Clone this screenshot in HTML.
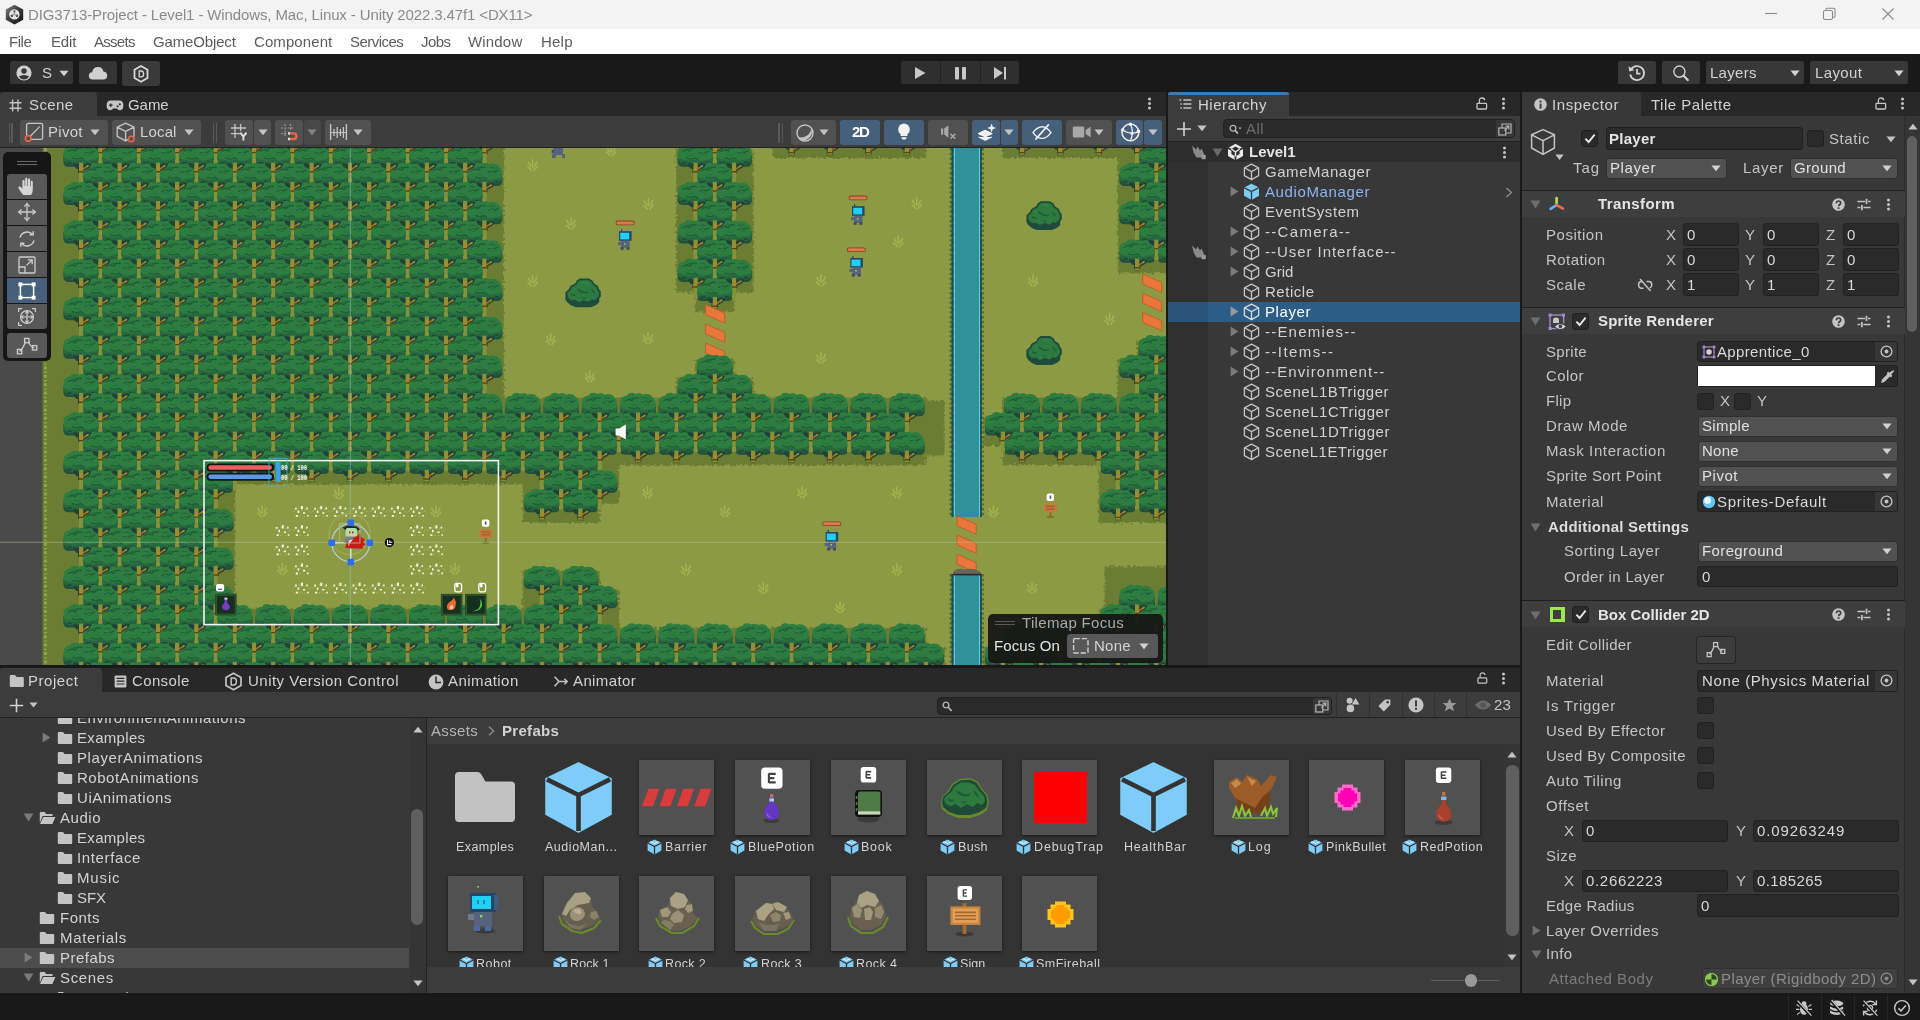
<!DOCTYPE html>
<html><head><meta charset="utf-8"><title>Unity</title><style>
html,body{margin:0;padding:0;background:#191919;}
body{width:1920px;height:1020px;overflow:hidden;position:relative;font-family:"Liberation Sans",sans-serif;}
div,span.t,svg{position:absolute;}
span.t{white-space:nowrap;will-change:transform;}
</style></head><body>
<!-- top -->
<div style="left:0px;top:0px;width:1920px;height:29px;background:#f3f3f3;"></div>
<svg style="left:3.5px;top:4px;" width="21" height="22" viewBox="0 0 21 22"><defs><linearGradient id="ug" x1="0" y1="0" x2="1" y2="1"><stop offset="0" stop-color="#8a8a8a"/><stop offset=".45" stop-color="#3c3c3c"/><stop offset="1" stop-color="#111"/></linearGradient></defs><path d="M10.500 0.800L19.200 5.600V15.800L10.500 20.600L1.800 15.800V5.600Z" fill="url(#ug)"/><circle cx="10.400" cy="10.400" r="5.200" fill="#e4e4e4"/><circle cx="10.400" cy="7.400" r="1.100" fill="#555"/><circle cx="7.900" cy="11.800" r="1.200" fill="#444"/><circle cx="12.900" cy="11.800" r="1.200" fill="#444"/><path d="M10.400 10.400V7.600M10.400 10.400L8 11.800M10.400 10.400L12.800 11.800" stroke="#777" stroke-width=".8"/></svg>
<span class="t" style="left:27.5px;top:4.50px;font-size:15px;line-height:20px;color:#8a8a8a;letter-spacing:-0.121px;">DIG3713-Project - Level1 - Windows, Mac, Linux - Unity 2022.3.47f1 &lt;DX11&gt;</span>
<svg style="left:1760px;top:5px;" width="140" height="20" viewBox="0 0 140 20"><path d="M5 8.5 H17" stroke="#8a8a8a" stroke-width="1.1" fill="none"/><rect x="63.5" y="5.5" width="9" height="9" rx="1.5" stroke="#8a8a8a" stroke-width="1.1" fill="none"/><path d="M66 5.5 V4.5 Q66 3.2 67.3 3.2 H73.5 Q75 3.2 75 4.7 V11 Q75 12.3 73.7 12.3 H72.6" stroke="#8a8a8a" stroke-width="1.1" fill="none"/><path d="M122.5 3.5 L133.5 14.5 M133.5 3.5 L122.5 14.5" stroke="#8a8a8a" stroke-width="1.1" fill="none"/></svg>
<div style="left:0px;top:29px;width:1920px;height:25px;background:#ffffff;"></div>
<span class="t" style="left:9.3px;top:31.50px;font-size:15px;line-height:20px;color:#5c5c5c;letter-spacing:-0.443px;">File</span>
<span class="t" style="left:50.7px;top:31.50px;font-size:15px;line-height:20px;color:#5c5c5c;letter-spacing:-0.137px;">Edit</span>
<span class="t" style="left:94.3px;top:31.50px;font-size:15px;line-height:20px;color:#5c5c5c;letter-spacing:-0.719px;">Assets</span>
<span class="t" style="left:153.3px;top:31.50px;font-size:15px;line-height:20px;color:#5c5c5c;letter-spacing:-0.150px;">GameObject</span>
<span class="t" style="left:254px;top:31.50px;font-size:15px;line-height:20px;color:#5c5c5c;letter-spacing:0.084px;">Component</span>
<span class="t" style="left:350px;top:31.50px;font-size:15px;line-height:20px;color:#5c5c5c;letter-spacing:-0.527px;">Services</span>
<span class="t" style="left:420.7px;top:31.50px;font-size:15px;line-height:20px;color:#5c5c5c;letter-spacing:-0.596px;">Jobs</span>
<span class="t" style="left:468.3px;top:31.50px;font-size:15px;line-height:20px;color:#5c5c5c;letter-spacing:0.175px;">Window</span>
<span class="t" style="left:541px;top:31.50px;font-size:15px;line-height:20px;color:#5c5c5c;letter-spacing:0.213px;">Help</span>
<div style="left:0px;top:54px;width:1920px;height:38px;background:#191919;"></div>
<div style="left:10px;top:61px;width:63px;height:23px;background:#353535;border-radius:2px;"></div>
<div style="left:79px;top:61px;width:38px;height:23px;background:#353535;border-radius:2px;"></div>
<div style="left:122px;top:61px;width:38px;height:25px;background:#3a3a3a;border-radius:3px;"></div>
<svg style="left:16px;top:65px;" width="16" height="16" viewBox="0 0 16 16"><circle cx="8" cy="8" r="7.6" fill="#d0d0d0"/><circle cx="8" cy="6" r="2.7" fill="#353535"/><path d="M2.8 11.6 Q8 8.2 13.2 11.6 Q11 14.6 8 14.6 Q5 14.6 2.8 11.6Z" fill="#353535"/></svg>
<span class="t" style="left:42px;top:63.00px;font-size:15px;line-height:20px;color:#d2d2d2;letter-spacing:0.500px;">S</span>
<svg style="left:59px;top:70px;" width="10" height="7" viewBox="0 0 10 7"><path d="M0.5 0.8 H9.5 L5 6.2Z" fill="#d2d2d2"/></svg>
<svg style="left:88px;top:66px;" width="20" height="14" viewBox="0 0 20 14"><path d="M5 13.5 Q0.8 13.5 0.8 9.8 Q0.8 6.6 4.2 6.2 Q5 1 10 1 Q14.4 1 15.4 5.4 Q19.2 5.8 19.2 9.6 Q19.2 13.5 15.2 13.5Z" fill="#d0d0d0"/></svg>
<svg style="left:133px;top:65px;" width="16" height="18" viewBox="0 0 16 18"><path d="M8 1 L14.5 4.8 V13 L8 16.8 L1.5 13 V4.8Z" fill="none" stroke="#d8d8d8" stroke-width="1.8"/><path d="M6.2 6 H8.2 Q10.6 6 10.6 8.9 Q10.6 11.8 8.2 11.8 H6.2Z" fill="none" stroke="#d8d8d8" stroke-width="1.3"/></svg>
<div style="left:901px;top:61px;width:118px;height:23px;background:#2f2f2f;border-radius:2px;"></div>
<div style="left:940px;top:61px;width:1px;height:23px;background:#222;"></div>
<div style="left:980px;top:61px;width:1px;height:23px;background:#222;"></div>
<svg style="left:901px;top:61px;" width="118" height="23" viewBox="0 0 118 23"><path d="M14 6 L24.5 12 L14 18Z" fill="#c8c8c8"/><rect x="54" y="6" width="4" height="12.5" rx="1" fill="#c8c8c8"/><rect x="61" y="6" width="4" height="12.5" rx="1" fill="#c8c8c8"/><path d="M93 6 L102 12 L93 18Z" fill="#c8c8c8"/><rect x="103" y="6" width="2" height="12.5" fill="#c8c8c8"/></svg>
<div style="left:1618px;top:61px;width:38px;height:23px;background:#383838;border-radius:2px;"></div>
<div style="left:1662px;top:61px;width:38px;height:23px;background:#383838;border-radius:2px;"></div>
<div style="left:1706px;top:61px;width:98px;height:23px;background:#383838;border-radius:2px;"></div>
<div style="left:1810px;top:61px;width:98px;height:23px;background:#383838;border-radius:2px;"></div>
<svg style="left:1628px;top:64px;" width="18" height="18" viewBox="0 0 18 18"><path d="M3.2 5.2 A7 7 0 1 1 2.2 10.5" fill="none" stroke="#d0d0d0" stroke-width="1.8"/><path d="M0.6 2.2 L1.2 7.6 L6.4 6.2Z" fill="#d0d0d0"/><path d="M9 5 V9.6 H12.4" fill="none" stroke="#d0d0d0" stroke-width="1.8"/></svg>
<svg style="left:1672px;top:64px;" width="18" height="18" viewBox="0 0 18 18"><circle cx="7.4" cy="7.6" r="5.6" fill="none" stroke="#d0d0d0" stroke-width="1.4"/><path d="M11.6 11.8 L15.8 16" stroke="#d0d0d0" stroke-width="2.2" stroke-linecap="round"/></svg>
<span class="t" style="left:1710px;top:62.50px;font-size:15px;line-height:20px;color:#d2d2d2;letter-spacing:0.280px;">Layers</span>
<span class="t" style="left:1814.5px;top:62.50px;font-size:15px;line-height:20px;color:#d2d2d2;letter-spacing:0.361px;">Layout</span>
<svg style="left:1790px;top:70px;" width="10" height="7" viewBox="0 0 10 7"><path d="M0.5 0.6 H9.5 L5 6.2Z" fill="#d2d2d2"/></svg>
<svg style="left:1894px;top:70px;" width="10" height="7" viewBox="0 0 10 7"><path d="M0.5 0.6 H9.5 L5 6.2Z" fill="#d2d2d2"/></svg>
<!-- scene -->
<svg style="left:0;top:148px" width="1166" height="517" viewBox="0 0 1166 517"><defs>
<g id="tk"><path d="M-9 17.5H11L5.5 24.4H3.2V28.8H-3.2V24.4H-5Z" fill="#20433a"/><rect x="-2.2" y="17" width="4.4" height="22" fill="#84933a"/><path d="M-2.2 21.2H2.2V23.8L6.4 21L7.6 22.4L2.2 26.4V27.8H-2.2Z" fill="#9a8c31"/><path d="M-2.2 26.8H2.2V28.2H-2.2ZM2.2 25L5.2 22.8L6 24L2.2 26.6Z" fill="#6e3d14"/></g>
<g id="tks"><path d="M-9 17.5H11L5.5 24.4H3.2V28.8H-3.2V24.4H-5Z" fill="#20433a"/><rect x="-2.2" y="17" width="4.4" height="12.6" fill="#84933a"/><path d="M-2.2 21.2H2.2V23.8L6.4 21L7.6 22.4L2.2 26.4V27.8H-2.2Z" fill="#9a8c31"/><path d="M-2.2 26.8H2.2V28.2H-2.2ZM2.2 25L5.2 22.8L6 24L2.2 26.6Z" fill="#6e3d14"/><path d="M-3.4 29.6H3.4V31H-3.4Z" fill="#5a6c2a"/></g>
<g id="tb"><path d="M2.2 20.4L10.5 19L8.4 23.4L2.2 27ZM-2.2 20.4L-8.6 19.2L-6.4 22.6L-2.2 24.6Z" fill="#1f4238"/><path d="M2.2 23.8L6.8 20.4L8 21.8L2.2 26.3Z" fill="#9a8c31"/><path d="M2.2 25.2L5.4 22.8L6 23.8L2.2 26.6Z" fill="#6e3d14"/></g>
<rect id="tu" x="-17.8" y="8" width="35.6" height="14.4" rx="4.5" fill="#21503b"/>
<g id="tr"><g transform="translate(0 -1.7) scale(1.04 1.135)"><path d="M-16.8 9C-16.8 5-14 3-10.5 3.2C-10 .8-5.5-.4-2.5 1.6C0 .6 3 .8 4.5 2.2C8 .8 12.5 1.6 13.5 4C16 5 16.8 7.5 16.8 10.5V13C16.8 16.6 14.6 18.6 11 18.8L4.4 19.8L2.4 17.6H-2.4L-4.4 19.8L-11 18.8C-14.6 18.6-16.8 16.6-16.8 13Z" fill="#2d7c40"/><path d="M-16.8 12.6C-14 16.2-9 14.2-6 16.2C-3 14.6 3 14.6 6 16.2C9 14.2 14 16.2 16.8 12.6V13C16.8 16.6 14.6 18.6 11 18.8L4.4 19.8L2.4 17.6H-2.4L-4.4 19.8L-11 18.8C-14.6 18.6-16.8 16.6-16.8 13Z" fill="#28683f"/><path d="M-13.6 17h4.6v1.4h-4.6zM-7 18h3v1.2H-7zM4 17.8h3.6v1.3H4zM9.6 16.8h4.2v1.4H9.6z" fill="#1f4a3b"/><path d="M-9 6.6c1-2 4-2.600 6-1.400c-2.400-.2-4.400.4-6 1.400zM3 5.400c2.400-1.400 6-1.200 8 .6c-2.600-.6-5.400-.8-8-.6zM-8 11.600c2.600-1 5.600-1 8 .2c-2.600-.4-5.400-.5-8-.2zM5 11c2-.8 4.600-.8 6.600 0c-2.200-.2-4.400-.2-6.600 0z" fill="#1f5a3a" opacity=".7"/><path d="M-13 8.600q2.600-3.600 7.400-1.200q1.200-3.600 6.600-2.400M3.400 9.400q3-2.600 6.600-.6l3.400-1.600M-9 13.400q4 2 8.400.2l3 1.200" fill="none" stroke="#1e5538" stroke-width="1.100" opacity=".85"/><path d="M-14 9.500c1.500-1.400 3.400-1.600 5-.8c-1.800 0-3.400.2-5 .8zM3 8.400c2-1.200 4.600-1.200 6.600 0c-2.400-.2-4.400-.3-6.600 0z" fill="#34904a" opacity=".8"/></g></g>
<g id="tf" stroke="#a9b752" stroke-width="1.5" fill="none" opacity=".9"><path d="M1.600 3.400L4.400 8.400M6 .8V9.400M10.400 3L7.800 8.400M3.200 9.400L5.200 12.600M9 9.400L7 12.600M1 8l1.600 2M11 7.600l-1.400 2.400"/></g>
<filter id="rg" x="-2%" y="-2%" width="104%" height="104%"><feTurbulence type="fractalNoise" baseFrequency=".42" numOctaves="1" seed="7" result="n"/><feDisplacementMap in="SourceGraphic" in2="n" scale="7" xChannelSelector="R" yChannelSelector="G"/></filter>
</defs>
<rect x="0" y="0" width="1166" height="517" fill="#4a4a4a"/>
<rect x="42.8" y="0" width="1123.2" height="517" fill="#8d9a45"/>
<rect x="42.8" y="0" width="41" height="517" fill="#6b7d33"/>
<path d="M45.5 0V517" stroke="#a3b153" stroke-width="2.6" stroke-dasharray="3 2.2 1.4 1.8" opacity=".8"/>
<path d="M82.4 -17.9h36v38.6h-36zM120.8 -17.9h36v38.6h-36zM159.2 -17.9h36v38.6h-36zM197.6 -17.9h36v38.6h-36zM236.0 -17.9h36v38.6h-36zM274.4 -17.9h36v38.6h-36zM312.8 -17.9h36v38.6h-36zM351.2 -17.9h36v38.6h-36zM389.6 -17.9h36v38.6h-36zM428.0 -17.9h36v38.6h-36zM466.4 -17.9h36v38.6h-36zM696.8 -17.9h36v38.6h-36zM773.6 -17.9h36v26.5h-36zM812.0 -17.9h36v26.5h-36zM850.4 -17.9h36v26.5h-36zM888.8 -17.9h36v26.5h-36zM1004.0 -17.9h36v26.5h-36zM1042.4 -17.9h36v26.5h-36zM1080.8 -17.9h36v26.5h-36zM1119.2 -17.9h36v38.6h-36zM63.2 1.3h36v38.6h-36zM101.6 1.3h36v38.6h-36zM140.0 1.3h36v38.6h-36zM178.4 1.3h36v38.6h-36zM216.8 1.3h36v38.6h-36zM255.2 1.3h36v38.6h-36zM293.6 1.3h36v38.6h-36zM332.0 1.3h36v38.6h-36zM370.4 1.3h36v38.6h-36zM408.8 1.3h36v38.6h-36zM447.2 1.3h36v38.6h-36zM677.6 1.3h36v38.6h-36zM716.0 1.3h36v38.6h-36zM1138.4 1.3h36v38.6h-36zM82.4 20.5h36v38.6h-36zM120.8 20.5h36v38.6h-36zM159.2 20.5h36v38.6h-36zM197.6 20.5h36v38.6h-36zM236.0 20.5h36v38.6h-36zM274.4 20.5h36v38.6h-36zM312.8 20.5h36v38.6h-36zM351.2 20.5h36v38.6h-36zM389.6 20.5h36v38.6h-36zM428.0 20.5h36v38.6h-36zM466.4 20.5h36v38.6h-36zM696.8 20.5h36v38.6h-36zM1119.2 20.5h36v38.6h-36zM1157.6 20.5h36v38.6h-36zM63.2 39.7h36v38.6h-36zM101.6 39.7h36v38.6h-36zM140.0 39.7h36v38.6h-36zM178.4 39.7h36v38.6h-36zM216.8 39.7h36v38.6h-36zM255.2 39.7h36v38.6h-36zM293.6 39.7h36v38.6h-36zM332.0 39.7h36v38.6h-36zM370.4 39.7h36v38.6h-36zM408.8 39.7h36v38.6h-36zM447.2 39.7h36v38.6h-36zM677.6 39.7h36v38.6h-36zM716.0 39.7h36v38.6h-36zM1138.4 39.7h36v38.6h-36zM82.4 58.9h36v38.6h-36zM120.8 58.9h36v38.6h-36zM159.2 58.9h36v38.6h-36zM197.6 58.9h36v38.6h-36zM236.0 58.9h36v38.6h-36zM274.4 58.9h36v38.6h-36zM312.8 58.9h36v38.6h-36zM351.2 58.9h36v38.6h-36zM389.6 58.9h36v38.6h-36zM428.0 58.9h36v38.6h-36zM466.4 58.9h36v38.6h-36zM696.8 58.9h36v38.6h-36zM1119.2 58.9h36v38.6h-36zM1157.6 58.9h36v38.6h-36zM63.2 78.1h36v38.6h-36zM101.6 78.1h36v38.6h-36zM140.0 78.1h36v38.6h-36zM178.4 78.1h36v38.6h-36zM216.8 78.1h36v38.6h-36zM255.2 78.1h36v38.6h-36zM293.6 78.1h36v38.6h-36zM332.0 78.1h36v38.6h-36zM370.4 78.1h36v38.6h-36zM408.8 78.1h36v38.6h-36zM447.2 78.1h36v38.6h-36zM677.6 78.1h36v38.6h-36zM716.0 78.1h36v38.6h-36zM1138.4 78.1h36v26.5h-36zM82.4 97.3h36v38.6h-36zM120.8 97.3h36v38.6h-36zM159.2 97.3h36v38.6h-36zM197.6 97.3h36v38.6h-36zM236.0 97.3h36v38.6h-36zM274.4 97.3h36v38.6h-36zM312.8 97.3h36v38.6h-36zM351.2 97.3h36v38.6h-36zM389.6 97.3h36v38.6h-36zM428.0 97.3h36v38.6h-36zM466.4 97.3h36v38.6h-36zM696.8 97.3h36v38.6h-36zM1119.2 97.3h36v26.5h-36zM1157.6 97.3h36v26.5h-36zM63.2 116.5h36v38.6h-36zM101.6 116.5h36v38.6h-36zM140.0 116.5h36v38.6h-36zM178.4 116.5h36v38.6h-36zM216.8 116.5h36v38.6h-36zM255.2 116.5h36v38.6h-36zM293.6 116.5h36v38.6h-36zM332.0 116.5h36v38.6h-36zM370.4 116.5h36v38.6h-36zM408.8 116.5h36v38.6h-36zM447.2 116.5h36v38.6h-36zM677.6 116.5h36v26.5h-36zM716.0 116.5h36v26.5h-36zM82.4 135.7h36v38.6h-36zM120.8 135.7h36v38.6h-36zM159.2 135.7h36v38.6h-36zM197.6 135.7h36v38.6h-36zM236.0 135.7h36v38.6h-36zM274.4 135.7h36v38.6h-36zM312.8 135.7h36v38.6h-36zM351.2 135.7h36v38.6h-36zM389.6 135.7h36v38.6h-36zM428.0 135.7h36v38.6h-36zM466.4 135.7h36v38.6h-36zM696.8 135.7h36v26.5h-36zM63.2 154.9h36v38.6h-36zM101.6 154.9h36v38.6h-36zM140.0 154.9h36v38.6h-36zM178.4 154.9h36v38.6h-36zM216.8 154.9h36v38.6h-36zM255.2 154.9h36v38.6h-36zM293.6 154.9h36v38.6h-36zM332.0 154.9h36v38.6h-36zM370.4 154.9h36v38.6h-36zM408.8 154.9h36v38.6h-36zM447.2 154.9h36v38.6h-36zM82.4 174.1h36v38.6h-36zM120.8 174.1h36v38.6h-36zM159.2 174.1h36v38.6h-36zM197.6 174.1h36v38.6h-36zM236.0 174.1h36v38.6h-36zM274.4 174.1h36v38.6h-36zM312.8 174.1h36v38.6h-36zM351.2 174.1h36v38.6h-36zM389.6 174.1h36v38.6h-36zM428.0 174.1h36v38.6h-36zM466.4 174.1h36v38.6h-36zM63.2 193.3h36v38.6h-36zM101.6 193.3h36v38.6h-36zM140.0 193.3h36v38.6h-36zM178.4 193.3h36v38.6h-36zM216.8 193.3h36v38.6h-36zM255.2 193.3h36v38.6h-36zM293.6 193.3h36v38.6h-36zM332.0 193.3h36v38.6h-36zM370.4 193.3h36v38.6h-36zM408.8 193.3h36v38.6h-36zM447.2 193.3h36v38.6h-36zM1138.4 193.3h36v38.6h-36zM82.4 212.5h36v38.6h-36zM120.8 212.5h36v38.6h-36zM159.2 212.5h36v38.6h-36zM197.6 212.5h36v38.6h-36zM236.0 212.5h36v38.6h-36zM274.4 212.5h36v38.6h-36zM312.8 212.5h36v38.6h-36zM351.2 212.5h36v38.6h-36zM389.6 212.5h36v38.6h-36zM428.0 212.5h36v38.6h-36zM466.4 212.5h36v38.6h-36zM696.8 212.5h36v38.6h-36zM1119.2 212.5h36v38.6h-36zM1157.6 212.5h36v38.6h-36zM63.2 231.7h36v38.6h-36zM101.6 231.7h36v38.6h-36zM140.0 231.7h36v38.6h-36zM178.4 231.7h36v38.6h-36zM216.8 231.7h36v38.6h-36zM255.2 231.7h36v38.6h-36zM293.6 231.7h36v38.6h-36zM332.0 231.7h36v38.6h-36zM370.4 231.7h36v38.6h-36zM408.8 231.7h36v38.6h-36zM447.2 231.7h36v38.6h-36zM677.6 231.7h36v38.6h-36zM716.0 231.7h36v38.6h-36zM1138.4 231.7h36v38.6h-36zM82.4 250.9h36v38.6h-36zM120.8 250.9h36v38.6h-36zM159.2 250.9h36v38.6h-36zM197.6 250.9h36v38.6h-36zM236.0 250.9h36v38.6h-36zM274.4 250.9h36v38.6h-36zM312.8 250.9h36v38.6h-36zM351.2 250.9h36v38.6h-36zM389.6 250.9h36v38.6h-36zM428.0 250.9h36v38.6h-36zM466.4 250.9h36v38.6h-36zM504.8 250.9h36v38.6h-36zM543.2 250.9h36v38.6h-36zM581.6 250.9h36v38.6h-36zM620.0 250.9h36v38.6h-36zM658.4 250.9h36v38.6h-36zM696.8 250.9h36v38.6h-36zM735.2 250.9h36v38.6h-36zM773.6 250.9h36v38.6h-36zM812.0 250.9h36v38.6h-36zM850.4 250.9h36v38.6h-36zM888.8 250.9h36v38.6h-36zM1004.0 250.9h36v38.6h-36zM1042.4 250.9h36v38.6h-36zM1080.8 250.9h36v38.6h-36zM1119.2 250.9h36v38.6h-36zM1157.6 250.9h36v38.6h-36zM63.2 270.1h36v38.6h-36zM101.6 270.1h36v38.6h-36zM140.0 270.1h36v38.6h-36zM178.4 270.1h36v38.6h-36zM216.8 270.1h36v38.6h-36zM255.2 270.1h36v38.6h-36zM293.6 270.1h36v38.6h-36zM332.0 270.1h36v38.6h-36zM370.4 270.1h36v38.6h-36zM408.8 270.1h36v38.6h-36zM447.2 270.1h36v38.6h-36zM485.6 270.1h36v38.6h-36zM524.0 270.1h36v38.6h-36zM562.4 270.1h36v38.6h-36zM600.8 270.1h36v26.5h-36zM639.2 270.1h36v26.5h-36zM677.6 270.1h36v26.5h-36zM716.0 270.1h36v26.5h-36zM754.4 270.1h36v26.5h-36zM792.8 270.1h36v26.5h-36zM831.2 270.1h36v26.5h-36zM869.6 270.1h36v26.5h-36zM984.8 270.1h36v26.5h-36zM1023.2 270.1h36v26.5h-36zM1061.6 270.1h36v26.5h-36zM1100.0 270.1h36v38.6h-36zM1138.4 270.1h36v38.6h-36zM82.4 289.3h36v38.6h-36zM120.8 289.3h36v38.6h-36zM159.2 289.3h36v38.6h-36zM197.6 289.3h36v38.6h-36zM236.0 289.3h36v26.5h-36zM274.4 289.3h36v26.5h-36zM312.8 289.3h36v26.5h-36zM351.2 289.3h36v26.5h-36zM389.6 289.3h36v26.5h-36zM428.0 289.3h36v26.5h-36zM466.4 289.3h36v26.5h-36zM504.8 289.3h36v26.5h-36zM543.2 289.3h36v38.6h-36zM581.6 289.3h36v38.6h-36zM620.0 289.3h36v26.5h-36zM658.4 289.3h36v26.5h-36zM696.8 289.3h36v26.5h-36zM735.2 289.3h36v26.5h-36zM773.6 289.3h36v26.5h-36zM812.0 289.3h36v26.5h-36zM850.4 289.3h36v26.5h-36zM888.8 289.3h36v26.5h-36zM1004.0 289.3h36v26.5h-36zM1042.4 289.3h36v26.5h-36zM1080.8 289.3h36v26.5h-36zM1119.2 289.3h36v38.6h-36zM1157.6 289.3h36v38.6h-36zM63.2 308.5h36v38.6h-36zM101.6 308.5h36v38.6h-36zM140.0 308.5h36v38.6h-36zM178.4 308.5h36v38.6h-36zM216.8 308.5h36v26.5h-36zM255.2 308.5h36v26.5h-36zM293.6 308.5h36v26.5h-36zM332.0 308.5h36v26.5h-36zM370.4 308.5h36v26.5h-36zM408.8 308.5h36v26.5h-36zM447.2 308.5h36v26.5h-36zM485.6 308.5h36v26.5h-36zM524.0 308.5h36v38.6h-36zM562.4 308.5h36v38.6h-36zM1100.0 308.5h36v38.6h-36zM1138.4 308.5h36v38.6h-36zM82.4 327.7h36v38.6h-36zM120.8 327.7h36v38.6h-36zM159.2 327.7h36v38.6h-36zM197.6 327.7h36v38.6h-36zM543.2 327.7h36v26.5h-36zM581.6 327.7h36v26.5h-36zM1119.2 327.7h36v26.5h-36zM1157.6 327.7h36v26.5h-36zM63.2 346.9h36v38.6h-36zM101.6 346.9h36v38.6h-36zM140.0 346.9h36v38.6h-36zM178.4 346.9h36v38.6h-36zM524.0 346.9h36v26.5h-36zM562.4 346.9h36v26.5h-36zM1100.0 346.9h36v26.5h-36zM1138.4 346.9h36v26.5h-36zM82.4 366.1h36v38.6h-36zM120.8 366.1h36v38.6h-36zM159.2 366.1h36v38.6h-36zM197.6 366.1h36v38.6h-36zM63.2 385.3h36v38.6h-36zM101.6 385.3h36v38.6h-36zM140.0 385.3h36v38.6h-36zM178.4 385.3h36v38.6h-36zM82.4 404.5h36v38.6h-36zM120.8 404.5h36v38.6h-36zM159.2 404.5h36v38.6h-36zM197.6 404.5h36v38.6h-36zM63.2 423.7h36v38.6h-36zM101.6 423.7h36v38.6h-36zM140.0 423.7h36v38.6h-36zM178.4 423.7h36v38.6h-36zM524.0 423.7h36v38.6h-36zM562.4 423.7h36v38.6h-36zM82.4 442.9h36v38.6h-36zM120.8 442.9h36v38.6h-36zM159.2 442.9h36v38.6h-36zM197.6 442.9h36v38.6h-36zM543.2 442.9h36v38.6h-36zM581.6 442.9h36v38.6h-36zM1119.2 442.9h36v38.6h-36zM1157.6 442.9h36v38.6h-36zM63.2 462.1h36v38.6h-36zM101.6 462.1h36v38.6h-36zM140.0 462.1h36v38.6h-36zM178.4 462.1h36v38.6h-36zM216.8 462.1h36v38.6h-36zM255.2 462.1h36v38.6h-36zM293.6 462.1h36v38.6h-36zM332.0 462.1h36v38.6h-36zM370.4 462.1h36v38.6h-36zM408.8 462.1h36v38.6h-36zM447.2 462.1h36v38.6h-36zM485.6 462.1h36v38.6h-36zM524.0 462.1h36v38.6h-36zM562.4 462.1h36v38.6h-36zM1100.0 462.1h36v38.6h-36zM1138.4 462.1h36v38.6h-36zM82.4 481.3h36v38.6h-36zM120.8 481.3h36v38.6h-36zM159.2 481.3h36v38.6h-36zM197.6 481.3h36v38.6h-36zM236.0 481.3h36v38.6h-36zM274.4 481.3h36v38.6h-36zM312.8 481.3h36v38.6h-36zM351.2 481.3h36v38.6h-36zM389.6 481.3h36v38.6h-36zM428.0 481.3h36v38.6h-36zM466.4 481.3h36v38.6h-36zM504.8 481.3h36v38.6h-36zM543.2 481.3h36v38.6h-36zM581.6 481.3h36v38.6h-36zM620.0 481.3h36v38.6h-36zM658.4 481.3h36v38.6h-36zM696.8 481.3h36v38.6h-36zM735.2 481.3h36v38.6h-36zM773.6 481.3h36v38.6h-36zM812.0 481.3h36v38.6h-36zM850.4 481.3h36v38.6h-36zM888.8 481.3h36v38.6h-36zM1004.0 481.3h36v38.6h-36zM1042.4 481.3h36v38.6h-36zM1080.8 481.3h36v38.6h-36zM1119.2 481.3h36v38.6h-36zM1157.6 481.3h36v38.6h-36zM63.2 500.5h36v26.5h-36zM101.6 500.5h36v26.5h-36zM140.0 500.5h36v26.5h-36zM178.4 500.5h36v26.5h-36zM216.8 500.5h36v26.5h-36zM255.2 500.5h36v26.5h-36zM293.6 500.5h36v26.5h-36zM332.0 500.5h36v26.5h-36zM370.4 500.5h36v26.5h-36zM408.8 500.5h36v26.5h-36zM447.2 500.5h36v26.5h-36zM485.6 500.5h36v26.5h-36zM524.0 500.5h36v26.5h-36zM562.4 500.5h36v26.5h-36zM600.8 500.5h36v26.5h-36zM639.2 500.5h36v26.5h-36zM677.6 500.5h36v26.5h-36zM716.0 500.5h36v26.5h-36zM754.4 500.5h36v26.5h-36zM792.8 500.5h36v26.5h-36zM831.2 500.5h36v26.5h-36zM869.6 500.5h36v26.5h-36zM908.0 500.5h36v26.5h-36zM984.8 500.5h36v26.5h-36zM1023.2 500.5h36v26.5h-36zM1061.6 500.5h36v26.5h-36zM1100.0 500.5h36v26.5h-36zM1138.4 500.5h36v26.5h-36zM82.4 519.7h36v26.5h-36zM120.8 519.7h36v26.5h-36zM159.2 519.7h36v26.5h-36zM197.6 519.7h36v26.5h-36zM236.0 519.7h36v26.5h-36zM274.4 519.7h36v26.5h-36zM312.8 519.7h36v26.5h-36zM351.2 519.7h36v26.5h-36zM389.6 519.7h36v26.5h-36zM428.0 519.7h36v26.5h-36zM466.4 519.7h36v26.5h-36zM504.8 519.7h36v26.5h-36zM543.2 519.7h36v26.5h-36zM581.6 519.7h36v26.5h-36zM620.0 519.7h36v26.5h-36zM658.4 519.7h36v26.5h-36zM696.8 519.7h36v26.5h-36zM735.2 519.7h36v26.5h-36zM773.6 519.7h36v26.5h-36zM812.0 519.7h36v26.5h-36zM850.4 519.7h36v26.5h-36zM888.8 519.7h36v26.5h-36zM1004.0 519.7h36v26.5h-36zM1042.4 519.7h36v26.5h-36zM1080.8 519.7h36v26.5h-36zM1119.2 519.7h36v26.5h-36zM1157.6 519.7h36v26.5h-36zM906 254h37v52h-37zM1106 420h60v56h-60z" fill="#6b7d33" stroke="#6b7d33" stroke-width="3" stroke-linejoin="round" filter="url(#rg)"/>
<path d="M951 0V369M982.4 0V369" stroke="#5d6b2c" stroke-width="3" stroke-dasharray="2.4 2.4"/><rect x="951.6" y="0" width="30" height="369" fill="#1f4f52"/><rect x="953.6" y="0" width="26.4" height="369" fill="#58d4e0"/><path d="M952.6 0V369M981 0V369" stroke="#1f4f52" stroke-width="2" stroke-dasharray="5 2.6"/><rect x="955" y="0" width="24" height="369" fill="#31909a"/>
<path d="M951 426V517M982.4 426V517" stroke="#5d6b2c" stroke-width="3" stroke-dasharray="2.4 2.4"/><rect x="951.6" y="426" width="30" height="91" fill="#1f4f52"/><rect x="953.6" y="426" width="26.4" height="91" fill="#58d4e0"/><path d="M952.6 426V517M981 426V517" stroke="#1f4f52" stroke-width="2" stroke-dasharray="5 2.6"/><rect x="955" y="426" width="24" height="91" fill="#31909a"/>
<use href="#tu" x="100.4" y="-22.9"/><use href="#tu" x="138.8" y="-22.9"/><use href="#tu" x="177.2" y="-22.9"/><use href="#tu" x="215.6" y="-22.9"/><use href="#tu" x="254.0" y="-22.9"/><use href="#tu" x="292.4" y="-22.9"/><use href="#tu" x="330.8" y="-22.9"/><use href="#tu" x="369.2" y="-22.9"/><use href="#tu" x="407.6" y="-22.9"/><use href="#tu" x="446.0" y="-22.9"/><use href="#tu" x="484.4" y="-22.9"/><use href="#tu" x="714.8" y="-22.9"/><use href="#tu" x="791.6" y="-22.9"/><use href="#tu" x="830.0" y="-22.9"/><use href="#tu" x="868.4" y="-22.9"/><use href="#tu" x="906.8" y="-22.9"/><use href="#tu" x="1022.0" y="-22.9"/><use href="#tu" x="1060.4" y="-22.9"/><use href="#tu" x="1098.8" y="-22.9"/><use href="#tu" x="1137.2" y="-22.9"/><use href="#tu" x="81.2" y="-3.7"/><use href="#tu" x="119.6" y="-3.7"/><use href="#tu" x="158.0" y="-3.7"/><use href="#tu" x="196.4" y="-3.7"/><use href="#tu" x="234.8" y="-3.7"/><use href="#tu" x="273.2" y="-3.7"/><use href="#tu" x="311.6" y="-3.7"/><use href="#tu" x="350.0" y="-3.7"/><use href="#tu" x="388.4" y="-3.7"/><use href="#tu" x="426.8" y="-3.7"/><use href="#tu" x="465.2" y="-3.7"/><use href="#tu" x="695.6" y="-3.7"/><use href="#tu" x="734.0" y="-3.7"/><use href="#tu" x="1156.4" y="-3.7"/><use href="#tu" x="100.4" y="15.5"/><use href="#tu" x="138.8" y="15.5"/><use href="#tu" x="177.2" y="15.5"/><use href="#tu" x="215.6" y="15.5"/><use href="#tu" x="254.0" y="15.5"/><use href="#tu" x="292.4" y="15.5"/><use href="#tu" x="330.8" y="15.5"/><use href="#tu" x="369.2" y="15.5"/><use href="#tu" x="407.6" y="15.5"/><use href="#tu" x="446.0" y="15.5"/><use href="#tu" x="484.4" y="15.5"/><use href="#tu" x="714.8" y="15.5"/><use href="#tu" x="1137.2" y="15.5"/><use href="#tu" x="1175.6" y="15.5"/><use href="#tu" x="81.2" y="34.7"/><use href="#tu" x="119.6" y="34.7"/><use href="#tu" x="158.0" y="34.7"/><use href="#tu" x="196.4" y="34.7"/><use href="#tu" x="234.8" y="34.7"/><use href="#tu" x="273.2" y="34.7"/><use href="#tu" x="311.6" y="34.7"/><use href="#tu" x="350.0" y="34.7"/><use href="#tu" x="388.4" y="34.7"/><use href="#tu" x="426.8" y="34.7"/><use href="#tu" x="465.2" y="34.7"/><use href="#tu" x="695.6" y="34.7"/><use href="#tu" x="734.0" y="34.7"/><use href="#tu" x="1156.4" y="34.7"/><use href="#tu" x="100.4" y="53.9"/><use href="#tu" x="138.8" y="53.9"/><use href="#tu" x="177.2" y="53.9"/><use href="#tu" x="215.6" y="53.9"/><use href="#tu" x="254.0" y="53.9"/><use href="#tu" x="292.4" y="53.9"/><use href="#tu" x="330.8" y="53.9"/><use href="#tu" x="369.2" y="53.9"/><use href="#tu" x="407.6" y="53.9"/><use href="#tu" x="446.0" y="53.9"/><use href="#tu" x="484.4" y="53.9"/><use href="#tu" x="714.8" y="53.9"/><use href="#tu" x="1137.2" y="53.9"/><use href="#tu" x="1175.6" y="53.9"/><use href="#tu" x="81.2" y="73.1"/><use href="#tu" x="119.6" y="73.1"/><use href="#tu" x="158.0" y="73.1"/><use href="#tu" x="196.4" y="73.1"/><use href="#tu" x="234.8" y="73.1"/><use href="#tu" x="273.2" y="73.1"/><use href="#tu" x="311.6" y="73.1"/><use href="#tu" x="350.0" y="73.1"/><use href="#tu" x="388.4" y="73.1"/><use href="#tu" x="426.8" y="73.1"/><use href="#tu" x="465.2" y="73.1"/><use href="#tu" x="695.6" y="73.1"/><use href="#tu" x="734.0" y="73.1"/><use href="#tu" x="1156.4" y="73.1"/><use href="#tu" x="100.4" y="92.3"/><use href="#tu" x="138.8" y="92.3"/><use href="#tu" x="177.2" y="92.3"/><use href="#tu" x="215.6" y="92.3"/><use href="#tu" x="254.0" y="92.3"/><use href="#tu" x="292.4" y="92.3"/><use href="#tu" x="330.8" y="92.3"/><use href="#tu" x="369.2" y="92.3"/><use href="#tu" x="407.6" y="92.3"/><use href="#tu" x="446.0" y="92.3"/><use href="#tu" x="484.4" y="92.3"/><use href="#tu" x="714.8" y="92.3"/><use href="#tu" x="1137.2" y="92.3"/><use href="#tu" x="1175.6" y="92.3"/><use href="#tu" x="81.2" y="111.5"/><use href="#tu" x="119.6" y="111.5"/><use href="#tu" x="158.0" y="111.5"/><use href="#tu" x="196.4" y="111.5"/><use href="#tu" x="234.8" y="111.5"/><use href="#tu" x="273.2" y="111.5"/><use href="#tu" x="311.6" y="111.5"/><use href="#tu" x="350.0" y="111.5"/><use href="#tu" x="388.4" y="111.5"/><use href="#tu" x="426.8" y="111.5"/><use href="#tu" x="465.2" y="111.5"/><use href="#tu" x="695.6" y="111.5"/><use href="#tu" x="734.0" y="111.5"/><use href="#tu" x="100.4" y="130.7"/><use href="#tu" x="138.8" y="130.7"/><use href="#tu" x="177.2" y="130.7"/><use href="#tu" x="215.6" y="130.7"/><use href="#tu" x="254.0" y="130.7"/><use href="#tu" x="292.4" y="130.7"/><use href="#tu" x="330.8" y="130.7"/><use href="#tu" x="369.2" y="130.7"/><use href="#tu" x="407.6" y="130.7"/><use href="#tu" x="446.0" y="130.7"/><use href="#tu" x="484.4" y="130.7"/><use href="#tu" x="714.8" y="130.7"/><use href="#tu" x="81.2" y="149.9"/><use href="#tu" x="119.6" y="149.9"/><use href="#tu" x="158.0" y="149.9"/><use href="#tu" x="196.4" y="149.9"/><use href="#tu" x="234.8" y="149.9"/><use href="#tu" x="273.2" y="149.9"/><use href="#tu" x="311.6" y="149.9"/><use href="#tu" x="350.0" y="149.9"/><use href="#tu" x="388.4" y="149.9"/><use href="#tu" x="426.8" y="149.9"/><use href="#tu" x="465.2" y="149.9"/><use href="#tu" x="100.4" y="169.1"/><use href="#tu" x="138.8" y="169.1"/><use href="#tu" x="177.2" y="169.1"/><use href="#tu" x="215.6" y="169.1"/><use href="#tu" x="254.0" y="169.1"/><use href="#tu" x="292.4" y="169.1"/><use href="#tu" x="330.8" y="169.1"/><use href="#tu" x="369.2" y="169.1"/><use href="#tu" x="407.6" y="169.1"/><use href="#tu" x="446.0" y="169.1"/><use href="#tu" x="484.4" y="169.1"/><use href="#tu" x="81.2" y="188.3"/><use href="#tu" x="119.6" y="188.3"/><use href="#tu" x="158.0" y="188.3"/><use href="#tu" x="196.4" y="188.3"/><use href="#tu" x="234.8" y="188.3"/><use href="#tu" x="273.2" y="188.3"/><use href="#tu" x="311.6" y="188.3"/><use href="#tu" x="350.0" y="188.3"/><use href="#tu" x="388.4" y="188.3"/><use href="#tu" x="426.8" y="188.3"/><use href="#tu" x="465.2" y="188.3"/><use href="#tu" x="1156.4" y="188.3"/><use href="#tu" x="100.4" y="207.5"/><use href="#tu" x="138.8" y="207.5"/><use href="#tu" x="177.2" y="207.5"/><use href="#tu" x="215.6" y="207.5"/><use href="#tu" x="254.0" y="207.5"/><use href="#tu" x="292.4" y="207.5"/><use href="#tu" x="330.8" y="207.5"/><use href="#tu" x="369.2" y="207.5"/><use href="#tu" x="407.6" y="207.5"/><use href="#tu" x="446.0" y="207.5"/><use href="#tu" x="484.4" y="207.5"/><use href="#tu" x="714.8" y="207.5"/><use href="#tu" x="1137.2" y="207.5"/><use href="#tu" x="1175.6" y="207.5"/><use href="#tu" x="81.2" y="226.7"/><use href="#tu" x="119.6" y="226.7"/><use href="#tu" x="158.0" y="226.7"/><use href="#tu" x="196.4" y="226.7"/><use href="#tu" x="234.8" y="226.7"/><use href="#tu" x="273.2" y="226.7"/><use href="#tu" x="311.6" y="226.7"/><use href="#tu" x="350.0" y="226.7"/><use href="#tu" x="388.4" y="226.7"/><use href="#tu" x="426.8" y="226.7"/><use href="#tu" x="465.2" y="226.7"/><use href="#tu" x="695.6" y="226.7"/><use href="#tu" x="734.0" y="226.7"/><use href="#tu" x="1156.4" y="226.7"/><use href="#tu" x="100.4" y="245.9"/><use href="#tu" x="138.8" y="245.9"/><use href="#tu" x="177.2" y="245.9"/><use href="#tu" x="215.6" y="245.9"/><use href="#tu" x="254.0" y="245.9"/><use href="#tu" x="292.4" y="245.9"/><use href="#tu" x="330.8" y="245.9"/><use href="#tu" x="369.2" y="245.9"/><use href="#tu" x="407.6" y="245.9"/><use href="#tu" x="446.0" y="245.9"/><use href="#tu" x="484.4" y="245.9"/><use href="#tu" x="522.8" y="245.9"/><use href="#tu" x="561.2" y="245.9"/><use href="#tu" x="599.6" y="245.9"/><use href="#tu" x="638.0" y="245.9"/><use href="#tu" x="676.4" y="245.9"/><use href="#tu" x="714.8" y="245.9"/><use href="#tu" x="753.2" y="245.9"/><use href="#tu" x="791.6" y="245.9"/><use href="#tu" x="830.0" y="245.9"/><use href="#tu" x="868.4" y="245.9"/><use href="#tu" x="906.8" y="245.9"/><use href="#tu" x="1022.0" y="245.9"/><use href="#tu" x="1060.4" y="245.9"/><use href="#tu" x="1098.8" y="245.9"/><use href="#tu" x="1137.2" y="245.9"/><use href="#tu" x="1175.6" y="245.9"/><use href="#tu" x="81.2" y="265.1"/><use href="#tu" x="119.6" y="265.1"/><use href="#tu" x="158.0" y="265.1"/><use href="#tu" x="196.4" y="265.1"/><use href="#tu" x="234.8" y="265.1"/><use href="#tu" x="273.2" y="265.1"/><use href="#tu" x="311.6" y="265.1"/><use href="#tu" x="350.0" y="265.1"/><use href="#tu" x="388.4" y="265.1"/><use href="#tu" x="426.8" y="265.1"/><use href="#tu" x="465.2" y="265.1"/><use href="#tu" x="503.6" y="265.1"/><use href="#tu" x="542.0" y="265.1"/><use href="#tu" x="580.4" y="265.1"/><use href="#tu" x="618.8" y="265.1"/><use href="#tu" x="657.2" y="265.1"/><use href="#tu" x="695.6" y="265.1"/><use href="#tu" x="734.0" y="265.1"/><use href="#tu" x="772.4" y="265.1"/><use href="#tu" x="810.8" y="265.1"/><use href="#tu" x="849.2" y="265.1"/><use href="#tu" x="887.6" y="265.1"/><use href="#tu" x="1002.8" y="265.1"/><use href="#tu" x="1041.2" y="265.1"/><use href="#tu" x="1079.6" y="265.1"/><use href="#tu" x="1118.0" y="265.1"/><use href="#tu" x="1156.4" y="265.1"/><use href="#tu" x="100.4" y="284.3"/><use href="#tu" x="138.8" y="284.3"/><use href="#tu" x="177.2" y="284.3"/><use href="#tu" x="215.6" y="284.3"/><use href="#tu" x="254.0" y="284.3"/><use href="#tu" x="292.4" y="284.3"/><use href="#tu" x="330.8" y="284.3"/><use href="#tu" x="369.2" y="284.3"/><use href="#tu" x="407.6" y="284.3"/><use href="#tu" x="446.0" y="284.3"/><use href="#tu" x="484.4" y="284.3"/><use href="#tu" x="522.8" y="284.3"/><use href="#tu" x="561.2" y="284.3"/><use href="#tu" x="599.6" y="284.3"/><use href="#tu" x="638.0" y="284.3"/><use href="#tu" x="676.4" y="284.3"/><use href="#tu" x="714.8" y="284.3"/><use href="#tu" x="753.2" y="284.3"/><use href="#tu" x="791.6" y="284.3"/><use href="#tu" x="830.0" y="284.3"/><use href="#tu" x="868.4" y="284.3"/><use href="#tu" x="906.8" y="284.3"/><use href="#tu" x="1022.0" y="284.3"/><use href="#tu" x="1060.4" y="284.3"/><use href="#tu" x="1098.8" y="284.3"/><use href="#tu" x="1137.2" y="284.3"/><use href="#tu" x="1175.6" y="284.3"/><use href="#tu" x="81.2" y="303.5"/><use href="#tu" x="119.6" y="303.5"/><use href="#tu" x="158.0" y="303.5"/><use href="#tu" x="196.4" y="303.5"/><use href="#tu" x="234.8" y="303.5"/><use href="#tu" x="273.2" y="303.5"/><use href="#tu" x="311.6" y="303.5"/><use href="#tu" x="350.0" y="303.5"/><use href="#tu" x="388.4" y="303.5"/><use href="#tu" x="426.8" y="303.5"/><use href="#tu" x="465.2" y="303.5"/><use href="#tu" x="503.6" y="303.5"/><use href="#tu" x="542.0" y="303.5"/><use href="#tu" x="580.4" y="303.5"/><use href="#tu" x="1118.0" y="303.5"/><use href="#tu" x="1156.4" y="303.5"/><use href="#tu" x="100.4" y="322.7"/><use href="#tu" x="138.8" y="322.7"/><use href="#tu" x="177.2" y="322.7"/><use href="#tu" x="215.6" y="322.7"/><use href="#tu" x="561.2" y="322.7"/><use href="#tu" x="599.6" y="322.7"/><use href="#tu" x="1137.2" y="322.7"/><use href="#tu" x="1175.6" y="322.7"/><use href="#tu" x="81.2" y="341.9"/><use href="#tu" x="119.6" y="341.9"/><use href="#tu" x="158.0" y="341.9"/><use href="#tu" x="196.4" y="341.9"/><use href="#tu" x="542.0" y="341.9"/><use href="#tu" x="580.4" y="341.9"/><use href="#tu" x="1118.0" y="341.9"/><use href="#tu" x="1156.4" y="341.9"/><use href="#tu" x="100.4" y="361.1"/><use href="#tu" x="138.8" y="361.1"/><use href="#tu" x="177.2" y="361.1"/><use href="#tu" x="215.6" y="361.1"/><use href="#tu" x="81.2" y="380.3"/><use href="#tu" x="119.6" y="380.3"/><use href="#tu" x="158.0" y="380.3"/><use href="#tu" x="196.4" y="380.3"/><use href="#tu" x="100.4" y="399.5"/><use href="#tu" x="138.8" y="399.5"/><use href="#tu" x="177.2" y="399.5"/><use href="#tu" x="215.6" y="399.5"/><use href="#tu" x="81.2" y="418.7"/><use href="#tu" x="119.6" y="418.7"/><use href="#tu" x="158.0" y="418.7"/><use href="#tu" x="196.4" y="418.7"/><use href="#tu" x="542.0" y="418.7"/><use href="#tu" x="580.4" y="418.7"/><use href="#tu" x="100.4" y="437.9"/><use href="#tu" x="138.8" y="437.9"/><use href="#tu" x="177.2" y="437.9"/><use href="#tu" x="215.6" y="437.9"/><use href="#tu" x="561.2" y="437.9"/><use href="#tu" x="599.6" y="437.9"/><use href="#tu" x="1137.2" y="437.9"/><use href="#tu" x="1175.6" y="437.9"/><use href="#tu" x="81.2" y="457.1"/><use href="#tu" x="119.6" y="457.1"/><use href="#tu" x="158.0" y="457.1"/><use href="#tu" x="196.4" y="457.1"/><use href="#tu" x="234.8" y="457.1"/><use href="#tu" x="273.2" y="457.1"/><use href="#tu" x="311.6" y="457.1"/><use href="#tu" x="350.0" y="457.1"/><use href="#tu" x="388.4" y="457.1"/><use href="#tu" x="426.8" y="457.1"/><use href="#tu" x="465.2" y="457.1"/><use href="#tu" x="503.6" y="457.1"/><use href="#tu" x="542.0" y="457.1"/><use href="#tu" x="580.4" y="457.1"/><use href="#tu" x="1118.0" y="457.1"/><use href="#tu" x="1156.4" y="457.1"/><use href="#tu" x="100.4" y="476.3"/><use href="#tu" x="138.8" y="476.3"/><use href="#tu" x="177.2" y="476.3"/><use href="#tu" x="215.6" y="476.3"/><use href="#tu" x="254.0" y="476.3"/><use href="#tu" x="292.4" y="476.3"/><use href="#tu" x="330.8" y="476.3"/><use href="#tu" x="369.2" y="476.3"/><use href="#tu" x="407.6" y="476.3"/><use href="#tu" x="446.0" y="476.3"/><use href="#tu" x="484.4" y="476.3"/><use href="#tu" x="522.8" y="476.3"/><use href="#tu" x="561.2" y="476.3"/><use href="#tu" x="599.6" y="476.3"/><use href="#tu" x="638.0" y="476.3"/><use href="#tu" x="676.4" y="476.3"/><use href="#tu" x="714.8" y="476.3"/><use href="#tu" x="753.2" y="476.3"/><use href="#tu" x="791.6" y="476.3"/><use href="#tu" x="830.0" y="476.3"/><use href="#tu" x="868.4" y="476.3"/><use href="#tu" x="906.8" y="476.3"/><use href="#tu" x="1022.0" y="476.3"/><use href="#tu" x="1060.4" y="476.3"/><use href="#tu" x="1098.8" y="476.3"/><use href="#tu" x="1137.2" y="476.3"/><use href="#tu" x="1175.6" y="476.3"/><use href="#tu" x="81.2" y="495.5"/><use href="#tu" x="119.6" y="495.5"/><use href="#tu" x="158.0" y="495.5"/><use href="#tu" x="196.4" y="495.5"/><use href="#tu" x="234.8" y="495.5"/><use href="#tu" x="273.2" y="495.5"/><use href="#tu" x="311.6" y="495.5"/><use href="#tu" x="350.0" y="495.5"/><use href="#tu" x="388.4" y="495.5"/><use href="#tu" x="426.8" y="495.5"/><use href="#tu" x="465.2" y="495.5"/><use href="#tu" x="503.6" y="495.5"/><use href="#tu" x="542.0" y="495.5"/><use href="#tu" x="580.4" y="495.5"/><use href="#tu" x="618.8" y="495.5"/><use href="#tu" x="657.2" y="495.5"/><use href="#tu" x="695.6" y="495.5"/><use href="#tu" x="734.0" y="495.5"/><use href="#tu" x="772.4" y="495.5"/><use href="#tu" x="810.8" y="495.5"/><use href="#tu" x="849.2" y="495.5"/><use href="#tu" x="887.6" y="495.5"/><use href="#tu" x="926.0" y="495.5"/><use href="#tu" x="1002.8" y="495.5"/><use href="#tu" x="1041.2" y="495.5"/><use href="#tu" x="1079.6" y="495.5"/><use href="#tu" x="1118.0" y="495.5"/><use href="#tu" x="1156.4" y="495.5"/><use href="#tu" x="100.4" y="514.7"/><use href="#tu" x="138.8" y="514.7"/><use href="#tu" x="177.2" y="514.7"/><use href="#tu" x="215.6" y="514.7"/><use href="#tu" x="254.0" y="514.7"/><use href="#tu" x="292.4" y="514.7"/><use href="#tu" x="330.8" y="514.7"/><use href="#tu" x="369.2" y="514.7"/><use href="#tu" x="407.6" y="514.7"/><use href="#tu" x="446.0" y="514.7"/><use href="#tu" x="484.4" y="514.7"/><use href="#tu" x="522.8" y="514.7"/><use href="#tu" x="561.2" y="514.7"/><use href="#tu" x="599.6" y="514.7"/><use href="#tu" x="638.0" y="514.7"/><use href="#tu" x="676.4" y="514.7"/><use href="#tu" x="714.8" y="514.7"/><use href="#tu" x="753.2" y="514.7"/><use href="#tu" x="791.6" y="514.7"/><use href="#tu" x="830.0" y="514.7"/><use href="#tu" x="868.4" y="514.7"/><use href="#tu" x="906.8" y="514.7"/><use href="#tu" x="1022.0" y="514.7"/><use href="#tu" x="1060.4" y="514.7"/><use href="#tu" x="1098.8" y="514.7"/><use href="#tu" x="1137.2" y="514.7"/><use href="#tu" x="1175.6" y="514.7"/><use href="#tk" x="100.4" y="-22.9"/><use href="#tk" x="138.8" y="-22.9"/><use href="#tk" x="177.2" y="-22.9"/><use href="#tk" x="215.6" y="-22.9"/><use href="#tk" x="254.0" y="-22.9"/><use href="#tk" x="292.4" y="-22.9"/><use href="#tk" x="330.8" y="-22.9"/><use href="#tk" x="369.2" y="-22.9"/><use href="#tk" x="407.6" y="-22.9"/><use href="#tk" x="446.0" y="-22.9"/><use href="#tk" x="484.4" y="-22.9"/><use href="#tk" x="714.8" y="-22.9"/><use href="#tks" x="791.6" y="-22.9"/><use href="#tks" x="830.0" y="-22.9"/><use href="#tks" x="868.4" y="-22.9"/><use href="#tks" x="906.8" y="-22.9"/><use href="#tks" x="1022.0" y="-22.9"/><use href="#tks" x="1060.4" y="-22.9"/><use href="#tks" x="1098.8" y="-22.9"/><use href="#tk" x="1137.2" y="-22.9"/><use href="#tk" x="81.2" y="-3.7"/><use href="#tk" x="119.6" y="-3.7"/><use href="#tk" x="158.0" y="-3.7"/><use href="#tk" x="196.4" y="-3.7"/><use href="#tk" x="234.8" y="-3.7"/><use href="#tk" x="273.2" y="-3.7"/><use href="#tk" x="311.6" y="-3.7"/><use href="#tk" x="350.0" y="-3.7"/><use href="#tk" x="388.4" y="-3.7"/><use href="#tk" x="426.8" y="-3.7"/><use href="#tk" x="465.2" y="-3.7"/><use href="#tk" x="695.6" y="-3.7"/><use href="#tk" x="734.0" y="-3.7"/><use href="#tk" x="1156.4" y="-3.7"/><use href="#tk" x="100.4" y="15.5"/><use href="#tk" x="138.8" y="15.5"/><use href="#tk" x="177.2" y="15.5"/><use href="#tk" x="215.6" y="15.5"/><use href="#tk" x="254.0" y="15.5"/><use href="#tk" x="292.4" y="15.5"/><use href="#tk" x="330.8" y="15.5"/><use href="#tk" x="369.2" y="15.5"/><use href="#tk" x="407.6" y="15.5"/><use href="#tk" x="446.0" y="15.5"/><use href="#tk" x="484.4" y="15.5"/><use href="#tk" x="714.8" y="15.5"/><use href="#tk" x="1137.2" y="15.5"/><use href="#tk" x="1175.6" y="15.5"/><use href="#tk" x="81.2" y="34.7"/><use href="#tk" x="119.6" y="34.7"/><use href="#tk" x="158.0" y="34.7"/><use href="#tk" x="196.4" y="34.7"/><use href="#tk" x="234.8" y="34.7"/><use href="#tk" x="273.2" y="34.7"/><use href="#tk" x="311.6" y="34.7"/><use href="#tk" x="350.0" y="34.7"/><use href="#tk" x="388.4" y="34.7"/><use href="#tk" x="426.8" y="34.7"/><use href="#tk" x="465.2" y="34.7"/><use href="#tk" x="695.6" y="34.7"/><use href="#tk" x="734.0" y="34.7"/><use href="#tk" x="1156.4" y="34.7"/><use href="#tk" x="100.4" y="53.9"/><use href="#tk" x="138.8" y="53.9"/><use href="#tk" x="177.2" y="53.9"/><use href="#tk" x="215.6" y="53.9"/><use href="#tk" x="254.0" y="53.9"/><use href="#tk" x="292.4" y="53.9"/><use href="#tk" x="330.8" y="53.9"/><use href="#tk" x="369.2" y="53.9"/><use href="#tk" x="407.6" y="53.9"/><use href="#tk" x="446.0" y="53.9"/><use href="#tk" x="484.4" y="53.9"/><use href="#tk" x="714.8" y="53.9"/><use href="#tk" x="1137.2" y="53.9"/><use href="#tk" x="1175.6" y="53.9"/><use href="#tk" x="81.2" y="73.1"/><use href="#tk" x="119.6" y="73.1"/><use href="#tk" x="158.0" y="73.1"/><use href="#tk" x="196.4" y="73.1"/><use href="#tk" x="234.8" y="73.1"/><use href="#tk" x="273.2" y="73.1"/><use href="#tk" x="311.6" y="73.1"/><use href="#tk" x="350.0" y="73.1"/><use href="#tk" x="388.4" y="73.1"/><use href="#tk" x="426.8" y="73.1"/><use href="#tk" x="465.2" y="73.1"/><use href="#tk" x="695.6" y="73.1"/><use href="#tk" x="734.0" y="73.1"/><use href="#tk" x="1156.4" y="73.1"/><use href="#tk" x="100.4" y="92.3"/><use href="#tk" x="138.8" y="92.3"/><use href="#tk" x="177.2" y="92.3"/><use href="#tk" x="215.6" y="92.3"/><use href="#tk" x="254.0" y="92.3"/><use href="#tk" x="292.4" y="92.3"/><use href="#tk" x="330.8" y="92.3"/><use href="#tk" x="369.2" y="92.3"/><use href="#tk" x="407.6" y="92.3"/><use href="#tk" x="446.0" y="92.3"/><use href="#tk" x="484.4" y="92.3"/><use href="#tk" x="714.8" y="92.3"/><use href="#tks" x="1137.2" y="92.3"/><use href="#tks" x="1175.6" y="92.3"/><use href="#tk" x="81.2" y="111.5"/><use href="#tk" x="119.6" y="111.5"/><use href="#tk" x="158.0" y="111.5"/><use href="#tk" x="196.4" y="111.5"/><use href="#tk" x="234.8" y="111.5"/><use href="#tk" x="273.2" y="111.5"/><use href="#tk" x="311.6" y="111.5"/><use href="#tk" x="350.0" y="111.5"/><use href="#tk" x="388.4" y="111.5"/><use href="#tk" x="426.8" y="111.5"/><use href="#tk" x="465.2" y="111.5"/><use href="#tk" x="695.6" y="111.5"/><use href="#tk" x="734.0" y="111.5"/><use href="#tk" x="100.4" y="130.7"/><use href="#tk" x="138.8" y="130.7"/><use href="#tk" x="177.2" y="130.7"/><use href="#tk" x="215.6" y="130.7"/><use href="#tk" x="254.0" y="130.7"/><use href="#tk" x="292.4" y="130.7"/><use href="#tk" x="330.8" y="130.7"/><use href="#tk" x="369.2" y="130.7"/><use href="#tk" x="407.6" y="130.7"/><use href="#tk" x="446.0" y="130.7"/><use href="#tk" x="484.4" y="130.7"/><use href="#tks" x="714.8" y="130.7"/><use href="#tk" x="81.2" y="149.9"/><use href="#tk" x="119.6" y="149.9"/><use href="#tk" x="158.0" y="149.9"/><use href="#tk" x="196.4" y="149.9"/><use href="#tk" x="234.8" y="149.9"/><use href="#tk" x="273.2" y="149.9"/><use href="#tk" x="311.6" y="149.9"/><use href="#tk" x="350.0" y="149.9"/><use href="#tk" x="388.4" y="149.9"/><use href="#tk" x="426.8" y="149.9"/><use href="#tk" x="465.2" y="149.9"/><use href="#tk" x="100.4" y="169.1"/><use href="#tk" x="138.8" y="169.1"/><use href="#tk" x="177.2" y="169.1"/><use href="#tk" x="215.6" y="169.1"/><use href="#tk" x="254.0" y="169.1"/><use href="#tk" x="292.4" y="169.1"/><use href="#tk" x="330.8" y="169.1"/><use href="#tk" x="369.2" y="169.1"/><use href="#tk" x="407.6" y="169.1"/><use href="#tk" x="446.0" y="169.1"/><use href="#tk" x="484.4" y="169.1"/><use href="#tk" x="81.2" y="188.3"/><use href="#tk" x="119.6" y="188.3"/><use href="#tk" x="158.0" y="188.3"/><use href="#tk" x="196.4" y="188.3"/><use href="#tk" x="234.8" y="188.3"/><use href="#tk" x="273.2" y="188.3"/><use href="#tk" x="311.6" y="188.3"/><use href="#tk" x="350.0" y="188.3"/><use href="#tk" x="388.4" y="188.3"/><use href="#tk" x="426.8" y="188.3"/><use href="#tk" x="465.2" y="188.3"/><use href="#tk" x="1156.4" y="188.3"/><use href="#tk" x="100.4" y="207.5"/><use href="#tk" x="138.8" y="207.5"/><use href="#tk" x="177.2" y="207.5"/><use href="#tk" x="215.6" y="207.5"/><use href="#tk" x="254.0" y="207.5"/><use href="#tk" x="292.4" y="207.5"/><use href="#tk" x="330.8" y="207.5"/><use href="#tk" x="369.2" y="207.5"/><use href="#tk" x="407.6" y="207.5"/><use href="#tk" x="446.0" y="207.5"/><use href="#tk" x="484.4" y="207.5"/><use href="#tk" x="714.8" y="207.5"/><use href="#tk" x="1137.2" y="207.5"/><use href="#tk" x="1175.6" y="207.5"/><use href="#tk" x="81.2" y="226.7"/><use href="#tk" x="119.6" y="226.7"/><use href="#tk" x="158.0" y="226.7"/><use href="#tk" x="196.4" y="226.7"/><use href="#tk" x="234.8" y="226.7"/><use href="#tk" x="273.2" y="226.7"/><use href="#tk" x="311.6" y="226.7"/><use href="#tk" x="350.0" y="226.7"/><use href="#tk" x="388.4" y="226.7"/><use href="#tk" x="426.8" y="226.7"/><use href="#tk" x="465.2" y="226.7"/><use href="#tk" x="695.6" y="226.7"/><use href="#tk" x="734.0" y="226.7"/><use href="#tk" x="1156.4" y="226.7"/><use href="#tk" x="100.4" y="245.9"/><use href="#tk" x="138.8" y="245.9"/><use href="#tk" x="177.2" y="245.9"/><use href="#tk" x="215.6" y="245.9"/><use href="#tk" x="254.0" y="245.9"/><use href="#tk" x="292.4" y="245.9"/><use href="#tk" x="330.8" y="245.9"/><use href="#tk" x="369.2" y="245.9"/><use href="#tk" x="407.6" y="245.9"/><use href="#tk" x="446.0" y="245.9"/><use href="#tk" x="484.4" y="245.9"/><use href="#tk" x="522.8" y="245.9"/><use href="#tk" x="561.2" y="245.9"/><use href="#tk" x="599.6" y="245.9"/><use href="#tk" x="638.0" y="245.9"/><use href="#tk" x="676.4" y="245.9"/><use href="#tk" x="714.8" y="245.9"/><use href="#tk" x="753.2" y="245.9"/><use href="#tk" x="791.6" y="245.9"/><use href="#tk" x="830.0" y="245.9"/><use href="#tk" x="868.4" y="245.9"/><use href="#tk" x="906.8" y="245.9"/><use href="#tk" x="1022.0" y="245.9"/><use href="#tk" x="1060.4" y="245.9"/><use href="#tk" x="1098.8" y="245.9"/><use href="#tk" x="1137.2" y="245.9"/><use href="#tk" x="1175.6" y="245.9"/><use href="#tk" x="81.2" y="265.1"/><use href="#tk" x="119.6" y="265.1"/><use href="#tk" x="158.0" y="265.1"/><use href="#tk" x="196.4" y="265.1"/><use href="#tk" x="234.8" y="265.1"/><use href="#tk" x="273.2" y="265.1"/><use href="#tk" x="311.6" y="265.1"/><use href="#tk" x="350.0" y="265.1"/><use href="#tk" x="388.4" y="265.1"/><use href="#tk" x="426.8" y="265.1"/><use href="#tk" x="465.2" y="265.1"/><use href="#tk" x="503.6" y="265.1"/><use href="#tk" x="542.0" y="265.1"/><use href="#tk" x="580.4" y="265.1"/><use href="#tk" x="618.8" y="265.1"/><use href="#tk" x="657.2" y="265.1"/><use href="#tk" x="695.6" y="265.1"/><use href="#tk" x="734.0" y="265.1"/><use href="#tk" x="772.4" y="265.1"/><use href="#tk" x="810.8" y="265.1"/><use href="#tk" x="849.2" y="265.1"/><use href="#tk" x="887.6" y="265.1"/><use href="#tk" x="1002.8" y="265.1"/><use href="#tk" x="1041.2" y="265.1"/><use href="#tk" x="1079.6" y="265.1"/><use href="#tk" x="1118.0" y="265.1"/><use href="#tk" x="1156.4" y="265.1"/><use href="#tk" x="100.4" y="284.3"/><use href="#tk" x="138.8" y="284.3"/><use href="#tk" x="177.2" y="284.3"/><use href="#tk" x="215.6" y="284.3"/><use href="#tk" x="254.0" y="284.3"/><use href="#tk" x="292.4" y="284.3"/><use href="#tk" x="330.8" y="284.3"/><use href="#tk" x="369.2" y="284.3"/><use href="#tk" x="407.6" y="284.3"/><use href="#tk" x="446.0" y="284.3"/><use href="#tk" x="484.4" y="284.3"/><use href="#tk" x="522.8" y="284.3"/><use href="#tk" x="561.2" y="284.3"/><use href="#tk" x="599.6" y="284.3"/><use href="#tks" x="638.0" y="284.3"/><use href="#tks" x="676.4" y="284.3"/><use href="#tks" x="714.8" y="284.3"/><use href="#tks" x="753.2" y="284.3"/><use href="#tks" x="791.6" y="284.3"/><use href="#tks" x="830.0" y="284.3"/><use href="#tks" x="868.4" y="284.3"/><use href="#tks" x="906.8" y="284.3"/><use href="#tks" x="1022.0" y="284.3"/><use href="#tks" x="1060.4" y="284.3"/><use href="#tk" x="1098.8" y="284.3"/><use href="#tk" x="1137.2" y="284.3"/><use href="#tk" x="1175.6" y="284.3"/><use href="#tk" x="81.2" y="303.5"/><use href="#tk" x="119.6" y="303.5"/><use href="#tk" x="158.0" y="303.5"/><use href="#tk" x="196.4" y="303.5"/><use href="#tk" x="234.8" y="303.5"/><use href="#tks" x="273.2" y="303.5"/><use href="#tks" x="311.6" y="303.5"/><use href="#tks" x="350.0" y="303.5"/><use href="#tks" x="388.4" y="303.5"/><use href="#tks" x="426.8" y="303.5"/><use href="#tks" x="465.2" y="303.5"/><use href="#tks" x="503.6" y="303.5"/><use href="#tk" x="542.0" y="303.5"/><use href="#tk" x="580.4" y="303.5"/><use href="#tk" x="1118.0" y="303.5"/><use href="#tk" x="1156.4" y="303.5"/><use href="#tk" x="100.4" y="322.7"/><use href="#tk" x="138.8" y="322.7"/><use href="#tk" x="177.2" y="322.7"/><use href="#tk" x="215.6" y="322.7"/><use href="#tk" x="561.2" y="322.7"/><use href="#tk" x="599.6" y="322.7"/><use href="#tk" x="1137.2" y="322.7"/><use href="#tk" x="1175.6" y="322.7"/><use href="#tk" x="81.2" y="341.9"/><use href="#tk" x="119.6" y="341.9"/><use href="#tk" x="158.0" y="341.9"/><use href="#tk" x="196.4" y="341.9"/><use href="#tks" x="542.0" y="341.9"/><use href="#tks" x="580.4" y="341.9"/><use href="#tks" x="1118.0" y="341.9"/><use href="#tks" x="1156.4" y="341.9"/><use href="#tk" x="100.4" y="361.1"/><use href="#tk" x="138.8" y="361.1"/><use href="#tk" x="177.2" y="361.1"/><use href="#tk" x="215.6" y="361.1"/><use href="#tk" x="81.2" y="380.3"/><use href="#tk" x="119.6" y="380.3"/><use href="#tk" x="158.0" y="380.3"/><use href="#tk" x="196.4" y="380.3"/><use href="#tk" x="100.4" y="399.5"/><use href="#tk" x="138.8" y="399.5"/><use href="#tk" x="177.2" y="399.5"/><use href="#tk" x="215.6" y="399.5"/><use href="#tk" x="81.2" y="418.7"/><use href="#tk" x="119.6" y="418.7"/><use href="#tk" x="158.0" y="418.7"/><use href="#tk" x="196.4" y="418.7"/><use href="#tk" x="542.0" y="418.7"/><use href="#tk" x="580.4" y="418.7"/><use href="#tk" x="100.4" y="437.9"/><use href="#tk" x="138.8" y="437.9"/><use href="#tk" x="177.2" y="437.9"/><use href="#tk" x="215.6" y="437.9"/><use href="#tk" x="561.2" y="437.9"/><use href="#tk" x="599.6" y="437.9"/><use href="#tk" x="1137.2" y="437.9"/><use href="#tk" x="1175.6" y="437.9"/><use href="#tk" x="81.2" y="457.1"/><use href="#tk" x="119.6" y="457.1"/><use href="#tk" x="158.0" y="457.1"/><use href="#tk" x="196.4" y="457.1"/><use href="#tk" x="234.8" y="457.1"/><use href="#tk" x="273.2" y="457.1"/><use href="#tk" x="311.6" y="457.1"/><use href="#tk" x="350.0" y="457.1"/><use href="#tk" x="388.4" y="457.1"/><use href="#tk" x="426.8" y="457.1"/><use href="#tk" x="465.2" y="457.1"/><use href="#tk" x="503.6" y="457.1"/><use href="#tk" x="542.0" y="457.1"/><use href="#tk" x="580.4" y="457.1"/><use href="#tk" x="1118.0" y="457.1"/><use href="#tk" x="1156.4" y="457.1"/><use href="#tk" x="100.4" y="476.3"/><use href="#tk" x="138.8" y="476.3"/><use href="#tk" x="177.2" y="476.3"/><use href="#tk" x="215.6" y="476.3"/><use href="#tk" x="254.0" y="476.3"/><use href="#tk" x="292.4" y="476.3"/><use href="#tk" x="330.8" y="476.3"/><use href="#tk" x="369.2" y="476.3"/><use href="#tk" x="407.6" y="476.3"/><use href="#tk" x="446.0" y="476.3"/><use href="#tk" x="484.4" y="476.3"/><use href="#tk" x="522.8" y="476.3"/><use href="#tk" x="561.2" y="476.3"/><use href="#tk" x="599.6" y="476.3"/><use href="#tk" x="638.0" y="476.3"/><use href="#tk" x="676.4" y="476.3"/><use href="#tk" x="714.8" y="476.3"/><use href="#tk" x="753.2" y="476.3"/><use href="#tk" x="791.6" y="476.3"/><use href="#tk" x="830.0" y="476.3"/><use href="#tk" x="868.4" y="476.3"/><use href="#tk" x="906.8" y="476.3"/><use href="#tk" x="1022.0" y="476.3"/><use href="#tk" x="1060.4" y="476.3"/><use href="#tk" x="1098.8" y="476.3"/><use href="#tk" x="1137.2" y="476.3"/><use href="#tk" x="1175.6" y="476.3"/><use href="#tk" x="81.2" y="495.5"/><use href="#tk" x="119.6" y="495.5"/><use href="#tk" x="158.0" y="495.5"/><use href="#tk" x="196.4" y="495.5"/><use href="#tk" x="234.8" y="495.5"/><use href="#tk" x="273.2" y="495.5"/><use href="#tk" x="311.6" y="495.5"/><use href="#tk" x="350.0" y="495.5"/><use href="#tk" x="388.4" y="495.5"/><use href="#tk" x="426.8" y="495.5"/><use href="#tk" x="465.2" y="495.5"/><use href="#tk" x="503.6" y="495.5"/><use href="#tk" x="542.0" y="495.5"/><use href="#tk" x="580.4" y="495.5"/><use href="#tk" x="618.8" y="495.5"/><use href="#tk" x="657.2" y="495.5"/><use href="#tk" x="695.6" y="495.5"/><use href="#tk" x="734.0" y="495.5"/><use href="#tk" x="772.4" y="495.5"/><use href="#tk" x="810.8" y="495.5"/><use href="#tk" x="849.2" y="495.5"/><use href="#tk" x="887.6" y="495.5"/><use href="#tk" x="926.0" y="495.5"/><use href="#tk" x="1002.8" y="495.5"/><use href="#tk" x="1041.2" y="495.5"/><use href="#tk" x="1079.6" y="495.5"/><use href="#tk" x="1118.0" y="495.5"/><use href="#tk" x="1156.4" y="495.5"/><use href="#tks" x="100.4" y="514.7"/><use href="#tks" x="138.8" y="514.7"/><use href="#tks" x="177.2" y="514.7"/><use href="#tks" x="215.6" y="514.7"/><use href="#tks" x="254.0" y="514.7"/><use href="#tks" x="292.4" y="514.7"/><use href="#tks" x="330.8" y="514.7"/><use href="#tks" x="369.2" y="514.7"/><use href="#tks" x="407.6" y="514.7"/><use href="#tks" x="446.0" y="514.7"/><use href="#tks" x="484.4" y="514.7"/><use href="#tks" x="522.8" y="514.7"/><use href="#tks" x="561.2" y="514.7"/><use href="#tks" x="599.6" y="514.7"/><use href="#tks" x="638.0" y="514.7"/><use href="#tks" x="676.4" y="514.7"/><use href="#tks" x="714.8" y="514.7"/><use href="#tks" x="753.2" y="514.7"/><use href="#tks" x="791.6" y="514.7"/><use href="#tks" x="830.0" y="514.7"/><use href="#tks" x="868.4" y="514.7"/><use href="#tks" x="906.8" y="514.7"/><use href="#tks" x="1022.0" y="514.7"/><use href="#tks" x="1060.4" y="514.7"/><use href="#tks" x="1098.8" y="514.7"/><use href="#tks" x="1137.2" y="514.7"/><use href="#tks" x="1175.6" y="514.7"/><use href="#tr" x="100.4" y="-22.9"/><use href="#tr" x="138.8" y="-22.9"/><use href="#tr" x="177.2" y="-22.9"/><use href="#tr" x="215.6" y="-22.9"/><use href="#tr" x="254.0" y="-22.9"/><use href="#tr" x="292.4" y="-22.9"/><use href="#tr" x="330.8" y="-22.9"/><use href="#tr" x="369.2" y="-22.9"/><use href="#tr" x="407.6" y="-22.9"/><use href="#tr" x="446.0" y="-22.9"/><use href="#tr" x="484.4" y="-22.9"/><use href="#tr" x="714.8" y="-22.9"/><use href="#tr" x="791.6" y="-22.9"/><use href="#tr" x="830.0" y="-22.9"/><use href="#tr" x="868.4" y="-22.9"/><use href="#tr" x="906.8" y="-22.9"/><use href="#tr" x="1022.0" y="-22.9"/><use href="#tr" x="1060.4" y="-22.9"/><use href="#tr" x="1098.8" y="-22.9"/><use href="#tr" x="1137.2" y="-22.9"/><use href="#tr" x="81.2" y="-3.7"/><use href="#tr" x="119.6" y="-3.7"/><use href="#tr" x="158.0" y="-3.7"/><use href="#tr" x="196.4" y="-3.7"/><use href="#tr" x="234.8" y="-3.7"/><use href="#tr" x="273.2" y="-3.7"/><use href="#tr" x="311.6" y="-3.7"/><use href="#tr" x="350.0" y="-3.7"/><use href="#tr" x="388.4" y="-3.7"/><use href="#tr" x="426.8" y="-3.7"/><use href="#tr" x="465.2" y="-3.7"/><use href="#tr" x="695.6" y="-3.7"/><use href="#tr" x="734.0" y="-3.7"/><use href="#tr" x="1156.4" y="-3.7"/><use href="#tr" x="100.4" y="15.5"/><use href="#tr" x="138.8" y="15.5"/><use href="#tr" x="177.2" y="15.5"/><use href="#tr" x="215.6" y="15.5"/><use href="#tr" x="254.0" y="15.5"/><use href="#tr" x="292.4" y="15.5"/><use href="#tr" x="330.8" y="15.5"/><use href="#tr" x="369.2" y="15.5"/><use href="#tr" x="407.6" y="15.5"/><use href="#tr" x="446.0" y="15.5"/><use href="#tr" x="484.4" y="15.5"/><use href="#tr" x="714.8" y="15.5"/><use href="#tr" x="1137.2" y="15.5"/><use href="#tr" x="1175.6" y="15.5"/><use href="#tr" x="81.2" y="34.7"/><use href="#tr" x="119.6" y="34.7"/><use href="#tr" x="158.0" y="34.7"/><use href="#tr" x="196.4" y="34.7"/><use href="#tr" x="234.8" y="34.7"/><use href="#tr" x="273.2" y="34.7"/><use href="#tr" x="311.6" y="34.7"/><use href="#tr" x="350.0" y="34.7"/><use href="#tr" x="388.4" y="34.7"/><use href="#tr" x="426.8" y="34.7"/><use href="#tr" x="465.2" y="34.7"/><use href="#tr" x="695.6" y="34.7"/><use href="#tr" x="734.0" y="34.7"/><use href="#tr" x="1156.4" y="34.7"/><use href="#tr" x="100.4" y="53.9"/><use href="#tr" x="138.8" y="53.9"/><use href="#tr" x="177.2" y="53.9"/><use href="#tr" x="215.6" y="53.9"/><use href="#tr" x="254.0" y="53.9"/><use href="#tr" x="292.4" y="53.9"/><use href="#tr" x="330.8" y="53.9"/><use href="#tr" x="369.2" y="53.9"/><use href="#tr" x="407.6" y="53.9"/><use href="#tr" x="446.0" y="53.9"/><use href="#tr" x="484.4" y="53.9"/><use href="#tr" x="714.8" y="53.9"/><use href="#tr" x="1137.2" y="53.9"/><use href="#tr" x="1175.6" y="53.9"/><use href="#tr" x="81.2" y="73.1"/><use href="#tr" x="119.6" y="73.1"/><use href="#tr" x="158.0" y="73.1"/><use href="#tr" x="196.4" y="73.1"/><use href="#tr" x="234.8" y="73.1"/><use href="#tr" x="273.2" y="73.1"/><use href="#tr" x="311.6" y="73.1"/><use href="#tr" x="350.0" y="73.1"/><use href="#tr" x="388.4" y="73.1"/><use href="#tr" x="426.8" y="73.1"/><use href="#tr" x="465.2" y="73.1"/><use href="#tr" x="695.6" y="73.1"/><use href="#tr" x="734.0" y="73.1"/><use href="#tr" x="1156.4" y="73.1"/><use href="#tr" x="100.4" y="92.3"/><use href="#tr" x="138.8" y="92.3"/><use href="#tr" x="177.2" y="92.3"/><use href="#tr" x="215.6" y="92.3"/><use href="#tr" x="254.0" y="92.3"/><use href="#tr" x="292.4" y="92.3"/><use href="#tr" x="330.8" y="92.3"/><use href="#tr" x="369.2" y="92.3"/><use href="#tr" x="407.6" y="92.3"/><use href="#tr" x="446.0" y="92.3"/><use href="#tr" x="484.4" y="92.3"/><use href="#tr" x="714.8" y="92.3"/><use href="#tr" x="1137.2" y="92.3"/><use href="#tr" x="1175.6" y="92.3"/><use href="#tr" x="81.2" y="111.5"/><use href="#tr" x="119.6" y="111.5"/><use href="#tr" x="158.0" y="111.5"/><use href="#tr" x="196.4" y="111.5"/><use href="#tr" x="234.8" y="111.5"/><use href="#tr" x="273.2" y="111.5"/><use href="#tr" x="311.6" y="111.5"/><use href="#tr" x="350.0" y="111.5"/><use href="#tr" x="388.4" y="111.5"/><use href="#tr" x="426.8" y="111.5"/><use href="#tr" x="465.2" y="111.5"/><use href="#tr" x="695.6" y="111.5"/><use href="#tr" x="734.0" y="111.5"/><use href="#tr" x="100.4" y="130.7"/><use href="#tr" x="138.8" y="130.7"/><use href="#tr" x="177.2" y="130.7"/><use href="#tr" x="215.6" y="130.7"/><use href="#tr" x="254.0" y="130.7"/><use href="#tr" x="292.4" y="130.7"/><use href="#tr" x="330.8" y="130.7"/><use href="#tr" x="369.2" y="130.7"/><use href="#tr" x="407.6" y="130.7"/><use href="#tr" x="446.0" y="130.7"/><use href="#tr" x="484.4" y="130.7"/><use href="#tr" x="714.8" y="130.7"/><use href="#tr" x="81.2" y="149.9"/><use href="#tr" x="119.6" y="149.9"/><use href="#tr" x="158.0" y="149.9"/><use href="#tr" x="196.4" y="149.9"/><use href="#tr" x="234.8" y="149.9"/><use href="#tr" x="273.2" y="149.9"/><use href="#tr" x="311.6" y="149.9"/><use href="#tr" x="350.0" y="149.9"/><use href="#tr" x="388.4" y="149.9"/><use href="#tr" x="426.8" y="149.9"/><use href="#tr" x="465.2" y="149.9"/><use href="#tr" x="100.4" y="169.1"/><use href="#tr" x="138.8" y="169.1"/><use href="#tr" x="177.2" y="169.1"/><use href="#tr" x="215.6" y="169.1"/><use href="#tr" x="254.0" y="169.1"/><use href="#tr" x="292.4" y="169.1"/><use href="#tr" x="330.8" y="169.1"/><use href="#tr" x="369.2" y="169.1"/><use href="#tr" x="407.6" y="169.1"/><use href="#tr" x="446.0" y="169.1"/><use href="#tr" x="484.4" y="169.1"/><use href="#tr" x="81.2" y="188.3"/><use href="#tr" x="119.6" y="188.3"/><use href="#tr" x="158.0" y="188.3"/><use href="#tr" x="196.4" y="188.3"/><use href="#tr" x="234.8" y="188.3"/><use href="#tr" x="273.2" y="188.3"/><use href="#tr" x="311.6" y="188.3"/><use href="#tr" x="350.0" y="188.3"/><use href="#tr" x="388.4" y="188.3"/><use href="#tr" x="426.8" y="188.3"/><use href="#tr" x="465.2" y="188.3"/><use href="#tr" x="1156.4" y="188.3"/><use href="#tr" x="100.4" y="207.5"/><use href="#tr" x="138.8" y="207.5"/><use href="#tr" x="177.2" y="207.5"/><use href="#tr" x="215.6" y="207.5"/><use href="#tr" x="254.0" y="207.5"/><use href="#tr" x="292.4" y="207.5"/><use href="#tr" x="330.8" y="207.5"/><use href="#tr" x="369.2" y="207.5"/><use href="#tr" x="407.6" y="207.5"/><use href="#tr" x="446.0" y="207.5"/><use href="#tr" x="484.4" y="207.5"/><use href="#tr" x="714.8" y="207.5"/><use href="#tr" x="1137.2" y="207.5"/><use href="#tr" x="1175.6" y="207.5"/><use href="#tr" x="81.2" y="226.7"/><use href="#tr" x="119.6" y="226.7"/><use href="#tr" x="158.0" y="226.7"/><use href="#tr" x="196.4" y="226.7"/><use href="#tr" x="234.8" y="226.7"/><use href="#tr" x="273.2" y="226.7"/><use href="#tr" x="311.6" y="226.7"/><use href="#tr" x="350.0" y="226.7"/><use href="#tr" x="388.4" y="226.7"/><use href="#tr" x="426.8" y="226.7"/><use href="#tr" x="465.2" y="226.7"/><use href="#tr" x="695.6" y="226.7"/><use href="#tr" x="734.0" y="226.7"/><use href="#tr" x="1156.4" y="226.7"/><use href="#tr" x="100.4" y="245.9"/><use href="#tr" x="138.8" y="245.9"/><use href="#tr" x="177.2" y="245.9"/><use href="#tr" x="215.6" y="245.9"/><use href="#tr" x="254.0" y="245.9"/><use href="#tr" x="292.4" y="245.9"/><use href="#tr" x="330.8" y="245.9"/><use href="#tr" x="369.2" y="245.9"/><use href="#tr" x="407.6" y="245.9"/><use href="#tr" x="446.0" y="245.9"/><use href="#tr" x="484.4" y="245.9"/><use href="#tr" x="522.8" y="245.9"/><use href="#tr" x="561.2" y="245.9"/><use href="#tr" x="599.6" y="245.9"/><use href="#tr" x="638.0" y="245.9"/><use href="#tr" x="676.4" y="245.9"/><use href="#tr" x="714.8" y="245.9"/><use href="#tr" x="753.2" y="245.9"/><use href="#tr" x="791.6" y="245.9"/><use href="#tr" x="830.0" y="245.9"/><use href="#tr" x="868.4" y="245.9"/><use href="#tr" x="906.8" y="245.9"/><use href="#tr" x="1022.0" y="245.9"/><use href="#tr" x="1060.4" y="245.9"/><use href="#tr" x="1098.8" y="245.9"/><use href="#tr" x="1137.2" y="245.9"/><use href="#tr" x="1175.6" y="245.9"/><use href="#tr" x="81.2" y="265.1"/><use href="#tr" x="119.6" y="265.1"/><use href="#tr" x="158.0" y="265.1"/><use href="#tr" x="196.4" y="265.1"/><use href="#tr" x="234.8" y="265.1"/><use href="#tr" x="273.2" y="265.1"/><use href="#tr" x="311.6" y="265.1"/><use href="#tr" x="350.0" y="265.1"/><use href="#tr" x="388.4" y="265.1"/><use href="#tr" x="426.8" y="265.1"/><use href="#tr" x="465.2" y="265.1"/><use href="#tr" x="503.6" y="265.1"/><use href="#tr" x="542.0" y="265.1"/><use href="#tr" x="580.4" y="265.1"/><use href="#tr" x="618.8" y="265.1"/><use href="#tr" x="657.2" y="265.1"/><use href="#tr" x="695.6" y="265.1"/><use href="#tr" x="734.0" y="265.1"/><use href="#tr" x="772.4" y="265.1"/><use href="#tr" x="810.8" y="265.1"/><use href="#tr" x="849.2" y="265.1"/><use href="#tr" x="887.6" y="265.1"/><use href="#tr" x="1002.8" y="265.1"/><use href="#tr" x="1041.2" y="265.1"/><use href="#tr" x="1079.6" y="265.1"/><use href="#tr" x="1118.0" y="265.1"/><use href="#tr" x="1156.4" y="265.1"/><use href="#tr" x="100.4" y="284.3"/><use href="#tr" x="138.8" y="284.3"/><use href="#tr" x="177.2" y="284.3"/><use href="#tr" x="215.6" y="284.3"/><use href="#tr" x="254.0" y="284.3"/><use href="#tr" x="292.4" y="284.3"/><use href="#tr" x="330.8" y="284.3"/><use href="#tr" x="369.2" y="284.3"/><use href="#tr" x="407.6" y="284.3"/><use href="#tr" x="446.0" y="284.3"/><use href="#tr" x="484.4" y="284.3"/><use href="#tr" x="522.8" y="284.3"/><use href="#tr" x="561.2" y="284.3"/><use href="#tr" x="599.6" y="284.3"/><use href="#tr" x="638.0" y="284.3"/><use href="#tr" x="676.4" y="284.3"/><use href="#tr" x="714.8" y="284.3"/><use href="#tr" x="753.2" y="284.3"/><use href="#tr" x="791.6" y="284.3"/><use href="#tr" x="830.0" y="284.3"/><use href="#tr" x="868.4" y="284.3"/><use href="#tr" x="906.8" y="284.3"/><use href="#tr" x="1022.0" y="284.3"/><use href="#tr" x="1060.4" y="284.3"/><use href="#tr" x="1098.8" y="284.3"/><use href="#tr" x="1137.2" y="284.3"/><use href="#tr" x="1175.6" y="284.3"/><use href="#tr" x="81.2" y="303.5"/><use href="#tr" x="119.6" y="303.5"/><use href="#tr" x="158.0" y="303.5"/><use href="#tr" x="196.4" y="303.5"/><use href="#tr" x="234.8" y="303.5"/><use href="#tr" x="273.2" y="303.5"/><use href="#tr" x="311.6" y="303.5"/><use href="#tr" x="350.0" y="303.5"/><use href="#tr" x="388.4" y="303.5"/><use href="#tr" x="426.8" y="303.5"/><use href="#tr" x="465.2" y="303.5"/><use href="#tr" x="503.6" y="303.5"/><use href="#tr" x="542.0" y="303.5"/><use href="#tr" x="580.4" y="303.5"/><use href="#tr" x="1118.0" y="303.5"/><use href="#tr" x="1156.4" y="303.5"/><use href="#tr" x="100.4" y="322.7"/><use href="#tr" x="138.8" y="322.7"/><use href="#tr" x="177.2" y="322.7"/><use href="#tr" x="215.6" y="322.7"/><use href="#tr" x="561.2" y="322.7"/><use href="#tr" x="599.6" y="322.7"/><use href="#tr" x="1137.2" y="322.7"/><use href="#tr" x="1175.6" y="322.7"/><use href="#tr" x="81.2" y="341.9"/><use href="#tr" x="119.6" y="341.9"/><use href="#tr" x="158.0" y="341.9"/><use href="#tr" x="196.4" y="341.9"/><use href="#tr" x="542.0" y="341.9"/><use href="#tr" x="580.4" y="341.9"/><use href="#tr" x="1118.0" y="341.9"/><use href="#tr" x="1156.4" y="341.9"/><use href="#tr" x="100.4" y="361.1"/><use href="#tr" x="138.8" y="361.1"/><use href="#tr" x="177.2" y="361.1"/><use href="#tr" x="215.6" y="361.1"/><use href="#tr" x="81.2" y="380.3"/><use href="#tr" x="119.6" y="380.3"/><use href="#tr" x="158.0" y="380.3"/><use href="#tr" x="196.4" y="380.3"/><use href="#tr" x="100.4" y="399.5"/><use href="#tr" x="138.8" y="399.5"/><use href="#tr" x="177.2" y="399.5"/><use href="#tr" x="215.6" y="399.5"/><use href="#tr" x="81.2" y="418.7"/><use href="#tr" x="119.6" y="418.7"/><use href="#tr" x="158.0" y="418.7"/><use href="#tr" x="196.4" y="418.7"/><use href="#tr" x="542.0" y="418.7"/><use href="#tr" x="580.4" y="418.7"/><use href="#tr" x="100.4" y="437.9"/><use href="#tr" x="138.8" y="437.9"/><use href="#tr" x="177.2" y="437.9"/><use href="#tr" x="215.6" y="437.9"/><use href="#tr" x="561.2" y="437.9"/><use href="#tr" x="599.6" y="437.9"/><use href="#tr" x="1137.2" y="437.9"/><use href="#tr" x="1175.6" y="437.9"/><use href="#tr" x="81.2" y="457.1"/><use href="#tr" x="119.6" y="457.1"/><use href="#tr" x="158.0" y="457.1"/><use href="#tr" x="196.4" y="457.1"/><use href="#tr" x="234.8" y="457.1"/><use href="#tr" x="273.2" y="457.1"/><use href="#tr" x="311.6" y="457.1"/><use href="#tr" x="350.0" y="457.1"/><use href="#tr" x="388.4" y="457.1"/><use href="#tr" x="426.8" y="457.1"/><use href="#tr" x="465.2" y="457.1"/><use href="#tr" x="503.6" y="457.1"/><use href="#tr" x="542.0" y="457.1"/><use href="#tr" x="580.4" y="457.1"/><use href="#tr" x="1118.0" y="457.1"/><use href="#tr" x="1156.4" y="457.1"/><use href="#tr" x="100.4" y="476.3"/><use href="#tr" x="138.8" y="476.3"/><use href="#tr" x="177.2" y="476.3"/><use href="#tr" x="215.6" y="476.3"/><use href="#tr" x="254.0" y="476.3"/><use href="#tr" x="292.4" y="476.3"/><use href="#tr" x="330.8" y="476.3"/><use href="#tr" x="369.2" y="476.3"/><use href="#tr" x="407.6" y="476.3"/><use href="#tr" x="446.0" y="476.3"/><use href="#tr" x="484.4" y="476.3"/><use href="#tr" x="522.8" y="476.3"/><use href="#tr" x="561.2" y="476.3"/><use href="#tr" x="599.6" y="476.3"/><use href="#tr" x="638.0" y="476.3"/><use href="#tr" x="676.4" y="476.3"/><use href="#tr" x="714.8" y="476.3"/><use href="#tr" x="753.2" y="476.3"/><use href="#tr" x="791.6" y="476.3"/><use href="#tr" x="830.0" y="476.3"/><use href="#tr" x="868.4" y="476.3"/><use href="#tr" x="906.8" y="476.3"/><use href="#tr" x="1022.0" y="476.3"/><use href="#tr" x="1060.4" y="476.3"/><use href="#tr" x="1098.8" y="476.3"/><use href="#tr" x="1137.2" y="476.3"/><use href="#tr" x="1175.6" y="476.3"/><use href="#tr" x="81.2" y="495.5"/><use href="#tr" x="119.6" y="495.5"/><use href="#tr" x="158.0" y="495.5"/><use href="#tr" x="196.4" y="495.5"/><use href="#tr" x="234.8" y="495.5"/><use href="#tr" x="273.2" y="495.5"/><use href="#tr" x="311.6" y="495.5"/><use href="#tr" x="350.0" y="495.5"/><use href="#tr" x="388.4" y="495.5"/><use href="#tr" x="426.8" y="495.5"/><use href="#tr" x="465.2" y="495.5"/><use href="#tr" x="503.6" y="495.5"/><use href="#tr" x="542.0" y="495.5"/><use href="#tr" x="580.4" y="495.5"/><use href="#tr" x="618.8" y="495.5"/><use href="#tr" x="657.2" y="495.5"/><use href="#tr" x="695.6" y="495.5"/><use href="#tr" x="734.0" y="495.5"/><use href="#tr" x="772.4" y="495.5"/><use href="#tr" x="810.8" y="495.5"/><use href="#tr" x="849.2" y="495.5"/><use href="#tr" x="887.6" y="495.5"/><use href="#tr" x="926.0" y="495.5"/><use href="#tr" x="1002.8" y="495.5"/><use href="#tr" x="1041.2" y="495.5"/><use href="#tr" x="1079.6" y="495.5"/><use href="#tr" x="1118.0" y="495.5"/><use href="#tr" x="1156.4" y="495.5"/><use href="#tr" x="100.4" y="514.7"/><use href="#tr" x="138.8" y="514.7"/><use href="#tr" x="177.2" y="514.7"/><use href="#tr" x="215.6" y="514.7"/><use href="#tr" x="254.0" y="514.7"/><use href="#tr" x="292.4" y="514.7"/><use href="#tr" x="330.8" y="514.7"/><use href="#tr" x="369.2" y="514.7"/><use href="#tr" x="407.6" y="514.7"/><use href="#tr" x="446.0" y="514.7"/><use href="#tr" x="484.4" y="514.7"/><use href="#tr" x="522.8" y="514.7"/><use href="#tr" x="561.2" y="514.7"/><use href="#tr" x="599.6" y="514.7"/><use href="#tr" x="638.0" y="514.7"/><use href="#tr" x="676.4" y="514.7"/><use href="#tr" x="714.8" y="514.7"/><use href="#tr" x="753.2" y="514.7"/><use href="#tr" x="791.6" y="514.7"/><use href="#tr" x="830.0" y="514.7"/><use href="#tr" x="868.4" y="514.7"/><use href="#tr" x="906.8" y="514.7"/><use href="#tr" x="1022.0" y="514.7"/><use href="#tr" x="1060.4" y="514.7"/><use href="#tr" x="1098.8" y="514.7"/><use href="#tr" x="1137.2" y="514.7"/><use href="#tr" x="1175.6" y="514.7"/><use href="#tb" x="100.4" y="-22.9"/><use href="#tb" x="138.8" y="-22.9"/><use href="#tb" x="177.2" y="-22.9"/><use href="#tb" x="215.6" y="-22.9"/><use href="#tb" x="254.0" y="-22.9"/><use href="#tb" x="292.4" y="-22.9"/><use href="#tb" x="330.8" y="-22.9"/><use href="#tb" x="369.2" y="-22.9"/><use href="#tb" x="407.6" y="-22.9"/><use href="#tb" x="446.0" y="-22.9"/><use href="#tb" x="484.4" y="-22.9"/><use href="#tb" x="714.8" y="-22.9"/><use href="#tb" x="791.6" y="-22.9"/><use href="#tb" x="830.0" y="-22.9"/><use href="#tb" x="868.4" y="-22.9"/><use href="#tb" x="906.8" y="-22.9"/><use href="#tb" x="1022.0" y="-22.9"/><use href="#tb" x="1060.4" y="-22.9"/><use href="#tb" x="1098.8" y="-22.9"/><use href="#tb" x="1137.2" y="-22.9"/><use href="#tb" x="81.2" y="-3.7"/><use href="#tb" x="119.6" y="-3.7"/><use href="#tb" x="158.0" y="-3.7"/><use href="#tb" x="196.4" y="-3.7"/><use href="#tb" x="234.8" y="-3.7"/><use href="#tb" x="273.2" y="-3.7"/><use href="#tb" x="311.6" y="-3.7"/><use href="#tb" x="350.0" y="-3.7"/><use href="#tb" x="388.4" y="-3.7"/><use href="#tb" x="426.8" y="-3.7"/><use href="#tb" x="465.2" y="-3.7"/><use href="#tb" x="695.6" y="-3.7"/><use href="#tb" x="734.0" y="-3.7"/><use href="#tb" x="1156.4" y="-3.7"/><use href="#tb" x="100.4" y="15.5"/><use href="#tb" x="138.8" y="15.5"/><use href="#tb" x="177.2" y="15.5"/><use href="#tb" x="215.6" y="15.5"/><use href="#tb" x="254.0" y="15.5"/><use href="#tb" x="292.4" y="15.5"/><use href="#tb" x="330.8" y="15.5"/><use href="#tb" x="369.2" y="15.5"/><use href="#tb" x="407.6" y="15.5"/><use href="#tb" x="446.0" y="15.5"/><use href="#tb" x="484.4" y="15.5"/><use href="#tb" x="714.8" y="15.5"/><use href="#tb" x="1137.2" y="15.5"/><use href="#tb" x="1175.6" y="15.5"/><use href="#tb" x="81.2" y="34.7"/><use href="#tb" x="119.6" y="34.7"/><use href="#tb" x="158.0" y="34.7"/><use href="#tb" x="196.4" y="34.7"/><use href="#tb" x="234.8" y="34.7"/><use href="#tb" x="273.2" y="34.7"/><use href="#tb" x="311.6" y="34.7"/><use href="#tb" x="350.0" y="34.7"/><use href="#tb" x="388.4" y="34.7"/><use href="#tb" x="426.8" y="34.7"/><use href="#tb" x="465.2" y="34.7"/><use href="#tb" x="695.6" y="34.7"/><use href="#tb" x="734.0" y="34.7"/><use href="#tb" x="1156.4" y="34.7"/><use href="#tb" x="100.4" y="53.9"/><use href="#tb" x="138.8" y="53.9"/><use href="#tb" x="177.2" y="53.9"/><use href="#tb" x="215.6" y="53.9"/><use href="#tb" x="254.0" y="53.9"/><use href="#tb" x="292.4" y="53.9"/><use href="#tb" x="330.8" y="53.9"/><use href="#tb" x="369.2" y="53.9"/><use href="#tb" x="407.6" y="53.9"/><use href="#tb" x="446.0" y="53.9"/><use href="#tb" x="484.4" y="53.9"/><use href="#tb" x="714.8" y="53.9"/><use href="#tb" x="1137.2" y="53.9"/><use href="#tb" x="1175.6" y="53.9"/><use href="#tb" x="81.2" y="73.1"/><use href="#tb" x="119.6" y="73.1"/><use href="#tb" x="158.0" y="73.1"/><use href="#tb" x="196.4" y="73.1"/><use href="#tb" x="234.8" y="73.1"/><use href="#tb" x="273.2" y="73.1"/><use href="#tb" x="311.6" y="73.1"/><use href="#tb" x="350.0" y="73.1"/><use href="#tb" x="388.4" y="73.1"/><use href="#tb" x="426.8" y="73.1"/><use href="#tb" x="465.2" y="73.1"/><use href="#tb" x="695.6" y="73.1"/><use href="#tb" x="734.0" y="73.1"/><use href="#tb" x="1156.4" y="73.1"/><use href="#tb" x="100.4" y="92.3"/><use href="#tb" x="138.8" y="92.3"/><use href="#tb" x="177.2" y="92.3"/><use href="#tb" x="215.6" y="92.3"/><use href="#tb" x="254.0" y="92.3"/><use href="#tb" x="292.4" y="92.3"/><use href="#tb" x="330.8" y="92.3"/><use href="#tb" x="369.2" y="92.3"/><use href="#tb" x="407.6" y="92.3"/><use href="#tb" x="446.0" y="92.3"/><use href="#tb" x="484.4" y="92.3"/><use href="#tb" x="714.8" y="92.3"/><use href="#tb" x="1137.2" y="92.3"/><use href="#tb" x="1175.6" y="92.3"/><use href="#tb" x="81.2" y="111.5"/><use href="#tb" x="119.6" y="111.5"/><use href="#tb" x="158.0" y="111.5"/><use href="#tb" x="196.4" y="111.5"/><use href="#tb" x="234.8" y="111.5"/><use href="#tb" x="273.2" y="111.5"/><use href="#tb" x="311.6" y="111.5"/><use href="#tb" x="350.0" y="111.5"/><use href="#tb" x="388.4" y="111.5"/><use href="#tb" x="426.8" y="111.5"/><use href="#tb" x="465.2" y="111.5"/><use href="#tb" x="695.6" y="111.5"/><use href="#tb" x="734.0" y="111.5"/><use href="#tb" x="100.4" y="130.7"/><use href="#tb" x="138.8" y="130.7"/><use href="#tb" x="177.2" y="130.7"/><use href="#tb" x="215.6" y="130.7"/><use href="#tb" x="254.0" y="130.7"/><use href="#tb" x="292.4" y="130.7"/><use href="#tb" x="330.8" y="130.7"/><use href="#tb" x="369.2" y="130.7"/><use href="#tb" x="407.6" y="130.7"/><use href="#tb" x="446.0" y="130.7"/><use href="#tb" x="484.4" y="130.7"/><use href="#tb" x="714.8" y="130.7"/><use href="#tb" x="81.2" y="149.9"/><use href="#tb" x="119.6" y="149.9"/><use href="#tb" x="158.0" y="149.9"/><use href="#tb" x="196.4" y="149.9"/><use href="#tb" x="234.8" y="149.9"/><use href="#tb" x="273.2" y="149.9"/><use href="#tb" x="311.6" y="149.9"/><use href="#tb" x="350.0" y="149.9"/><use href="#tb" x="388.4" y="149.9"/><use href="#tb" x="426.8" y="149.9"/><use href="#tb" x="465.2" y="149.9"/><use href="#tb" x="100.4" y="169.1"/><use href="#tb" x="138.8" y="169.1"/><use href="#tb" x="177.2" y="169.1"/><use href="#tb" x="215.6" y="169.1"/><use href="#tb" x="254.0" y="169.1"/><use href="#tb" x="292.4" y="169.1"/><use href="#tb" x="330.8" y="169.1"/><use href="#tb" x="369.2" y="169.1"/><use href="#tb" x="407.6" y="169.1"/><use href="#tb" x="446.0" y="169.1"/><use href="#tb" x="484.4" y="169.1"/><use href="#tb" x="81.2" y="188.3"/><use href="#tb" x="119.6" y="188.3"/><use href="#tb" x="158.0" y="188.3"/><use href="#tb" x="196.4" y="188.3"/><use href="#tb" x="234.8" y="188.3"/><use href="#tb" x="273.2" y="188.3"/><use href="#tb" x="311.6" y="188.3"/><use href="#tb" x="350.0" y="188.3"/><use href="#tb" x="388.4" y="188.3"/><use href="#tb" x="426.8" y="188.3"/><use href="#tb" x="465.2" y="188.3"/><use href="#tb" x="1156.4" y="188.3"/><use href="#tb" x="100.4" y="207.5"/><use href="#tb" x="138.8" y="207.5"/><use href="#tb" x="177.2" y="207.5"/><use href="#tb" x="215.6" y="207.5"/><use href="#tb" x="254.0" y="207.5"/><use href="#tb" x="292.4" y="207.5"/><use href="#tb" x="330.8" y="207.5"/><use href="#tb" x="369.2" y="207.5"/><use href="#tb" x="407.6" y="207.5"/><use href="#tb" x="446.0" y="207.5"/><use href="#tb" x="484.4" y="207.5"/><use href="#tb" x="714.8" y="207.5"/><use href="#tb" x="1137.2" y="207.5"/><use href="#tb" x="1175.6" y="207.5"/><use href="#tb" x="81.2" y="226.7"/><use href="#tb" x="119.6" y="226.7"/><use href="#tb" x="158.0" y="226.7"/><use href="#tb" x="196.4" y="226.7"/><use href="#tb" x="234.8" y="226.7"/><use href="#tb" x="273.2" y="226.7"/><use href="#tb" x="311.6" y="226.7"/><use href="#tb" x="350.0" y="226.7"/><use href="#tb" x="388.4" y="226.7"/><use href="#tb" x="426.8" y="226.7"/><use href="#tb" x="465.2" y="226.7"/><use href="#tb" x="695.6" y="226.7"/><use href="#tb" x="734.0" y="226.7"/><use href="#tb" x="1156.4" y="226.7"/><use href="#tb" x="100.4" y="245.9"/><use href="#tb" x="138.8" y="245.9"/><use href="#tb" x="177.2" y="245.9"/><use href="#tb" x="215.6" y="245.9"/><use href="#tb" x="254.0" y="245.9"/><use href="#tb" x="292.4" y="245.9"/><use href="#tb" x="330.8" y="245.9"/><use href="#tb" x="369.2" y="245.9"/><use href="#tb" x="407.6" y="245.9"/><use href="#tb" x="446.0" y="245.9"/><use href="#tb" x="484.4" y="245.9"/><use href="#tb" x="522.8" y="245.9"/><use href="#tb" x="561.2" y="245.9"/><use href="#tb" x="599.6" y="245.9"/><use href="#tb" x="638.0" y="245.9"/><use href="#tb" x="676.4" y="245.9"/><use href="#tb" x="714.8" y="245.9"/><use href="#tb" x="753.2" y="245.9"/><use href="#tb" x="791.6" y="245.9"/><use href="#tb" x="830.0" y="245.9"/><use href="#tb" x="868.4" y="245.9"/><use href="#tb" x="906.8" y="245.9"/><use href="#tb" x="1022.0" y="245.9"/><use href="#tb" x="1060.4" y="245.9"/><use href="#tb" x="1098.8" y="245.9"/><use href="#tb" x="1137.2" y="245.9"/><use href="#tb" x="1175.6" y="245.9"/><use href="#tb" x="81.2" y="265.1"/><use href="#tb" x="119.6" y="265.1"/><use href="#tb" x="158.0" y="265.1"/><use href="#tb" x="196.4" y="265.1"/><use href="#tb" x="234.8" y="265.1"/><use href="#tb" x="273.2" y="265.1"/><use href="#tb" x="311.6" y="265.1"/><use href="#tb" x="350.0" y="265.1"/><use href="#tb" x="388.4" y="265.1"/><use href="#tb" x="426.8" y="265.1"/><use href="#tb" x="465.2" y="265.1"/><use href="#tb" x="503.6" y="265.1"/><use href="#tb" x="542.0" y="265.1"/><use href="#tb" x="580.4" y="265.1"/><use href="#tb" x="618.8" y="265.1"/><use href="#tb" x="657.2" y="265.1"/><use href="#tb" x="695.6" y="265.1"/><use href="#tb" x="734.0" y="265.1"/><use href="#tb" x="772.4" y="265.1"/><use href="#tb" x="810.8" y="265.1"/><use href="#tb" x="849.2" y="265.1"/><use href="#tb" x="887.6" y="265.1"/><use href="#tb" x="1002.8" y="265.1"/><use href="#tb" x="1041.2" y="265.1"/><use href="#tb" x="1079.6" y="265.1"/><use href="#tb" x="1118.0" y="265.1"/><use href="#tb" x="1156.4" y="265.1"/><use href="#tb" x="100.4" y="284.3"/><use href="#tb" x="138.8" y="284.3"/><use href="#tb" x="177.2" y="284.3"/><use href="#tb" x="215.6" y="284.3"/><use href="#tb" x="254.0" y="284.3"/><use href="#tb" x="292.4" y="284.3"/><use href="#tb" x="330.8" y="284.3"/><use href="#tb" x="369.2" y="284.3"/><use href="#tb" x="407.6" y="284.3"/><use href="#tb" x="446.0" y="284.3"/><use href="#tb" x="484.4" y="284.3"/><use href="#tb" x="522.8" y="284.3"/><use href="#tb" x="561.2" y="284.3"/><use href="#tb" x="599.6" y="284.3"/><use href="#tb" x="638.0" y="284.3"/><use href="#tb" x="676.4" y="284.3"/><use href="#tb" x="714.8" y="284.3"/><use href="#tb" x="753.2" y="284.3"/><use href="#tb" x="791.6" y="284.3"/><use href="#tb" x="830.0" y="284.3"/><use href="#tb" x="868.4" y="284.3"/><use href="#tb" x="906.8" y="284.3"/><use href="#tb" x="1022.0" y="284.3"/><use href="#tb" x="1060.4" y="284.3"/><use href="#tb" x="1098.8" y="284.3"/><use href="#tb" x="1137.2" y="284.3"/><use href="#tb" x="1175.6" y="284.3"/><use href="#tb" x="81.2" y="303.5"/><use href="#tb" x="119.6" y="303.5"/><use href="#tb" x="158.0" y="303.5"/><use href="#tb" x="196.4" y="303.5"/><use href="#tb" x="234.8" y="303.5"/><use href="#tb" x="273.2" y="303.5"/><use href="#tb" x="311.6" y="303.5"/><use href="#tb" x="350.0" y="303.5"/><use href="#tb" x="388.4" y="303.5"/><use href="#tb" x="426.8" y="303.5"/><use href="#tb" x="465.2" y="303.5"/><use href="#tb" x="503.6" y="303.5"/><use href="#tb" x="542.0" y="303.5"/><use href="#tb" x="580.4" y="303.5"/><use href="#tb" x="1118.0" y="303.5"/><use href="#tb" x="1156.4" y="303.5"/><use href="#tb" x="100.4" y="322.7"/><use href="#tb" x="138.8" y="322.7"/><use href="#tb" x="177.2" y="322.7"/><use href="#tb" x="215.6" y="322.7"/><use href="#tb" x="561.2" y="322.7"/><use href="#tb" x="599.6" y="322.7"/><use href="#tb" x="1137.2" y="322.7"/><use href="#tb" x="1175.6" y="322.7"/><use href="#tb" x="81.2" y="341.9"/><use href="#tb" x="119.6" y="341.9"/><use href="#tb" x="158.0" y="341.9"/><use href="#tb" x="196.4" y="341.9"/><use href="#tb" x="542.0" y="341.9"/><use href="#tb" x="580.4" y="341.9"/><use href="#tb" x="1118.0" y="341.9"/><use href="#tb" x="1156.4" y="341.9"/><use href="#tb" x="100.4" y="361.1"/><use href="#tb" x="138.8" y="361.1"/><use href="#tb" x="177.2" y="361.1"/><use href="#tb" x="215.6" y="361.1"/><use href="#tb" x="81.2" y="380.3"/><use href="#tb" x="119.6" y="380.3"/><use href="#tb" x="158.0" y="380.3"/><use href="#tb" x="196.4" y="380.3"/><use href="#tb" x="100.4" y="399.5"/><use href="#tb" x="138.8" y="399.5"/><use href="#tb" x="177.2" y="399.5"/><use href="#tb" x="215.6" y="399.5"/><use href="#tb" x="81.2" y="418.7"/><use href="#tb" x="119.6" y="418.7"/><use href="#tb" x="158.0" y="418.7"/><use href="#tb" x="196.4" y="418.7"/><use href="#tb" x="542.0" y="418.7"/><use href="#tb" x="580.4" y="418.7"/><use href="#tb" x="100.4" y="437.9"/><use href="#tb" x="138.8" y="437.9"/><use href="#tb" x="177.2" y="437.9"/><use href="#tb" x="215.6" y="437.9"/><use href="#tb" x="561.2" y="437.9"/><use href="#tb" x="599.6" y="437.9"/><use href="#tb" x="1137.2" y="437.9"/><use href="#tb" x="1175.6" y="437.9"/><use href="#tb" x="81.2" y="457.1"/><use href="#tb" x="119.6" y="457.1"/><use href="#tb" x="158.0" y="457.1"/><use href="#tb" x="196.4" y="457.1"/><use href="#tb" x="234.8" y="457.1"/><use href="#tb" x="273.2" y="457.1"/><use href="#tb" x="311.6" y="457.1"/><use href="#tb" x="350.0" y="457.1"/><use href="#tb" x="388.4" y="457.1"/><use href="#tb" x="426.8" y="457.1"/><use href="#tb" x="465.2" y="457.1"/><use href="#tb" x="503.6" y="457.1"/><use href="#tb" x="542.0" y="457.1"/><use href="#tb" x="580.4" y="457.1"/><use href="#tb" x="1118.0" y="457.1"/><use href="#tb" x="1156.4" y="457.1"/><use href="#tb" x="100.4" y="476.3"/><use href="#tb" x="138.8" y="476.3"/><use href="#tb" x="177.2" y="476.3"/><use href="#tb" x="215.6" y="476.3"/><use href="#tb" x="254.0" y="476.3"/><use href="#tb" x="292.4" y="476.3"/><use href="#tb" x="330.8" y="476.3"/><use href="#tb" x="369.2" y="476.3"/><use href="#tb" x="407.6" y="476.3"/><use href="#tb" x="446.0" y="476.3"/><use href="#tb" x="484.4" y="476.3"/><use href="#tb" x="522.8" y="476.3"/><use href="#tb" x="561.2" y="476.3"/><use href="#tb" x="599.6" y="476.3"/><use href="#tb" x="638.0" y="476.3"/><use href="#tb" x="676.4" y="476.3"/><use href="#tb" x="714.8" y="476.3"/><use href="#tb" x="753.2" y="476.3"/><use href="#tb" x="791.6" y="476.3"/><use href="#tb" x="830.0" y="476.3"/><use href="#tb" x="868.4" y="476.3"/><use href="#tb" x="906.8" y="476.3"/><use href="#tb" x="1022.0" y="476.3"/><use href="#tb" x="1060.4" y="476.3"/><use href="#tb" x="1098.8" y="476.3"/><use href="#tb" x="1137.2" y="476.3"/><use href="#tb" x="1175.6" y="476.3"/><use href="#tb" x="81.2" y="495.5"/><use href="#tb" x="119.6" y="495.5"/><use href="#tb" x="158.0" y="495.5"/><use href="#tb" x="196.4" y="495.5"/><use href="#tb" x="234.8" y="495.5"/><use href="#tb" x="273.2" y="495.5"/><use href="#tb" x="311.6" y="495.5"/><use href="#tb" x="350.0" y="495.5"/><use href="#tb" x="388.4" y="495.5"/><use href="#tb" x="426.8" y="495.5"/><use href="#tb" x="465.2" y="495.5"/><use href="#tb" x="503.6" y="495.5"/><use href="#tb" x="542.0" y="495.5"/><use href="#tb" x="580.4" y="495.5"/><use href="#tb" x="618.8" y="495.5"/><use href="#tb" x="657.2" y="495.5"/><use href="#tb" x="695.6" y="495.5"/><use href="#tb" x="734.0" y="495.5"/><use href="#tb" x="772.4" y="495.5"/><use href="#tb" x="810.8" y="495.5"/><use href="#tb" x="849.2" y="495.5"/><use href="#tb" x="887.6" y="495.5"/><use href="#tb" x="926.0" y="495.5"/><use href="#tb" x="1002.8" y="495.5"/><use href="#tb" x="1041.2" y="495.5"/><use href="#tb" x="1079.6" y="495.5"/><use href="#tb" x="1118.0" y="495.5"/><use href="#tb" x="1156.4" y="495.5"/><use href="#tb" x="100.4" y="514.7"/><use href="#tb" x="138.8" y="514.7"/><use href="#tb" x="177.2" y="514.7"/><use href="#tb" x="215.6" y="514.7"/><use href="#tb" x="254.0" y="514.7"/><use href="#tb" x="292.4" y="514.7"/><use href="#tb" x="330.8" y="514.7"/><use href="#tb" x="369.2" y="514.7"/><use href="#tb" x="407.6" y="514.7"/><use href="#tb" x="446.0" y="514.7"/><use href="#tb" x="484.4" y="514.7"/><use href="#tb" x="522.8" y="514.7"/><use href="#tb" x="561.2" y="514.7"/><use href="#tb" x="599.6" y="514.7"/><use href="#tb" x="638.0" y="514.7"/><use href="#tb" x="676.4" y="514.7"/><use href="#tb" x="714.8" y="514.7"/><use href="#tb" x="753.2" y="514.7"/><use href="#tb" x="791.6" y="514.7"/><use href="#tb" x="830.0" y="514.7"/><use href="#tb" x="868.4" y="514.7"/><use href="#tb" x="906.8" y="514.7"/><use href="#tb" x="1022.0" y="514.7"/><use href="#tb" x="1060.4" y="514.7"/><use href="#tb" x="1098.8" y="514.7"/><use href="#tb" x="1137.2" y="514.7"/><use href="#tb" x="1175.6" y="514.7"/>
<use href="#tf" x="526.5" y="10.5"/>
<use href="#tf" x="642.4" y="49.1"/>
<use href="#tf" x="565.0" y="68.7"/>
<use href="#tf" x="526.5" y="126.2"/>
<use href="#tf" x="605.0" y="-4.5"/>
<use href="#tf" x="642.0" y="183.8"/>
<use href="#tf" x="815.0" y="125.7"/>
<use href="#tf" x="815.0" y="203.1"/>
<use href="#tf" x="910.7" y="48.5"/>
<use href="#tf" x="892.3" y="86.8"/>
<use href="#tf" x="1027.0" y="125.7"/>
<use href="#tf" x="1103.6" y="164.2"/>
<use href="#tf" x="544.7" y="184.5"/>
<use href="#tf" x="583.8" y="221.5"/>
<use href="#tf" x="641.5" y="337.5"/>
<use href="#tf" x="718.7" y="356.8"/>
<use href="#tf" x="796.0" y="337.5"/>
<use href="#tf" x="891.0" y="337.5"/>
<use href="#tf" x="987.4" y="356.8"/>
<use href="#tf" x="680.0" y="414.7"/>
<use href="#tf" x="757.3" y="433.1"/>
<use href="#tf" x="834.0" y="452.5"/>
<use href="#tf" x="891.0" y="414.7"/>
<use href="#tf" x="1026.0" y="433.1"/>
<use href="#tf" x="332.8" y="338.5"/>
<use href="#tf" x="256.0" y="356.5"/>
<use href="#tf" x="429.8" y="356.5"/>
<use href="#tf" x="276.4" y="414.0"/>
<use href="#tf" x="449.0" y="414.0"/>
<defs><g id="fl"><path d="M2.6 4.2h1.8v1.8H2.6zM8.6 2.4h2v3.2h-2zM5.2 7h1.6v2.4H5.2zM10.6 8.6h2.2v1.6h-2.2zM3.4 11.4h2.2v1.8H3.4zM13.8 4h1.6v1.8h-1.6zM14.6 11.4h1.6v1.6h-1.6z" fill="#f4f6e4"/><path d="M1 8l1.4-1.6M7.4 5.2l1-1.8M12.6 6.8l1.2-1.6M7 13l1.6-1.4M16.4 8.6l1.2-1.4M11.4 13.6l1.2-1.2" stroke="#a8bf4c" stroke-width="1"/></g></defs>
<use href="#fl" x="292.4" y="355.6"/>
<use href="#fl" x="292.4" y="432.4"/>
<use href="#fl" x="311.6" y="355.6"/>
<use href="#fl" x="311.6" y="432.4"/>
<use href="#fl" x="330.8" y="355.6"/>
<use href="#fl" x="330.8" y="432.4"/>
<use href="#fl" x="350.0" y="355.6"/>
<use href="#fl" x="350.0" y="432.4"/>
<use href="#fl" x="369.2" y="355.6"/>
<use href="#fl" x="369.2" y="432.4"/>
<use href="#fl" x="388.4" y="355.6"/>
<use href="#fl" x="388.4" y="432.4"/>
<use href="#fl" x="407.6" y="355.6"/>
<use href="#fl" x="407.6" y="432.4"/>
<use href="#fl" x="273.2" y="374.8"/>
<use href="#fl" x="292.4" y="374.8"/>
<use href="#fl" x="407.6" y="374.8"/>
<use href="#fl" x="426.8" y="374.8"/>
<use href="#fl" x="273.2" y="394.0"/>
<use href="#fl" x="292.4" y="394.0"/>
<use href="#fl" x="407.6" y="394.0"/>
<use href="#fl" x="426.8" y="394.0"/>
<use href="#fl" x="292.4" y="413.2"/>
<use href="#fl" x="407.6" y="413.2"/>
<use href="#fl" x="426.8" y="413.2"/>
<defs><g id="bu"><path d="M.6 18V14.500L4 11.400L5.600 8.200L10.600 5.400L12 2.600L15 .6H24L27.600 2.600L29.400 5.800L33 8L34.400 11.400L36 13.600V18.600L34.400 21V24.400L31 27.400L26 29.400H11L6 27.400L2.400 24.400L.6 21.600Z" fill="#1e4b3b"/><path d="M2.600 17V15L5.600 12.400L7 9.400L11.600 7L13 4L15.600 2.400H23.600L26.400 4L28 7L31.600 9.400L32.600 12.400L34 14.400V18L32 20.400L30 22.400L27 21.400L24 24L19 22.400L14 24.400L10 22L6 22.400L3.600 20Z" fill="#2c7a40"/><path d="M12.600 10.400L16 12.400L20 14.400L24 13.400L22 15.600L17.600 15.400L13 12.600ZM6 15.400L9 17L11.600 16.400L9.600 18.400L6.400 17.400ZM26 11L29 13L30.400 16.400L28 14.400ZM15 19L18 20.400L21.600 19.400L19 21.600Z" fill="#1f5a3a"/><path d="M15 4.400H22L24 6.400L20 5.600H16ZM8 11.400L11 9.400L10 12Z" fill="#34904a" opacity=".7"/></g></defs>
<use href="#bu" x="1025.8" y="52.7"/>
<use href="#bu" x="1025.8" y="187.5"/>
<use href="#bu" x="564.8" y="129.8"/>
<defs><path id="bs" d="M0 0L19.2 8.4V18.4L0 10Z" fill="#e9763a" stroke="#b8642c" stroke-width="1"/></defs>
<use href="#bs" x="705.6" y="156.7"/>
<use href="#bs" x="705.6" y="175.9"/>
<use href="#bs" x="705.6" y="195.1"/>
<use href="#bs" x="1142.6" y="126.0"/>
<use href="#bs" x="1142.6" y="145.2"/>
<use href="#bs" x="1142.6" y="164.4"/>
<use href="#bs" x="957.0" y="367.8"/>
<use href="#bs" x="957.0" y="387.0"/>
<use href="#bs" x="957.0" y="406.2"/>
<use href="#tr" x="714.8" y="207.5"/>
<use href="#tr" x="1156.4" y="188.3"/>
<path d="M953 424c4-4 8-3.6 12-2.4c5-1.6 10-1 16 2.6v2.6h-28z" fill="#6a6458"/><path d="M953 426.6h28" stroke="#2a2a2a" stroke-width="1.6"/>
<defs><g id="rb"><rect x="-3.4" y="-10.6" width="19" height="4.6" rx="2.2" fill="#7a4420"/><rect x="-2.6" y="-9.8" width="17.4" height="3" rx="1.5" fill="#dd7a4c"/><path d="M2.6 -2V0" stroke="#24405c" stroke-width="1.2"/><rect x="0" y="0" width="12.6" height="9.6" fill="#24466a"/><rect x="1.2" y="1.6" width="9" height="6.6" fill="#23d0f2"/><rect x="2" y="9.6" width="8.6" height="7" fill="#55647c"/><rect x="-1" y="11" width="3.4" height="3" fill="#55647c"/><rect x="1.6" y="16" width="3" height="2.6" fill="#3c4a64"/><rect x="7.4" y="16" width="3" height="2.6" fill="#3c4a64"/><rect x="5" y="12" width="1.4" height="1.6" fill="#9ad85a"/></g></defs>
<use href="#rb" x="852.0" y="58.2"/>
<use href="#rb" x="850.3" y="110.0"/>
<use href="#rb" x="619.0" y="83.2"/>
<use href="#rb" x="825.6" y="384.0"/>
<path d="M553 0h10v6h2v4h-3v-3h-6v3h-4v-4h1z" fill="#55647c"/><path d="M551.6 2h2v3h-2z" fill="#3c4a64"/>
<defs><g id="sg"><rect x="2.6" y="-10" width="7.4" height="7.4" rx="1.8" fill="#fff"/><rect x="5.6" y="-8" width="1.6" height="3.2" fill="#555"/><rect x="0" y="0" width="12.8" height="8.4" fill="#c47a3c"/><path d="M2 2.6h8.8M2 5.4h8.8" stroke="#93552a" stroke-width="1.1"/><rect x="5.4" y="8.4" width="2.2" height="4.4" fill="#a5642f"/><ellipse cx="6.4" cy="13.4" rx="3.6" ry="1.2" fill="#6b7d33"/></g></defs>
<use href="#sg" x="479.3" y="381.4"/>
<use href="#sg" x="1044.0" y="355.6"/>
<path d="M615.6 280.6h3.6l6.6-4v15l-6.6-4h-3.6z" fill="#fff"/>
<path d="M350.3 0V517" stroke="#9fc0c8" stroke-width="1" opacity=".55"/><path d="M0 394.29999999999995H1166" stroke="#b8c4a0" stroke-width="1" opacity=".5"/>
<rect x="204" y="312.6" width="294.4" height="164" fill="none" stroke="#f4f4f4" stroke-width="1.6"/>
<rect x="206.6" y="315.6" width="67.4" height="8" rx="3.6" fill="#141414"/><rect x="208.4" y="317.2" width="63.6" height="4.6" rx="2.2" fill="#e9605c"/>
<rect x="206.6" y="324.8" width="67.4" height="8" rx="3.6" fill="#141414"/><rect x="208.4" y="326.4" width="63.6" height="4.6" rx="2.2" fill="#5b9aea"/>
<rect x="269" y="310.4" width="18" height="27" fill="none" stroke="#3fb4d4" stroke-width="1" opacity=".8"/><rect x="275.4" y="313" width="5.2" height="21" fill="#3aa2e4"/>
<text x="281" y="322.0" font-family="Liberation Mono" font-weight="bold" font-size="7.6" fill="#fff" textLength="26" lengthAdjust="spacingAndGlyphs">00 / 100</text>
<text x="281" y="331.6" font-family="Liberation Mono" font-weight="bold" font-size="7.6" fill="#fff" textLength="26" lengthAdjust="spacingAndGlyphs">00 / 100</text>
<rect x="215" y="445.9" width="21.6" height="21.6" fill="#2c4a2a"/><rect x="216.4" y="447.29999999999995" width="18.8" height="18.8" fill="#16301f" stroke="#3a5a30" stroke-width=".8"/>
<rect x="440.9" y="445.9" width="21.6" height="21.6" fill="#2c4a2a"/><rect x="442.29999999999995" y="447.29999999999995" width="18.8" height="18.8" fill="#16301f" stroke="#3a5a30" stroke-width=".8"/>
<rect x="465" y="445.9" width="21.6" height="21.6" fill="#2c4a2a"/><rect x="466.4" y="447.29999999999995" width="18.8" height="18.8" fill="#16301f" stroke="#3a5a30" stroke-width=".8"/>
<path d="M224.6 451h2.6v3.4l2.6 3.6q.6 4-3.8 4.2q-4.6-.2-4-4.2l2.6-3.6z" fill="#7a3ac8"/><rect x="224.4" y="449.6" width="3" height="2" fill="#d8d0e8"/>
<path d="M447 460q-.6-4 3.4-6.4q2.6-1.6 3.6-4q2.6 4 1.6 8q-.6 4.4-4.6 4.6q-3.4 0-4-2.200z" fill="#e8683a"/><path d="M449.4 460q.4-2.600 2.800-3.600q1.800 2 .800 4.400q-2.400 1.200-3.600-.800z" fill="#f8c890"/>
<path d="M479.600 450.4q4.400 4.800 1.200 9.600q-2.800 3.600-8.400 3.200q6-.8 7.600-5.200q1.400-3.800-.4-7.600z" fill="#4cc84c"/>
<rect x="216" y="436" width="8.2" height="7.6" rx="2" fill="#fff"/><rect x="218" y="440.6" width="4.2" height="1.3" fill="#666"/>
<rect x="454.8" y="435.4" width="6.8" height="8.4" rx="2" fill="none" stroke="#fff" stroke-width="1.3"/><rect x="455.8" y="436" width="2.6" height="3.2" fill="#fff"/>
<rect x="478.8" y="435.4" width="6.8" height="8.4" rx="2" fill="none" stroke="#fff" stroke-width="1.3"/><rect x="479.8" y="436" width="2.6" height="3.2" fill="#fff"/>
<circle cx="349.6" cy="385.90000000000003" r="20.6" fill="none" stroke="#a8b860" stroke-width="1" opacity=".8"/>
<circle cx="350.8" cy="394.70000000000005" r="19" fill="none" stroke="#b4d0d4" stroke-width="1.2"/>
<path d="M331.8 394.70000000000005H346.8M350.8 400.70000000000005V413.70000000000005" stroke="#d8e4e4" stroke-width="1.4"/>
<path d="M342.6 379.4l5-2 9 1 4 3-3 1-12 0z" fill="#22262c"/><rect x="345.6" y="380.0" width="11.4" height="9.4" rx="2" fill="#a6e4a4"/><rect x="348.20000000000005" y="382.0" width="6" height="6" fill="#e4c8a0"/><rect x="349.20000000000005" y="383.4" width="1.2" height="2" fill="#333"/><rect x="352.20000000000005" y="383.4" width="1.2" height="2" fill="#333"/><path d="M346.0 388.4h10l2 6-4 4h-7l-3-5z" fill="#7a7e86"/><path d="M345.0 400.0l2-6 5-3 5-3 3-3 1 4 4 2.400-2 2.600 2.400 2.400-3 2 .6 2.400z" fill="#c81a1a"/><path d="M348.6 393.0q2-2 4.400-1.400l-3 3.400-1.400 3.600z" fill="#e8e8e8"/>
<rect x="339.4" y="375.4" width="20.6" height="19.6" fill="none" stroke="#b0b48c" stroke-width="1" opacity=".9"/>
<rect x="347.5" y="371.4" width="6.6" height="6.6" rx="1.4" fill="#2f6ee8"/>
<rect x="328.5" y="391.4" width="6.6" height="6.6" rx="1.4" fill="#2f6ee8"/>
<rect x="366.5" y="391.4" width="6.6" height="6.6" rx="1.4" fill="#2f6ee8"/>
<rect x="347.5" y="410.8" width="6.6" height="6.6" rx="1.4" fill="#2f6ee8"/>
<circle cx="389.4" cy="394.6" r="4.6" fill="#0a0a0a"/><path d="M387.6 392v4.600h3.800M389.800 392.4v2.400M390.400 394.20000000000005h2" stroke="#fff" stroke-width="1.1" fill="none"/></svg>
<div style="left:0px;top:92px;width:1166px;height:24px;background:#282828;"></div>
<div style="left:0px;top:92px;width:97px;height:24px;background:#3c3c3c;border-radius:4px 4px 0 0;"></div>
<div style="left:0px;top:116px;width:1166px;height:32px;background:#3c3c3c;"></div>
<div style="left:0px;top:147px;width:1166px;height:1px;background:#232323;"></div>
<svg style="left:9px;top:98.5px;" width="13" height="13" viewBox="0 0 13 13"><path d="M3.6 0.5V12.5M9 0.5V12.5M0.5 3.8H12.5M0.5 9.2H12.5" stroke="#c4c4c4" stroke-width="1.4" fill="none"/></svg>
<span class="t" style="left:28.7px;top:94.70px;font-size:15px;line-height:20px;color:#d2d2d2;letter-spacing:0.414px;">Scene</span>
<svg style="left:106px;top:99.5px;" width="18" height="11" viewBox="0 0 18 11"><path d="M5 0.6H13Q17.4 0.6 17.4 5.4Q17.4 10.2 13.6 10.2Q12 10.2 10.8 8.6H7.2Q6 10.2 4.4 10.2Q0.6 10.2 0.6 5.4Q0.6 0.6 5 0.6Z" fill="#c4c4c4"/><path d="M4.8 3.4V7M3 5.2H6.600" stroke="#282828" stroke-width="1.2"/><circle cx="11.6" cy="6.2" r="1" fill="#282828"/><circle cx="13.8" cy="4.2" r="1" fill="#282828"/></svg>
<span class="t" style="left:127.7px;top:94.70px;font-size:15px;line-height:20px;color:#d2d2d2;letter-spacing:-0.062px;">Game</span>
<svg style="left:1146.5px;top:97px;" width="5" height="13" viewBox="0 0 5 13"><circle cx="2.5" cy="2" r="1.5" fill="#c4c4c4"/><circle cx="2.5" cy="6.5" r="1.5" fill="#c4c4c4"/><circle cx="2.5" cy="11" r="1.5" fill="#c4c4c4"/></svg>
<div style="left:8.6px;top:122.5px;width:1.2px;height:20px;background:#5a5a5a;"></div>
<div style="left:11.4px;top:122.5px;width:1.2px;height:20px;background:#5a5a5a;"></div>
<div style="left:212.6px;top:122.5px;width:1.2px;height:20px;background:#5a5a5a;"></div>
<div style="left:215.6px;top:122.5px;width:1.2px;height:20px;background:#5a5a5a;"></div>
<div style="left:778.4px;top:122.5px;width:1.2px;height:20px;background:#5a5a5a;"></div>
<div style="left:782px;top:122.5px;width:1.2px;height:20px;background:#5a5a5a;"></div>
<div style="left:19.8px;top:120px;width:88.2px;height:24.599999999999994px;background:#515151;border-radius:3px;"></div>
<div style="left:112px;top:120px;width:89px;height:24.599999999999994px;background:#515151;border-radius:3px;"></div>
<svg style="left:24px;top:122px;" width="20" height="21" viewBox="0 0 20 21"><rect x="2.600" y="1.400" width="16" height="16" rx="1.600" fill="none" stroke="#c4c4c4" stroke-width="1.3"/><path d="M5.600 15L15.600 4.600" stroke="#c4c4c4" stroke-width="1.3"/><circle cx="4.200" cy="16.400" r="2.800" fill="#515151" stroke="#e8644a" stroke-width="1.600"/></svg>
<span class="t" style="left:47.5px;top:122.20px;font-size:15px;line-height:20px;color:#d2d2d2;letter-spacing:0.271px;">Pivot</span>
<svg style="left:90px;top:129.4px;" width="10" height="7" viewBox="0 0 10 7"><path d="M0.4 0.6H9.6L5 6.2Z" fill="#c4c4c4"/></svg>
<svg style="left:116px;top:121.5px;" width="21" height="22" viewBox="0 0 21 22"><path d="M9.600 1.200L18 5.200V14.400L9.600 18.800L1.200 14.400V5.200Z M1.200 5.200L9.600 9.400L18 5.200M9.600 9.400V18.800" fill="none" stroke="#c4c4c4" stroke-width="1.300" stroke-linejoin="round"/><circle cx="15.200" cy="17" r="2.800" fill="#515151" stroke="#e8644a" stroke-width="1.600"/></svg>
<span class="t" style="left:139.6px;top:122.20px;font-size:15px;line-height:20px;color:#d2d2d2;letter-spacing:0.148px;">Local</span>
<svg style="left:183.6px;top:129.4px;" width="10" height="7" viewBox="0 0 10 7"><path d="M0.4 0.6H9.6L5 6.2Z" fill="#c4c4c4"/></svg>
<div style="left:225px;top:120px;width:28px;height:24.599999999999994px;background:#515151;border-radius:3px;"></div>
<div style="left:254px;top:120px;width:17.399999999999977px;height:24.599999999999994px;background:#515151;border-radius:3px;"></div>
<div style="left:275.2px;top:120px;width:27.80000000000001px;height:24.599999999999994px;background:#515151;border-radius:3px;"></div>
<div style="left:304px;top:120px;width:16.80000000000001px;height:24.599999999999994px;background:#484848;border-radius:3px;"></div>
<div style="left:325px;top:120px;width:45.80000000000001px;height:24.599999999999994px;background:#515151;border-radius:3px;"></div>
<svg style="left:230px;top:123px;" width="20" height="20" viewBox="0 0 20 20"><path d="M5 1V15M10.600 1V8M1 5H16M1 10.600H10" stroke="#c4c4c4" stroke-width="1.300" fill="none"/><path d="M10.400 9.600L13.400 13.600L16.400 9.600M13.400 13.600V17.600" stroke="#e0e0e0" stroke-width="1.900" fill="none"/></svg>
<svg style="left:257.6px;top:129.4px;" width="10" height="7" viewBox="0 0 10 7"><path d="M0.4 0.6H9.6L5 6.2Z" fill="#c4c4c4"/></svg>
<svg style="left:280px;top:123px;" width="20" height="20" viewBox="0 0 20 20"><path d="M5 1V13M10.600 1V7M1 5H14M1 10.600H6" stroke="#9a9a9a" stroke-width="1.200" stroke-dasharray="2 1.400" fill="none"/><path d="M9 10.400H13.400Q16.400 10.400 16.400 13.200Q16.400 16 13.400 16H9" stroke="#e8644a" stroke-width="2.400" fill="none"/><rect x="8" y="9.200" width="2" height="2.400" fill="#e0e0e0"/><rect x="8" y="14.800" width="2" height="2.400" fill="#e0e0e0"/></svg>
<svg style="left:307.4px;top:129.4px;" width="10" height="7" viewBox="0 0 10 7"><path d="M0.4 0.6H9.6L5 6.2Z" fill="#858585"/></svg>
<svg style="left:329px;top:122.5px;" width="20" height="20" viewBox="0 0 20 20"><path d="M1.600 1V17M17.400 1V17" stroke="#c4c4c4" stroke-width="1.400"/><path d="M5 6V13M8.200 4V15M11.400 6V13M14.400 4V15" stroke="#c4c4c4" stroke-width="1.300"/><path d="M1.600 9.600H17.400" stroke="#c4c4c4" stroke-width="1"/></svg>
<svg style="left:353.4px;top:129.4px;" width="10" height="7" viewBox="0 0 10 7"><path d="M0.4 0.6H9.6L5 6.2Z" fill="#c4c4c4"/></svg>
<div style="left:790.8px;top:120px;width:45.40000000000009px;height:24.599999999999994px;background:#515151;border-radius:3px;"></div>
<div style="left:840.2px;top:120px;width:39.799999999999955px;height:24.599999999999994px;background:#46607c;border-radius:3px;"></div>
<div style="left:884.2px;top:120px;width:40.0px;height:24.599999999999994px;background:#46607c;border-radius:3px;"></div>
<div style="left:928px;top:120px;width:40px;height:24.599999999999994px;background:#515151;border-radius:3px;"></div>
<div style="left:972px;top:120px;width:27.799999999999955px;height:24.599999999999994px;background:#46607c;border-radius:3px;"></div>
<div style="left:1000.6px;top:120px;width:17.399999999999977px;height:24.599999999999994px;background:#46607c;border-radius:3px;"></div>
<div style="left:1022px;top:120px;width:39.799999999999955px;height:24.599999999999994px;background:#46607c;border-radius:3px;"></div>
<div style="left:1065.8px;top:120px;width:46.200000000000045px;height:24.599999999999994px;background:#515151;border-radius:3px;"></div>
<div style="left:1116.2px;top:120px;width:26.799999999999955px;height:24.599999999999994px;background:#46607c;border-radius:3px;"></div>
<div style="left:1143.8px;top:120px;width:18.200000000000045px;height:24.599999999999994px;background:#46607c;border-radius:3px;"></div>
<svg style="left:795px;top:122.5px;" width="20" height="20" viewBox="0 0 20 20"><circle cx="10" cy="10" r="8" fill="none" stroke="#c4c4c4" stroke-width="1.400"/><path d="M16.400 5.400Q18 10 15 14Q12 17.600 7 17.400Q3.600 16.600 2.600 13.600Q7 15.600 11.400 13Q15.400 10.400 16.400 5.400Z" fill="#c4c4c4"/></svg>
<svg style="left:818.8px;top:129.4px;" width="10" height="7" viewBox="0 0 10 7"><path d="M0.4 0.6H9.6L5 6.2Z" fill="#c4c4c4"/></svg>
<span class="t" style="left:852px;top:122.40px;font-size:15px;line-height:20px;color:#ffffff;letter-spacing:-1.388px;font-weight:bold;">2D</span>
<svg style="left:896px;top:122px;" width="16" height="21" viewBox="0 0 16 21"><circle cx="8" cy="7.400" r="5.800" fill="#f2f2f2"/><path d="M4.600 11H11.400V14H4.600Z" fill="#f2f2f2"/><path d="M5.200 15.200H10.800L9.600 17.400H6.400Z" fill="#f2f2f2"/></svg>
<svg style="left:940px;top:124px;" width="18" height="17" viewBox="0 0 18 17"><path d="M1 4.600H3.200V10.400H1ZM4.200 4.600L8.400 1.200V13.800L4.200 10.400Z" fill="#a8a8a8"/><path d="M10.400 9.800L15.400 14.800M15.400 9.800L10.400 14.800" stroke="#a8a8a8" stroke-width="1.500"/></svg>
<svg style="left:976.5px;top:122.5px;" width="21" height="20" viewBox="0 0 21 20"><path d="M1.600 10.600L8.200 7.400L14.800 10.600L8.200 13.800ZM1.600 14L8.200 17.200L14.800 14" fill="#f2f2f2" stroke="#f2f2f2" stroke-width="1.200" stroke-linejoin="round"/><path d="M14.600 0.600L15.800 3.800L19 5L15.800 6.200L14.600 9.400L13.400 6.200L10.200 5L13.400 3.800Z" fill="#f2f2f2"/></svg>
<svg style="left:1004.4px;top:129.4px;" width="10" height="7" viewBox="0 0 10 7"><path d="M0.4 0.6H9.6L5 6.2Z" fill="#c4c4c4"/></svg>
<svg style="left:1032px;top:123px;" width="20" height="19" viewBox="0 0 20 19"><path d="M1 9.600Q5.400 3.800 10 3.800Q14.600 3.800 19 9.600Q14.600 15.400 10 15.400Q5.400 15.400 1 9.600Z" fill="none" stroke="#f2f2f2" stroke-width="1.400"/><path d="M3.400 16.600L16.800 1.400" stroke="#f2f2f2" stroke-width="1.600"/></svg>
<svg style="left:1072px;top:125px;" width="20" height="14" viewBox="0 0 20 14"><rect x="0.800" y="1.400" width="11.400" height="11.200" rx="1" fill="#a8a8a8"/><path d="M13.600 5L18.600 1.800V12.200L13.600 9Z" fill="#a8a8a8"/></svg>
<svg style="left:1094.4px;top:129.4px;" width="10" height="7" viewBox="0 0 10 7"><path d="M0.4 0.6H9.6L5 6.2Z" fill="#c4c4c4"/></svg>
<svg style="left:1119.5px;top:122px;" width="21" height="21" viewBox="0 0 21 21"><circle cx="10.400" cy="10.400" r="8.400" fill="none" stroke="#f2f2f2" stroke-width="1.500"/><path d="M2.600 8Q10.400 13.400 18.600 9.600M10.400 2Q14.400 10 10.400 18.800" stroke="#f2f2f2" stroke-width="1.200" fill="none"/><circle cx="10.400" cy="2.200" r="1.800" fill="#f2f2f2"/><circle cx="2.600" cy="8" r="1.800" fill="#f2f2f2"/><circle cx="18.400" cy="9.400" r="1.800" fill="#f2f2f2"/><circle cx="12" cy="11.400" r="1.600" fill="#f2f2f2"/></svg>
<svg style="left:1147.8px;top:129.4px;" width="10" height="7" viewBox="0 0 10 7"><path d="M0.4 0.6H9.6L5 6.2Z" fill="#c4c4c4"/></svg>
<div style="left:3px;top:152px;width:48.4px;height:209.4px;background:#161616;border-radius:5px;"></div>
<div style="left:17px;top:161px;width:20px;height:1.2px;background:#6a6a6a;"></div>
<div style="left:17px;top:164px;width:20px;height:1.2px;background:#6a6a6a;"></div>
<div style="left:7px;top:174.4px;width:40px;height:24.400000000000006px;background:#585858;border-radius:3px 3px 0 0;"></div>
<div style="left:7px;top:199.8px;width:40px;height:24.799999999999983px;background:#585858;border-radius:0;"></div>
<div style="left:7px;top:226.2px;width:40px;height:24.400000000000006px;background:#585858;border-radius:0;"></div>
<div style="left:7px;top:252.4px;width:40px;height:24.599999999999994px;background:#585858;border-radius:0;"></div>
<div style="left:7px;top:278px;width:40px;height:25px;background:#46607c;border-radius:0;"></div>
<div style="left:7px;top:304.4px;width:40px;height:24.600000000000023px;background:#585858;border-radius:0 0 3px 3px;"></div>
<div style="left:7px;top:333px;width:40px;height:25px;background:#585858;border-radius:3px;"></div>
<svg style="left:16.5px;top:176px;" width="21" height="21" viewBox="0 0 21 21"><path d="M6.400 19Q3.600 16 1.600 12.400Q.8 10.600 2.400 10.200Q3.800 10.200 5.400 12.800V5.400Q5.400 4 6.500 4Q7.600 4 7.600 5.400V10H8.200V3.200Q8.200 1.800 9.300 1.800Q10.400 1.800 10.400 3.200V10H11V3.800Q11 2.400 12.100 2.400Q13.200 2.400 13.200 3.800V10.400H13.800V6Q13.800 4.800 14.800 4.800Q15.800 4.800 15.800 6V13.400Q15.800 16.600 14 19Z" fill="#d6d6d6"/></svg>
<svg style="left:17px;top:202px;" width="20" height="20" viewBox="0 0 20 20"><path d="M10 2V18M2 10H18" stroke="#cdcdcd" stroke-width="1.300"/><path d="M7.400 4.600L10 1.600L12.600 4.600M7.400 15.400L10 18.400L12.600 15.400M4.600 7.400L1.600 10L4.600 12.600M15.400 7.400L18.400 10L15.400 12.600" stroke="#cdcdcd" stroke-width="1.300" fill="none"/></svg>
<svg style="left:17px;top:228.5px;" width="20" height="20" viewBox="0 0 20 20"><path d="M15.600 5.400A7.400 7.400 0 0 0 3 8.600M4.400 14.600A7.400 7.400 0 0 0 17 11.400" stroke="#cdcdcd" stroke-width="1.400" fill="none"/><path d="M12.600 5.800H16.200V2.200M7.400 14.200H3.800V17.800" stroke="#cdcdcd" stroke-width="1.400" fill="none"/></svg>
<svg style="left:17px;top:254.5px;" width="20" height="20" viewBox="0 0 20 20"><rect x="2" y="2" width="16" height="16" rx="1" fill="none" stroke="#cdcdcd" stroke-width="1.300"/><path d="M2 12H8V18" stroke="#cdcdcd" stroke-width="1.300" fill="none"/><path d="M9.600 10.400L15 5M10.800 4.800H15.200V9.200" stroke="#cdcdcd" stroke-width="1.300" fill="none"/></svg>
<svg style="left:17px;top:280.5px;" width="20" height="20" viewBox="0 0 20 20"><rect x="3.400" y="3.400" width="13.200" height="13.200" fill="none" stroke="#fff" stroke-width="1.400"/><rect x="1.400" y="1.400" width="4" height="4" fill="#fff"/><rect x="14.600" y="1.400" width="4" height="4" fill="#fff"/><rect x="1.400" y="14.600" width="4" height="4" fill="#fff"/><rect x="14.600" y="14.600" width="4" height="4" fill="#fff"/></svg>
<svg style="left:17px;top:306.5px;" width="20" height="20" viewBox="0 0 20 20"><circle cx="10" cy="10" r="6.400" fill="none" stroke="#cdcdcd" stroke-width="1.300"/><path d="M10 4.600V15.400M4.600 10H15.400" stroke="#cdcdcd" stroke-width="1.200"/><path d="M8.400 6.400L10 4.400L11.600 6.400M8.400 13.600L10 15.600L11.600 13.600M6.400 8.400L4.400 10L6.400 11.600M13.600 8.400L15.600 10L13.600 11.600" stroke="#cdcdcd" stroke-width="1.100" fill="none"/><path d="M1.600 5V1.600H5M15 1.600H18.400V5M1.600 15V18.400H5" stroke="#cdcdcd" stroke-width="1.200" fill="none"/></svg>
<svg style="left:16px;top:335.5px;" width="22" height="20" viewBox="0 0 22 20"><path d="M3.600 15.600Q7.600 12 9.400 5.400M12.400 5.400Q14.600 11.400 18.400 11.800" stroke="#cdcdcd" stroke-width="1.300" fill="none"/><rect x="8.600" y="2.400" width="4.400" height="4.400" fill="none" stroke="#cdcdcd" stroke-width="1.300"/><rect x="1.400" y="13.400" width="4.400" height="4.400" fill="none" stroke="#cdcdcd" stroke-width="1.300"/><rect x="16.400" y="9.600" width="4.400" height="4.400" fill="none" stroke="#cdcdcd" stroke-width="1.300"/></svg>
<div style="left:987.5px;top:613.8px;width:175.2px;height:49.2px;background:rgba(22,22,22,.94);border-radius:5px;"></div>
<div style="left:994.5px;top:620.6px;width:20px;height:1.2px;background:#5a5a5a;"></div>
<div style="left:994.5px;top:624.2px;width:20px;height:1.2px;background:#5a5a5a;"></div>
<span class="t" style="left:1021.6px;top:613.20px;font-size:15px;line-height:20px;color:#a8a8a8;letter-spacing:0.322px;">Tilemap Focus</span>
<span class="t" style="left:994.3px;top:636.30px;font-size:15px;line-height:20px;color:#e4e4e4;letter-spacing:0.122px;">Focus On</span>
<div style="left:1067px;top:634px;width:90.6px;height:24.4px;background:#585858;border-radius:3px;"></div>
<svg style="left:1071.5px;top:637px;" width="18" height="18" viewBox="0 0 18 18"><rect x="1.600" y="1.600" width="14.400" height="14.400" rx="1" fill="none" stroke="#d0d0d0" stroke-width="1.400" stroke-dasharray="5.200 2"/></svg>
<span class="t" style="left:1094.4px;top:636.30px;font-size:15px;line-height:20px;color:#d2d2d2;letter-spacing:0.285px;">None</span>
<svg style="left:1139.2px;top:643.2px;" width="10" height="7" viewBox="0 0 10 7"><path d="M0.4 0.6H9.6L5 6.2Z" fill="#d2d2d2"/></svg>
<!-- hier -->
<div style="left:1168px;top:92px;width:352px;height:573px;background:#383838;"></div>
<div style="left:1168px;top:92px;width:352px;height:24px;background:#282828;"></div>
<div style="left:1168px;top:92px;width:121px;height:24px;background:#3c3c3c;border-radius:3px 3px 0 0;"></div>
<div style="left:1168px;top:92px;width:121px;height:2.6px;background:#3a79bb;border-radius:3px 3px 0 0;"></div>
<svg style="left:1179px;top:98px;" width="13" height="12" viewBox="0 0 13 12"><path d="M4.400 2H12.400M4.400 6H12.400M4.400 10H12.400" stroke="#c4c4c4" stroke-width="1.300"/><path d="M0.600 0.800L3 2L0.600 3.200Z" fill="#c4c4c4"/><rect x="1.400" y="5.300" width="1.500" height="1.400" fill="#c4c4c4"/><rect x="1.400" y="9.300" width="1.500" height="1.400" fill="#c4c4c4"/></svg>
<span class="t" style="left:1198px;top:94.70px;font-size:15px;line-height:20px;color:#d2d2d2;letter-spacing:0.535px;">Hierarchy</span>
<svg style="left:1476px;top:97px;" width="12" height="13" viewBox="0 0 12 13"><rect x="1" y="6.400" width="9.600" height="5.600" rx="0.800" fill="none" stroke="#c4c4c4" stroke-width="1.300"/><path d="M3.400 6.400V3.600Q3.400 1 6 1Q8.600 1 8.600 3.200" fill="none" stroke="#c4c4c4" stroke-width="1.300"/></svg>
<svg style="left:1500.5px;top:97px;" width="5" height="13" viewBox="0 0 5 13"><circle cx="2.500" cy="2" r="1.500" fill="#c4c4c4"/><circle cx="2.500" cy="6.500" r="1.500" fill="#c4c4c4"/><circle cx="2.500" cy="11" r="1.500" fill="#c4c4c4"/></svg>
<div style="left:1168px;top:116px;width:352px;height:25.5px;background:#3c3c3c;"></div>
<div style="left:1168px;top:141px;width:352px;height:1px;background:#232323;"></div>
<svg style="left:1176px;top:121px;" width="16" height="16" viewBox="0 0 16 16"><path d="M8 1V15M1 8H15" stroke="#d2d2d2" stroke-width="1.600"/></svg>
<svg style="left:1197px;top:125.4px;" width="10" height="7" viewBox="0 0 10 7"><path d="M0.4 0.6H9.6L5 6.2Z" fill="#c4c4c4"/></svg>
<div style="left:1223px;top:119.4px;width:292px;height:19px;background:#2a2a2a;border-radius:4px;border:1px solid #212121;box-sizing:border-box;"></div>
<svg style="left:1229px;top:123.5px;" width="13" height="11" viewBox="0 0 13 11"><circle cx="4" cy="4.200" r="2.900" fill="none" stroke="#b4b4b4" stroke-width="1.300"/><path d="M6 6.400L9 9.600" stroke="#b4b4b4" stroke-width="1.600"/><path d="M9.400 3.600H12.600L11 5.600Z" fill="#b4b4b4"/></svg>
<span class="t" style="left:1245.5px;top:119.00px;font-size:15px;line-height:20px;color:#6e6e6e;letter-spacing:0.500px;">All</span>
<div style="left:1496px;top:120.4px;width:18px;height:17px;background:#383838;border-radius:0 3px 3px 0;"></div>
<svg style="left:1498px;top:122.5px;" width="14" height="13" viewBox="0 0 14 13"><rect x="0.800" y="5" width="7" height="7" fill="none" stroke="#b4b4b4" stroke-width="1.200"/><path d="M4 5V1H13V10H8" fill="none" stroke="#b4b4b4" stroke-width="1.200"/><path d="M6.400 7.600L10.600 3.400M7.600 3.200H10.800V6.400" fill="none" stroke="#b4b4b4" stroke-width="1.200"/></svg>
<div style="left:1168px;top:142px;width:40px;height:523px;background:#303030;"></div>
<div style="left:1168px;top:142px;width:352px;height:20px;background:#2d2d2d;"></div>
<svg style="left:1211.5px;top:148px;" width="11" height="9" viewBox="0 0 11 9"><path d="M0.600 0.600H10.400L5.500 8.400Z" fill="#6a6a6a"/></svg>
<svg style="left:1227px;top:143px;" width="17" height="18" viewBox="0 0 17 18"><path d="M8.500 0.800L16 5V13L8.500 17.200L1 13V5Z" fill="#e8e8e8"/><path d="M8.500 9V17.200M8.500 9L1 5M8.500 9L16 5" stroke="#2d2d2d" stroke-width="1.800"/><path d="M8.500 3.600L12.600 6V11L8.500 13.400L4.400 11V6Z" fill="#2d2d2d"/><path d="M8.500 9V13.400M8.500 9L4.400 6M8.500 9L12.600 6" stroke="#e8e8e8" stroke-width="1.500"/></svg>
<span class="t" style="left:1249px;top:141.80px;font-size:15px;line-height:20px;color:#e4e4e4;letter-spacing:-0.033px;font-weight:bold;">Level1</span>
<svg style="left:1501.5px;top:146px;" width="5" height="13" viewBox="0 0 5 13"><circle cx="2.500" cy="2" r="1.500" fill="#c4c4c4"/><circle cx="2.500" cy="6.500" r="1.500" fill="#c4c4c4"/><circle cx="2.500" cy="11" r="1.500" fill="#c4c4c4"/></svg>
<svg style="left:1191px;top:144px;" width="16" height="16" viewBox="0 0 16 16"><path d="M1 1.600L5 5.600L6.600 2.600L9 6.600L10.600 4.600L13 10L10 13.600H5.600L2.600 8.600Z" fill="#8a8a8a"/><rect x="10.400" y="10.800" width="4.400" height="4.400" rx="1" fill="#9a9a9a"/></svg>
<svg style="left:1191px;top:244px;" width="16" height="16" viewBox="0 0 16 16"><path d="M1 1.600L5 5.600L6.600 2.600L9 6.600L10.600 4.600L13 10L10 13.600H5.600L2.600 8.600Z" fill="#8a8a8a"/><rect x="10.400" y="10.800" width="4.400" height="4.400" rx="1" fill="#9a9a9a"/></svg>
<svg style="left:1243px;top:162.8px;" width="17" height="18" viewBox="0 0 17 18"><path d="M8.500 1.200L15.600 4.800V12.600L8.500 16.600L1.400 12.600V4.800Z M1.400 4.800L8.500 8.600L15.600 4.800M8.500 8.600V16.600" fill="none" stroke="#c4c4c4" stroke-width="1.300" stroke-linejoin="round"/></svg>
<span class="t" style="left:1265px;top:161.80px;font-size:15px;line-height:20px;color:#d2d2d2;letter-spacing:0.541px;">GameManager</span>
<svg style="left:1229.5px;top:186.3px;" width="9" height="11" viewBox="0 0 9 11"><path d="M0.600 0.600L8.400 5.500L0.600 10.400Z" fill="#7a7a7a"/></svg>
<svg style="left:1243px;top:182.8px;" width="17" height="18" viewBox="0 0 17 18"><path d="M8.500 0.800L16 4.600V12.800L8.500 17L1 12.800V4.600Z" fill="#7ecbf5"/><path d="M1 4.600L8.500 8.600L16 4.600M8.500 8.600V17" fill="none" stroke="#383838" stroke-width="1.300"/></svg>
<span class="t" style="left:1265px;top:181.80px;font-size:15px;line-height:20px;color:#8cb4f0;letter-spacing:0.620px;">AudioManager</span>
<svg style="left:1243px;top:202.8px;" width="17" height="18" viewBox="0 0 17 18"><path d="M8.500 1.200L15.600 4.800V12.600L8.500 16.600L1.400 12.600V4.800Z M1.400 4.800L8.500 8.600L15.600 4.800M8.500 8.600V16.600" fill="none" stroke="#c4c4c4" stroke-width="1.300" stroke-linejoin="round"/></svg>
<span class="t" style="left:1265px;top:201.80px;font-size:15px;line-height:20px;color:#d2d2d2;letter-spacing:0.567px;">EventSystem</span>
<svg style="left:1229.5px;top:226.3px;" width="9" height="11" viewBox="0 0 9 11"><path d="M0.600 0.600L8.400 5.500L0.600 10.400Z" fill="#7a7a7a"/></svg>
<svg style="left:1243px;top:222.8px;" width="17" height="18" viewBox="0 0 17 18"><path d="M8.500 1.200L15.600 4.800V12.600L8.500 16.600L1.400 12.600V4.800Z M1.400 4.800L8.500 8.600L15.600 4.800M8.500 8.600V16.600" fill="none" stroke="#c4c4c4" stroke-width="1.300" stroke-linejoin="round"/></svg>
<span class="t" style="left:1265px;top:221.80px;font-size:15px;line-height:20px;color:#d2d2d2;letter-spacing:1.307px;">--Camera--</span>
<svg style="left:1229.5px;top:246.3px;" width="9" height="11" viewBox="0 0 9 11"><path d="M0.600 0.600L8.400 5.500L0.600 10.400Z" fill="#7a7a7a"/></svg>
<svg style="left:1243px;top:242.8px;" width="17" height="18" viewBox="0 0 17 18"><path d="M8.500 1.200L15.600 4.800V12.600L8.500 16.600L1.400 12.600V4.800Z M1.400 4.800L8.500 8.600L15.600 4.800M8.500 8.600V16.600" fill="none" stroke="#c4c4c4" stroke-width="1.300" stroke-linejoin="round"/></svg>
<span class="t" style="left:1265px;top:241.80px;font-size:15px;line-height:20px;color:#d2d2d2;letter-spacing:0.956px;">--User Interface--</span>
<svg style="left:1229.5px;top:266.3px;" width="9" height="11" viewBox="0 0 9 11"><path d="M0.600 0.600L8.400 5.500L0.600 10.400Z" fill="#7a7a7a"/></svg>
<svg style="left:1243px;top:262.8px;" width="17" height="18" viewBox="0 0 17 18"><path d="M8.500 1.200L15.600 4.800V12.600L8.500 16.600L1.400 12.600V4.800Z M1.400 4.800L8.500 8.600L15.600 4.800M8.500 8.600V16.600" fill="none" stroke="#c4c4c4" stroke-width="1.300" stroke-linejoin="round"/></svg>
<span class="t" style="left:1265px;top:261.80px;font-size:15px;line-height:20px;color:#d2d2d2;letter-spacing:0.016px;">Grid</span>
<svg style="left:1243px;top:282.8px;" width="17" height="18" viewBox="0 0 17 18"><path d="M8.500 1.200L15.600 4.800V12.600L8.500 16.600L1.400 12.600V4.800Z M1.400 4.800L8.500 8.600L15.600 4.800M8.500 8.600V16.600" fill="none" stroke="#c4c4c4" stroke-width="1.300" stroke-linejoin="round"/></svg>
<span class="t" style="left:1265px;top:281.80px;font-size:15px;line-height:20px;color:#d2d2d2;letter-spacing:0.536px;">Reticle</span>
<div style="left:1168px;top:301.8px;width:352px;height:20px;background:#2c5d87;"></div>
<div style="left:1168px;top:301.8px;width:40px;height:20px;background:#2b5379;"></div>
<svg style="left:1229.5px;top:306.3px;" width="9" height="11" viewBox="0 0 9 11"><path d="M0.600 0.600L8.400 5.500L0.600 10.400Z" fill="#9a9a9a"/></svg>
<svg style="left:1243px;top:302.8px;" width="17" height="18" viewBox="0 0 17 18"><path d="M8.500 1.200L15.600 4.800V12.600L8.500 16.600L1.400 12.600V4.800Z M1.400 4.800L8.500 8.600L15.600 4.800M8.500 8.600V16.600" fill="none" stroke="#dadada" stroke-width="1.300" stroke-linejoin="round"/></svg>
<span class="t" style="left:1265px;top:301.80px;font-size:15px;line-height:20px;color:#ffffff;letter-spacing:0.580px;">Player</span>
<svg style="left:1229.5px;top:326.3px;" width="9" height="11" viewBox="0 0 9 11"><path d="M0.600 0.600L8.400 5.500L0.600 10.400Z" fill="#7a7a7a"/></svg>
<svg style="left:1243px;top:322.8px;" width="17" height="18" viewBox="0 0 17 18"><path d="M8.500 1.200L15.600 4.800V12.600L8.500 16.600L1.400 12.600V4.800Z M1.400 4.800L8.500 8.600L15.600 4.800M8.500 8.600V16.600" fill="none" stroke="#c4c4c4" stroke-width="1.300" stroke-linejoin="round"/></svg>
<span class="t" style="left:1265px;top:321.80px;font-size:15px;line-height:20px;color:#d2d2d2;letter-spacing:1.205px;">--Enemies--</span>
<svg style="left:1229.5px;top:346.3px;" width="9" height="11" viewBox="0 0 9 11"><path d="M0.600 0.600L8.400 5.500L0.600 10.400Z" fill="#7a7a7a"/></svg>
<svg style="left:1243px;top:342.8px;" width="17" height="18" viewBox="0 0 17 18"><path d="M8.500 1.200L15.600 4.800V12.600L8.500 16.600L1.400 12.600V4.800Z M1.400 4.800L8.500 8.600L15.600 4.800M8.500 8.600V16.600" fill="none" stroke="#c4c4c4" stroke-width="1.300" stroke-linejoin="round"/></svg>
<span class="t" style="left:1265px;top:341.80px;font-size:15px;line-height:20px;color:#d2d2d2;letter-spacing:1.416px;">--Items--</span>
<svg style="left:1229.5px;top:366.3px;" width="9" height="11" viewBox="0 0 9 11"><path d="M0.600 0.600L8.400 5.500L0.600 10.400Z" fill="#7a7a7a"/></svg>
<svg style="left:1243px;top:362.8px;" width="17" height="18" viewBox="0 0 17 18"><path d="M8.500 1.200L15.600 4.800V12.600L8.500 16.600L1.400 12.600V4.800Z M1.400 4.800L8.500 8.600L15.600 4.800M8.500 8.600V16.600" fill="none" stroke="#c4c4c4" stroke-width="1.300" stroke-linejoin="round"/></svg>
<span class="t" style="left:1265px;top:361.80px;font-size:15px;line-height:20px;color:#d2d2d2;letter-spacing:1.081px;">--Environment--</span>
<svg style="left:1243px;top:382.8px;" width="17" height="18" viewBox="0 0 17 18"><path d="M8.500 1.200L15.600 4.800V12.600L8.500 16.600L1.400 12.600V4.800Z M1.400 4.800L8.500 8.600L15.600 4.800M8.500 8.600V16.600" fill="none" stroke="#c4c4c4" stroke-width="1.300" stroke-linejoin="round"/></svg>
<span class="t" style="left:1265px;top:381.80px;font-size:15px;line-height:20px;color:#d2d2d2;letter-spacing:0.522px;">SceneL1BTrigger</span>
<svg style="left:1243px;top:402.8px;" width="17" height="18" viewBox="0 0 17 18"><path d="M8.500 1.200L15.600 4.800V12.600L8.500 16.600L1.400 12.600V4.800Z M1.400 4.800L8.500 8.600L15.600 4.800M8.500 8.600V16.600" fill="none" stroke="#c4c4c4" stroke-width="1.300" stroke-linejoin="round"/></svg>
<span class="t" style="left:1265px;top:401.80px;font-size:15px;line-height:20px;color:#d2d2d2;letter-spacing:0.533px;">SceneL1CTrigger</span>
<svg style="left:1243px;top:422.8px;" width="17" height="18" viewBox="0 0 17 18"><path d="M8.500 1.200L15.600 4.800V12.600L8.500 16.600L1.400 12.600V4.800Z M1.400 4.800L8.500 8.600L15.600 4.800M8.500 8.600V16.600" fill="none" stroke="#c4c4c4" stroke-width="1.300" stroke-linejoin="round"/></svg>
<span class="t" style="left:1265px;top:421.80px;font-size:15px;line-height:20px;color:#d2d2d2;letter-spacing:0.533px;">SceneL1DTrigger</span>
<svg style="left:1243px;top:442.8px;" width="17" height="18" viewBox="0 0 17 18"><path d="M8.500 1.200L15.600 4.800V12.600L8.500 16.600L1.400 12.600V4.800Z M1.400 4.800L8.500 8.600L15.600 4.800M8.500 8.600V16.600" fill="none" stroke="#c4c4c4" stroke-width="1.300" stroke-linejoin="round"/></svg>
<span class="t" style="left:1265px;top:441.80px;font-size:15px;line-height:20px;color:#d2d2d2;letter-spacing:0.455px;">SceneL1ETrigger</span>
<svg style="left:1505px;top:186.5px;" width="8" height="11" viewBox="0 0 8 11"><path d="M1.400 1L6.400 5.500L1.400 10" fill="none" stroke="#8a8a8a" stroke-width="1.500"/></svg>
<!-- insp -->
<div style="left:1522px;top:92px;width:398px;height:901px;background:#383838;"></div>
<div style="left:1522px;top:92px;width:398px;height:24px;background:#282828;"></div>
<div style="left:1522px;top:92px;width:119px;height:24px;background:#383838;border-radius:3px 3px 0 0;"></div>
<svg style="left:1533.5px;top:98px;" width="13" height="13" viewBox="0 0 13 13"><circle cx="6.500" cy="6.500" r="6.300" fill="#c4c4c4"/><rect x="5.600" y="5.600" width="1.900" height="5" fill="#383838"/><rect x="5.600" y="2.600" width="1.900" height="1.900" fill="#383838"/></svg>
<span class="t" style="left:1552.3px;top:94.70px;font-size:15px;line-height:20px;color:#d2d2d2;letter-spacing:0.589px;">Inspector</span>
<span class="t" style="left:1650.8px;top:94.70px;font-size:15px;line-height:20px;color:#d2d2d2;letter-spacing:0.502px;">Tile Palette</span>
<svg style="left:1875px;top:97px;" width="12" height="13" viewBox="0 0 12 13"><rect x="1" y="6.400" width="9.600" height="5.600" rx="0.800" fill="none" stroke="#c4c4c4" stroke-width="1.300"/><path d="M3.400 6.400V3.600Q3.400 1 6 1Q8.600 1 8.600 3.200" fill="none" stroke="#c4c4c4" stroke-width="1.300"/></svg>
<svg style="left:1899.5px;top:97px;" width="5" height="13" viewBox="0 0 5 13"><circle cx="2.500" cy="2" r="1.500" fill="#c4c4c4"/><circle cx="2.500" cy="6.500" r="1.500" fill="#c4c4c4"/><circle cx="2.500" cy="11" r="1.500" fill="#c4c4c4"/></svg>
<div style="left:1905px;top:116px;width:15px;height:877px;background:#353535;"></div>
<div style="left:1904px;top:116px;width:1px;height:877px;background:#2c2c2c;"></div>
<div style="left:1907.4px;top:136.4px;width:9.8px;height:196px;background:#5f5f5f;border-radius:5px;"></div>
<svg style="left:1907.5px;top:122.5px;" width="10" height="7" viewBox="0 0 10 7"><path d="M0.400 6.400H9.600L5 0.800Z" fill="#c4c4c4"/></svg>
<svg style="left:1907.5px;top:978.6px;" width="10" height="7" viewBox="0 0 10 7"><path d="M0.4 0.6H9.6L5 6.2Z" fill="#c4c4c4"/></svg>
<svg style="left:1530px;top:128px;" width="28" height="30" viewBox="0 0 28 30"><path d="M13 1.600L24.400 6.800V20L13 26.400L1.600 20V6.800Z M1.600 6.800L13 12.600L24.400 6.800M13 12.600V26.400" fill="none" stroke="#c4c4c4" stroke-width="1.500" stroke-linejoin="round"/></svg>
<svg style="left:1555px;top:153.5px;" width="9" height="7" viewBox="0 0 9 7"><path d="M0.400 0.600H8.600L4.500 6Z" fill="#c4c4c4"/></svg>
<div style="left:1581px;top:130.4px;width:17px;height:17.0px;background:#2a2a2a;border:1px solid #212121;box-sizing:border-box;border-radius:3px;"></div><svg style="left:1583.5px;top:133.4px;" width="12" height="11" viewBox="0 0 12 11"><path d="M1.400 5.600L4.600 9L10.600 1.600" fill="none" stroke="#e8e8e8" stroke-width="1.900"/></svg>
<div style="left:1605.8px;top:127px;width:197.20000000000005px;height:22.80000000000001px;background:#2a2a2a;border:1px solid #212121;box-sizing:border-box;border-radius:3px;"></div>
<span class="t" style="left:1609px;top:129.20px;font-size:15px;line-height:20px;color:#e4e4e4;letter-spacing:0.261px;font-weight:bold;">Player</span>
<div style="left:1807px;top:130.4px;width:17px;height:17.0px;background:#2a2a2a;border:1px solid #212121;box-sizing:border-box;border-radius:3px;"></div>
<span class="t" style="left:1829px;top:129.00px;font-size:15px;line-height:20px;color:#c4c4c4;letter-spacing:0.581px;">Static</span>
<svg style="left:1886px;top:135.6px;" width="10" height="7" viewBox="0 0 10 7"><path d="M0.4 0.6H9.6L5 6.2Z" fill="#c4c4c4"/></svg>
<span class="t" style="left:1573px;top:158.40px;font-size:15px;line-height:20px;color:#c4c4c4;letter-spacing:0.939px;">Tag</span>
<div style="left:1606px;top:158px;width:121px;height:21px;background:#515151;border:1px solid #303030;box-sizing:border-box;border-radius:3px;"></div><span class="t" style="left:1610.3px;top:158.20px;font-size:15px;line-height:20px;color:#e0e0e0;letter-spacing:0.580px;">Player</span><svg style="left:1710.6px;top:165.3px;" width="10" height="7" viewBox="0 0 10 7"><path d="M0.4 0.6H9.6L5 6.2Z" fill="#d2d2d2"/></svg>
<span class="t" style="left:1743px;top:158.40px;font-size:15px;line-height:20px;color:#c4c4c4;letter-spacing:0.696px;">Layer</span>
<div style="left:1789.6px;top:158px;width:108.80000000000018px;height:21px;background:#515151;border:1px solid #303030;box-sizing:border-box;border-radius:3px;"></div><span class="t" style="left:1793.8999999999999px;top:158.20px;font-size:15px;line-height:20px;color:#e0e0e0;letter-spacing:0.328px;">Ground</span><svg style="left:1882.0px;top:165.3px;" width="10" height="7" viewBox="0 0 10 7"><path d="M0.4 0.6H9.6L5 6.2Z" fill="#d2d2d2"/></svg>
<div style="left:1522px;top:190px;width:383px;height:1px;background:#1f1f1f;"></div><div style="left:1522px;top:191px;width:383px;height:26.400000000000006px;background:#3e3e3e;"></div>
<svg style="left:1529.5px;top:200px;" width="11" height="9" viewBox="0 0 11 9"><path d="M0.600 0.600H10.400L5.500 8.400Z" fill="#6e6e6e"/></svg>
<svg style="left:1548px;top:196px;" width="18" height="17" viewBox="0 0 18 17"><path d="M8.600 8.600V2" stroke="#b4e04c" stroke-width="2.600" stroke-linecap="round"/><path d="M8.600 9L2.600 12.800" stroke="#5cb8f0" stroke-width="2.600" stroke-linecap="round"/><path d="M8.600 9L15 12.600" stroke="#f0684c" stroke-width="2.600" stroke-linecap="round"/></svg>
<span class="t" style="left:1597.6px;top:194.40px;font-size:15px;line-height:20px;color:#e4e4e4;letter-spacing:0.405px;font-weight:bold;">Transform</span>
<svg style="left:1831.5px;top:197.9px;" width="13" height="13" viewBox="0 0 13 13"><circle cx="6.500" cy="6.500" r="6.300" fill="#c4c4c4"/><path d="M4.400 5.200Q4.400 3 6.600 3Q8.700 3 8.700 4.900Q8.700 6 7.500 6.700Q6.600 7.300 6.600 8.200" fill="none" stroke="#3e3e3e" stroke-width="1.700"/><rect x="5.700" y="9.300" width="1.800" height="1.700" fill="#3e3e3e"/></svg><svg style="left:1856.5px;top:197.9px;" width="14" height="13" viewBox="0 0 14 13"><path d="M0.500 3.400H8M11 3.400H13.500M0.500 9.600H3.400M6.400 9.600H13.500" stroke="#c4c4c4" stroke-width="1.500"/><path d="M9.500 0.800V6M4.900 7V12.200" stroke="#c4c4c4" stroke-width="1.700"/></svg><svg style="left:1885.5px;top:197.9px;" width="5" height="13" viewBox="0 0 5 13"><circle cx="2.500" cy="2" r="1.500" fill="#c4c4c4"/><circle cx="2.500" cy="6.500" r="1.500" fill="#c4c4c4"/><circle cx="2.500" cy="11" r="1.500" fill="#c4c4c4"/></svg>
<span class="t" style="left:1546.3px;top:224.60px;font-size:15px;line-height:20px;color:#c4c4c4;letter-spacing:0.517px;">Position</span>
<span class="t" style="left:1665.5px;top:224.60px;font-size:15px;line-height:20px;color:#c4c4c4;letter-spacing:0.500px;">X</span>
<div style="left:1683px;top:223.4px;width:55.59999999999991px;height:22.19999999999999px;background:#2a2a2a;border:1px solid #212121;box-sizing:border-box;border-radius:3px;"></div>
<span class="t" style="left:1687px;top:225.20px;font-size:15px;line-height:20px;color:#d8d8d8;letter-spacing:0.500px;">0</span>
<span class="t" style="left:1745px;top:224.60px;font-size:15px;line-height:20px;color:#c4c4c4;letter-spacing:0.500px;">Y</span>
<div style="left:1763px;top:223.4px;width:55.59999999999991px;height:22.19999999999999px;background:#2a2a2a;border:1px solid #212121;box-sizing:border-box;border-radius:3px;"></div>
<span class="t" style="left:1767px;top:225.20px;font-size:15px;line-height:20px;color:#d8d8d8;letter-spacing:0.500px;">0</span>
<span class="t" style="left:1825.6px;top:224.60px;font-size:15px;line-height:20px;color:#c4c4c4;letter-spacing:0.500px;">Z</span>
<div style="left:1843px;top:223.4px;width:56px;height:22.19999999999999px;background:#2a2a2a;border:1px solid #212121;box-sizing:border-box;border-radius:3px;"></div>
<span class="t" style="left:1847px;top:225.20px;font-size:15px;line-height:20px;color:#d8d8d8;letter-spacing:0.500px;">0</span>
<span class="t" style="left:1546.3px;top:249.60px;font-size:15px;line-height:20px;color:#c4c4c4;letter-spacing:0.454px;">Rotation</span>
<span class="t" style="left:1665.5px;top:249.60px;font-size:15px;line-height:20px;color:#c4c4c4;letter-spacing:0.500px;">X</span>
<div style="left:1683px;top:248.40000000000003px;width:55.59999999999991px;height:22.19999999999999px;background:#2a2a2a;border:1px solid #212121;box-sizing:border-box;border-radius:3px;"></div>
<span class="t" style="left:1687px;top:250.20px;font-size:15px;line-height:20px;color:#d8d8d8;letter-spacing:0.500px;">0</span>
<span class="t" style="left:1745px;top:249.60px;font-size:15px;line-height:20px;color:#c4c4c4;letter-spacing:0.500px;">Y</span>
<div style="left:1763px;top:248.40000000000003px;width:55.59999999999991px;height:22.19999999999999px;background:#2a2a2a;border:1px solid #212121;box-sizing:border-box;border-radius:3px;"></div>
<span class="t" style="left:1767px;top:250.20px;font-size:15px;line-height:20px;color:#d8d8d8;letter-spacing:0.500px;">0</span>
<span class="t" style="left:1825.6px;top:249.60px;font-size:15px;line-height:20px;color:#c4c4c4;letter-spacing:0.500px;">Z</span>
<div style="left:1843px;top:248.40000000000003px;width:56px;height:22.19999999999999px;background:#2a2a2a;border:1px solid #212121;box-sizing:border-box;border-radius:3px;"></div>
<span class="t" style="left:1847px;top:250.20px;font-size:15px;line-height:20px;color:#d8d8d8;letter-spacing:0.500px;">0</span>
<span class="t" style="left:1546.3px;top:274.60px;font-size:15px;line-height:20px;color:#c4c4c4;letter-spacing:0.496px;">Scale</span>
<span class="t" style="left:1665.5px;top:274.60px;font-size:15px;line-height:20px;color:#c4c4c4;letter-spacing:0.500px;">X</span>
<div style="left:1683px;top:273.40000000000003px;width:55.59999999999991px;height:22.19999999999999px;background:#2a2a2a;border:1px solid #212121;box-sizing:border-box;border-radius:3px;"></div>
<span class="t" style="left:1687px;top:275.20px;font-size:15px;line-height:20px;color:#d8d8d8;letter-spacing:0.500px;">1</span>
<span class="t" style="left:1745px;top:274.60px;font-size:15px;line-height:20px;color:#c4c4c4;letter-spacing:0.500px;">Y</span>
<div style="left:1763px;top:273.40000000000003px;width:55.59999999999991px;height:22.19999999999999px;background:#2a2a2a;border:1px solid #212121;box-sizing:border-box;border-radius:3px;"></div>
<span class="t" style="left:1767px;top:275.20px;font-size:15px;line-height:20px;color:#d8d8d8;letter-spacing:0.500px;">1</span>
<span class="t" style="left:1825.6px;top:274.60px;font-size:15px;line-height:20px;color:#c4c4c4;letter-spacing:0.500px;">Z</span>
<div style="left:1843px;top:273.40000000000003px;width:56px;height:22.19999999999999px;background:#2a2a2a;border:1px solid #212121;box-sizing:border-box;border-radius:3px;"></div>
<span class="t" style="left:1847px;top:275.20px;font-size:15px;line-height:20px;color:#d8d8d8;letter-spacing:0.500px;">1</span>
<svg style="left:1637px;top:277.5px;" width="17" height="14" viewBox="0 0 17 14"><path d="M5.600 3.400H4.600Q1.600 3.400 1.600 6.800Q1.600 10.200 4.600 10.200H6.600M9.400 3.400H11.600Q14.800 3.400 14.800 6.800Q14.800 9.400 12.800 10" fill="none" stroke="#c4c4c4" stroke-width="1.500"/><path d="M3 1L13.600 13" stroke="#c4c4c4" stroke-width="1.400"/></svg>
<div style="left:1522px;top:307px;width:383px;height:1px;background:#1f1f1f;"></div><div style="left:1522px;top:308px;width:383px;height:26px;background:#3e3e3e;"></div>
<svg style="left:1529.5px;top:317px;" width="11" height="9" viewBox="0 0 11 9"><path d="M0.600 0.600H10.400L5.500 8.400Z" fill="#6e6e6e"/></svg>
<svg style="left:1547.5px;top:312.5px;" width="19" height="19" viewBox="0 0 19 19"><rect x="2" y="2" width="13.600" height="13.600" fill="none" stroke="#a48cd8" stroke-width="1.300"/><rect x="0.600" y="0.600" width="3" height="3" fill="#a48cd8"/><rect x="14" y="0.600" width="3" height="3" fill="#a48cd8"/><rect x="0.600" y="14" width="3" height="3" fill="#a48cd8"/><path d="M5 7.400Q5 4.600 8 4.600Q11 4.600 11 7.400V10H5Z" fill="#c8c8c8"/><ellipse cx="12.400" cy="13.400" rx="5.400" ry="3.600" fill="#3e3e3e"/><path d="M7 13.400Q12.400 8.400 17.800 13.400Q12.400 18.400 7 13.400Z" fill="#d8d8d8"/><circle cx="12.400" cy="13.400" r="1.800" fill="#3e3e3e"/></svg>
<div style="left:1572.4px;top:313px;width:17.0px;height:17px;background:#2a2a2a;border:1px solid #212121;box-sizing:border-box;border-radius:3px;"></div><svg style="left:1574.9px;top:316px;" width="12" height="11" viewBox="0 0 12 11"><path d="M1.400 5.600L4.600 9L10.600 1.600" fill="none" stroke="#e8e8e8" stroke-width="1.900"/></svg>
<span class="t" style="left:1597.6px;top:311.40px;font-size:15px;line-height:20px;color:#e4e4e4;letter-spacing:0.218px;font-weight:bold;">Sprite Renderer</span>
<svg style="left:1831.5px;top:314.9px;" width="13" height="13" viewBox="0 0 13 13"><circle cx="6.500" cy="6.500" r="6.300" fill="#c4c4c4"/><path d="M4.400 5.200Q4.400 3 6.600 3Q8.700 3 8.700 4.900Q8.700 6 7.500 6.700Q6.600 7.300 6.600 8.200" fill="none" stroke="#3e3e3e" stroke-width="1.700"/><rect x="5.700" y="9.300" width="1.800" height="1.700" fill="#3e3e3e"/></svg><svg style="left:1856.5px;top:314.9px;" width="14" height="13" viewBox="0 0 14 13"><path d="M0.500 3.400H8M11 3.400H13.500M0.500 9.600H3.400M6.400 9.600H13.500" stroke="#c4c4c4" stroke-width="1.500"/><path d="M9.500 0.800V6M4.900 7V12.200" stroke="#c4c4c4" stroke-width="1.700"/></svg><svg style="left:1885.5px;top:314.9px;" width="5" height="13" viewBox="0 0 5 13"><circle cx="2.500" cy="2" r="1.500" fill="#c4c4c4"/><circle cx="2.500" cy="6.500" r="1.500" fill="#c4c4c4"/><circle cx="2.500" cy="11" r="1.500" fill="#c4c4c4"/></svg>
<span class="t" style="left:1546.3px;top:341.60px;font-size:15px;line-height:20px;color:#c4c4c4;letter-spacing:0.303px;">Sprite</span>
<div style="left:1697.3px;top:340.6px;width:201.10000000000014px;height:21.80000000000001px;background:#2a2a2a;border:1px solid #212121;box-sizing:border-box;border-radius:3px;"></div><div style="left:1875px;top:341.6px;width:22.4px;height:19.8px;background:#373737;border-radius:0 2px 2px 0;"></div><svg style="left:1701.5px;top:345px;" width="14" height="14" viewBox="0 0 14 14"><rect x="2" y="2" width="10" height="10" fill="none" stroke="#a48cd8" stroke-width="1.200"/><rect x="0.600" y="0.600" width="2.600" height="2.600" fill="#a48cd8"/><rect x="10.800" y="0.600" width="2.600" height="2.600" fill="#a48cd8"/><rect x="0.600" y="10.800" width="2.600" height="2.600" fill="#a48cd8"/><rect x="10.800" y="10.800" width="2.600" height="2.600" fill="#a48cd8"/><circle cx="7" cy="7" r="2.800" fill="#d0d0d0"/></svg><span class="t" style="left:1717.3px;top:342.00px;font-size:15px;line-height:20px;color:#d8d8d8;letter-spacing:0.359px;">Apprentice_0</span><svg style="left:1879.7px;top:345.1px;" width="13" height="13" viewBox="0 0 13 13"><circle cx="6.500" cy="6.500" r="5.400" fill="none" stroke="#c4c4c4" stroke-width="1.300"/><circle cx="6.500" cy="6.500" r="1.900" fill="#c4c4c4"/></svg>
<span class="t" style="left:1546.3px;top:366.40px;font-size:15px;line-height:20px;color:#c4c4c4;letter-spacing:0.431px;">Color</span>
<div style="left:1697.3px;top:365.4px;width:201.10000000000014px;height:21.80000000000001px;background:#2a2a2a;border:1px solid #212121;box-sizing:border-box;border-radius:3px;"></div>
<div style="left:1697.6px;top:366.2px;width:177.6px;height:20px;background:#ffffff;"></div>
<svg style="left:1880px;top:369.5px;" width="14" height="14" viewBox="0 0 14 14"><path d="M1 13L2 9.600L8 3.600L10.400 6L4.400 12Z" fill="#c4c4c4"/><path d="M7.400 2.400L11.600 6.600M9.600 4.400L12 2Q13 1 12.600 0.600" stroke="#c4c4c4" stroke-width="2.200" fill="none"/></svg>
<span class="t" style="left:1546.3px;top:391.40px;font-size:15px;line-height:20px;color:#c4c4c4;letter-spacing:0.307px;">Flip</span>
<div style="left:1697.3px;top:393.2px;width:17.0px;height:17.0px;background:#2a2a2a;border:1px solid #212121;box-sizing:border-box;border-radius:3px;"></div>
<span class="t" style="left:1719.5px;top:391.40px;font-size:15px;line-height:20px;color:#c4c4c4;letter-spacing:0.500px;">X</span>
<div style="left:1734px;top:393.2px;width:17px;height:17.0px;background:#2a2a2a;border:1px solid #212121;box-sizing:border-box;border-radius:3px;"></div>
<span class="t" style="left:1757.2px;top:391.40px;font-size:15px;line-height:20px;color:#c4c4c4;letter-spacing:0.500px;">Y</span>
<span class="t" style="left:1546.3px;top:416.20px;font-size:15px;line-height:20px;color:#c4c4c4;letter-spacing:0.590px;">Draw Mode</span>
<div style="left:1697.6px;top:415.59999999999997px;width:200.80000000000018px;height:21.600000000000023px;background:#515151;border:1px solid #303030;box-sizing:border-box;border-radius:3px;"></div><span class="t" style="left:1701.8999999999999px;top:416.10px;font-size:15px;line-height:20px;color:#e0e0e0;letter-spacing:0.358px;">Simple</span><svg style="left:1882.0px;top:423.2px;" width="10" height="7" viewBox="0 0 10 7"><path d="M0.4 0.6H9.6L5 6.2Z" fill="#d2d2d2"/></svg>
<span class="t" style="left:1546.3px;top:441.20px;font-size:15px;line-height:20px;color:#c4c4c4;letter-spacing:0.622px;">Mask Interaction</span>
<div style="left:1697.6px;top:440.59999999999997px;width:200.80000000000018px;height:21.600000000000023px;background:#515151;border:1px solid #303030;box-sizing:border-box;border-radius:3px;"></div><span class="t" style="left:1701.8999999999999px;top:441.10px;font-size:15px;line-height:20px;color:#e0e0e0;letter-spacing:0.285px;">None</span><svg style="left:1882.0px;top:448.2px;" width="10" height="7" viewBox="0 0 10 7"><path d="M0.4 0.6H9.6L5 6.2Z" fill="#d2d2d2"/></svg>
<span class="t" style="left:1546.3px;top:466.20px;font-size:15px;line-height:20px;color:#c4c4c4;letter-spacing:0.375px;">Sprite Sort Point</span>
<div style="left:1697.6px;top:465.59999999999997px;width:200.80000000000018px;height:21.600000000000023px;background:#515151;border:1px solid #303030;box-sizing:border-box;border-radius:3px;"></div><span class="t" style="left:1701.8999999999999px;top:466.10px;font-size:15px;line-height:20px;color:#e0e0e0;letter-spacing:0.531px;">Pivot</span><svg style="left:1882.0px;top:473.2px;" width="10" height="7" viewBox="0 0 10 7"><path d="M0.4 0.6H9.6L5 6.2Z" fill="#d2d2d2"/></svg>
<span class="t" style="left:1546.3px;top:491.60px;font-size:15px;line-height:20px;color:#c4c4c4;letter-spacing:0.581px;">Material</span>
<div style="left:1697.3px;top:490.6px;width:201.10000000000014px;height:21.799999999999955px;background:#2a2a2a;border:1px solid #212121;box-sizing:border-box;border-radius:3px;"></div><div style="left:1875px;top:491.6px;width:22.4px;height:19.8px;background:#373737;border-radius:0 2px 2px 0;"></div><svg style="left:1701.5px;top:495px;" width="14" height="14" viewBox="0 0 14 14"><circle cx="7" cy="7" r="6.200" fill="#64c8f4"/><circle cx="5.600" cy="5.400" r="3.400" fill="#e8f8ff"/></svg><span class="t" style="left:1717.3px;top:492.00px;font-size:15px;line-height:20px;color:#d8d8d8;letter-spacing:0.720px;">Sprites-Default</span><svg style="left:1879.7px;top:495.1px;" width="13" height="13" viewBox="0 0 13 13"><circle cx="6.500" cy="6.500" r="5.400" fill="none" stroke="#c4c4c4" stroke-width="1.300"/><circle cx="6.500" cy="6.500" r="1.900" fill="#c4c4c4"/></svg>
<svg style="left:1529.5px;top:522.5px;" width="11" height="9" viewBox="0 0 11 9"><path d="M0.600 0.600H10.400L5.500 8.400Z" fill="#6e6e6e"/></svg>
<span class="t" style="left:1547.6px;top:516.60px;font-size:15px;line-height:20px;color:#dcdcdc;letter-spacing:0.228px;font-weight:bold;">Additional Settings</span>
<span class="t" style="left:1564.2px;top:541.40px;font-size:15px;line-height:20px;color:#c4c4c4;letter-spacing:0.522px;">Sorting Layer</span>
<div style="left:1697.6px;top:540.8px;width:200.80000000000018px;height:21.600000000000023px;background:#515151;border:1px solid #303030;box-sizing:border-box;border-radius:3px;"></div><span class="t" style="left:1701.8999999999999px;top:541.30px;font-size:15px;line-height:20px;color:#e0e0e0;letter-spacing:0.375px;">Foreground</span><svg style="left:1882.0px;top:548.3999999999999px;" width="10" height="7" viewBox="0 0 10 7"><path d="M0.4 0.6H9.6L5 6.2Z" fill="#d2d2d2"/></svg>
<span class="t" style="left:1564.2px;top:566.60px;font-size:15px;line-height:20px;color:#c4c4c4;letter-spacing:0.338px;">Order in Layer</span>
<div style="left:1697.3px;top:565.6px;width:201.10000000000014px;height:21.799999999999955px;background:#2a2a2a;border:1px solid #212121;box-sizing:border-box;border-radius:3px;"></div>
<span class="t" style="left:1701.6px;top:567.20px;font-size:15px;line-height:20px;color:#d8d8d8;letter-spacing:0.500px;">0</span>
<div style="left:1522px;top:600px;width:383px;height:1px;background:#1f1f1f;"></div><div style="left:1522px;top:601px;width:383px;height:26.399999999999977px;background:#3e3e3e;"></div>
<svg style="left:1529.5px;top:610.5px;" width="11" height="9" viewBox="0 0 11 9"><path d="M0.600 0.600H10.400L5.500 8.400Z" fill="#6e6e6e"/></svg>
<div style="left:1549.5px;top:607px;width:15.2px;height:14.8px;background:#9be84c;"></div>
<div style="left:1552.8px;top:610.2px;width:8.6px;height:8.4px;background:#3e3e3e;"></div>
<div style="left:1572.4px;top:606.2px;width:17.0px;height:17.0px;background:#2a2a2a;border:1px solid #212121;box-sizing:border-box;border-radius:3px;"></div><svg style="left:1574.9px;top:609.2px;" width="12" height="11" viewBox="0 0 12 11"><path d="M1.400 5.600L4.600 9L10.600 1.600" fill="none" stroke="#e8e8e8" stroke-width="1.900"/></svg>
<span class="t" style="left:1597.6px;top:604.60px;font-size:15px;line-height:20px;color:#e4e4e4;letter-spacing:0.001px;font-weight:bold;">Box Collider 2D</span>
<svg style="left:1831.5px;top:608.1px;" width="13" height="13" viewBox="0 0 13 13"><circle cx="6.500" cy="6.500" r="6.300" fill="#c4c4c4"/><path d="M4.400 5.200Q4.400 3 6.600 3Q8.700 3 8.700 4.900Q8.700 6 7.500 6.700Q6.600 7.300 6.600 8.200" fill="none" stroke="#3e3e3e" stroke-width="1.700"/><rect x="5.700" y="9.300" width="1.800" height="1.700" fill="#3e3e3e"/></svg><svg style="left:1856.5px;top:608.1px;" width="14" height="13" viewBox="0 0 14 13"><path d="M0.500 3.400H8M11 3.400H13.500M0.500 9.600H3.400M6.400 9.600H13.500" stroke="#c4c4c4" stroke-width="1.500"/><path d="M9.500 0.800V6M4.900 7V12.200" stroke="#c4c4c4" stroke-width="1.700"/></svg><svg style="left:1885.5px;top:608.1px;" width="5" height="13" viewBox="0 0 5 13"><circle cx="2.500" cy="2" r="1.500" fill="#c4c4c4"/><circle cx="2.500" cy="6.500" r="1.500" fill="#c4c4c4"/><circle cx="2.500" cy="11" r="1.500" fill="#c4c4c4"/></svg>
<span class="t" style="left:1546.3px;top:634.80px;font-size:15px;line-height:20px;color:#c4c4c4;letter-spacing:0.395px;">Edit Collider</span>
<div style="left:1696.4px;top:636px;width:39.19999999999982px;height:27.600000000000023px;background:#3c3c3c;border:1px solid #242424;box-sizing:border-box;border-radius:3px;"></div>
<svg style="left:1706px;top:641px;" width="20" height="17" viewBox="0 0 20 17"><path d="M3.400 13.200Q6.600 10.400 8.200 5M11.400 5Q13 9.600 16.400 10" stroke="#c4c4c4" stroke-width="1.300" fill="none"/><rect x="7.600" y="1.600" width="4" height="4" fill="none" stroke="#c4c4c4" stroke-width="1.300"/><rect x="1.200" y="11.600" width="4" height="4" fill="none" stroke="#c4c4c4" stroke-width="1.300"/><rect x="14.800" y="8.400" width="4" height="4" fill="none" stroke="#c4c4c4" stroke-width="1.300"/></svg>
<span class="t" style="left:1546.3px;top:670.80px;font-size:15px;line-height:20px;color:#c4c4c4;letter-spacing:0.581px;">Material</span>
<div style="left:1697.3px;top:669.6px;width:201.10000000000014px;height:22.0px;background:#2a2a2a;border:1px solid #212121;box-sizing:border-box;border-radius:3px;"></div>
<div style="left:1700px;top:671px;width:175px;height:19px;overflow:hidden;"><span class="t" style="left:1.6px;top:-0.10px;font-size:15px;line-height:20px;color:#d8d8d8;letter-spacing:0.620px;">None (Physics Material 2D)</span></div>
<div style="left:1875px;top:670.6px;width:22.4px;height:20px;background:#373737;border-radius:0 2px 2px 0;"></div>
<svg style="left:1879.7px;top:674.3px;" width="13" height="13" viewBox="0 0 13 13"><circle cx="6.500" cy="6.500" r="5.400" fill="none" stroke="#c4c4c4" stroke-width="1.300"/><circle cx="6.500" cy="6.500" r="1.900" fill="#c4c4c4"/></svg>
<span class="t" style="left:1546.3px;top:695.80px;font-size:15px;line-height:20px;color:#c4c4c4;letter-spacing:0.748px;">Is Trigger</span>
<div style="left:1697.3px;top:697.4px;width:17.0px;height:17.0px;background:#2a2a2a;border:1px solid #212121;box-sizing:border-box;border-radius:3px;"></div>
<span class="t" style="left:1546.3px;top:720.80px;font-size:15px;line-height:20px;color:#c4c4c4;letter-spacing:0.446px;">Used By Effector</span>
<div style="left:1697.3px;top:722.4px;width:17.0px;height:17.0px;background:#2a2a2a;border:1px solid #212121;box-sizing:border-box;border-radius:3px;"></div>
<span class="t" style="left:1546.3px;top:745.80px;font-size:15px;line-height:20px;color:#c4c4c4;letter-spacing:0.438px;">Used By Composite</span>
<div style="left:1697.3px;top:747.4px;width:17.0px;height:17.0px;background:#2a2a2a;border:1px solid #212121;box-sizing:border-box;border-radius:3px;"></div>
<span class="t" style="left:1546.3px;top:770.80px;font-size:15px;line-height:20px;color:#c4c4c4;letter-spacing:0.542px;">Auto Tiling</span>
<div style="left:1697.3px;top:772.4px;width:17.0px;height:17.0px;background:#2a2a2a;border:1px solid #212121;box-sizing:border-box;border-radius:3px;"></div>
<span class="t" style="left:1546.3px;top:795.80px;font-size:15px;line-height:20px;color:#c4c4c4;letter-spacing:0.543px;">Offset</span>
<span class="t" style="left:1546.3px;top:845.80px;font-size:15px;line-height:20px;color:#c4c4c4;letter-spacing:0.455px;">Size</span>
<span class="t" style="left:1564.4px;top:821.00px;font-size:15px;line-height:20px;color:#c4c4c4;letter-spacing:0.500px;">X</span>
<span class="t" style="left:1735.6px;top:821.00px;font-size:15px;line-height:20px;color:#c4c4c4;letter-spacing:0.500px;">Y</span>
<div style="left:1582.4px;top:819.6px;width:145.5999999999999px;height:22.0px;background:#2a2a2a;border:1px solid #212121;box-sizing:border-box;border-radius:3px;"></div>
<div style="left:1753.2px;top:819.6px;width:145.5999999999999px;height:22.0px;background:#2a2a2a;border:1px solid #212121;box-sizing:border-box;border-radius:3px;"></div>
<span class="t" style="left:1586.2px;top:821.40px;font-size:15px;line-height:20px;color:#d8d8d8;letter-spacing:0.500px;">0</span>
<span class="t" style="left:1756.8px;top:821.40px;font-size:15px;line-height:20px;color:#d8d8d8;letter-spacing:0.895px;">0.09263249</span>
<span class="t" style="left:1564.4px;top:871.00px;font-size:15px;line-height:20px;color:#c4c4c4;letter-spacing:0.500px;">X</span>
<span class="t" style="left:1735.6px;top:871.00px;font-size:15px;line-height:20px;color:#c4c4c4;letter-spacing:0.500px;">Y</span>
<div style="left:1582.4px;top:869.6px;width:145.5999999999999px;height:22.0px;background:#2a2a2a;border:1px solid #212121;box-sizing:border-box;border-radius:3px;"></div>
<div style="left:1753.2px;top:869.6px;width:145.5999999999999px;height:22.0px;background:#2a2a2a;border:1px solid #212121;box-sizing:border-box;border-radius:3px;"></div>
<span class="t" style="left:1586.2px;top:871.40px;font-size:15px;line-height:20px;color:#d8d8d8;letter-spacing:0.677px;">0.2662223</span>
<span class="t" style="left:1756.8px;top:871.40px;font-size:15px;line-height:20px;color:#d8d8d8;letter-spacing:0.380px;">0.185265</span>
<span class="t" style="left:1546.3px;top:895.80px;font-size:15px;line-height:20px;color:#c4c4c4;letter-spacing:0.246px;">Edge Radius</span>
<div style="left:1697px;top:894.4px;width:201.79999999999995px;height:22.200000000000045px;background:#2a2a2a;border:1px solid #212121;box-sizing:border-box;border-radius:3px;"></div>
<span class="t" style="left:1701.2px;top:896.40px;font-size:15px;line-height:20px;color:#d8d8d8;letter-spacing:0.500px;">0</span>
<svg style="left:1532px;top:925.4px;" width="9" height="11" viewBox="0 0 9 11"><path d="M0.600 0.600L8.400 5.500L0.600 10.400Z" fill="#6e6e6e"/></svg>
<span class="t" style="left:1546.3px;top:920.80px;font-size:15px;line-height:20px;color:#c4c4c4;letter-spacing:0.420px;">Layer Overrides</span>
<svg style="left:1531px;top:950px;" width="11" height="9" viewBox="0 0 11 9"><path d="M0.600 0.600H10.400L5.500 8.400Z" fill="#6e6e6e"/></svg>
<span class="t" style="left:1546.3px;top:943.80px;font-size:15px;line-height:20px;color:#c4c4c4;letter-spacing:0.345px;">Info</span>
<span class="t" style="left:1549.4px;top:968.80px;font-size:15px;line-height:20px;color:#7c7c7c;letter-spacing:0.526px;">Attached Body</span>
<div style="left:1701.5px;top:968px;width:196.9000000000001px;height:21.399999999999977px;background:#404040;border:1px solid #303030;box-sizing:border-box;border-radius:3px;"></div>
<svg style="left:1704.5px;top:972.5px;" width="13" height="13" viewBox="0 0 13 13"><circle cx="6.500" cy="6.500" r="6" fill="#8cc850"/><path d="M6.500 0.500A6 6 0 0 1 12.500 6.500H6.500ZM6.500 12.500A6 6 0 0 1 0.500 6.500H6.500Z" fill="#2c4420"/><circle cx="6.500" cy="6.500" r="6" fill="none" stroke="#8cc850" stroke-width="1.200"/></svg>
<span class="t" style="left:1720.6px;top:969.00px;font-size:15px;line-height:20px;color:#8c8c8c;letter-spacing:0.413px;">Player (Rigidbody 2D)</span>
<svg style="left:1880.3px;top:972.3px;" width="13" height="13" viewBox="0 0 13 13"><circle cx="6.500" cy="6.500" r="5.400" fill="none" stroke="#8a8a8a" stroke-width="1.300"/><circle cx="6.500" cy="6.500" r="1.900" fill="#8a8a8a"/></svg>
<!-- proj -->
<div style="left:0px;top:668px;width:1520px;height:325px;background:#383838;"></div>
<div style="left:0px;top:668px;width:1520px;height:24px;background:#282828;"></div>
<div style="left:0px;top:668px;width:102.4px;height:24px;background:#3c3c3c;border-radius:3px 3px 0 0;"></div>
<svg style="left:8.5px;top:674px;" width="16" height="14" viewBox="0 0 16 14"><path d="M0.800 2Q0.800 1 1.800 1H6L7.600 3H13.800Q14.800 3 14.800 4V12Q14.800 13 13.800 13H1.800Q0.800 13 0.800 12Z" fill="#c4c4c4"/></svg>
<span class="t" style="left:28.2px;top:671.00px;font-size:15px;line-height:20px;color:#d2d2d2;letter-spacing:0.545px;">Project</span>
<svg style="left:113.5px;top:674.5px;" width="13" height="13" viewBox="0 0 13 13"><rect x="0.600" y="0.600" width="11.800" height="11.800" rx="1" fill="#c4c4c4"/><path d="M2.600 3.400H10.400M2.600 6.200H10.400M2.600 9H10.400" stroke="#282828" stroke-width="1.200"/></svg>
<span class="t" style="left:132.4px;top:671.00px;font-size:15px;line-height:20px;color:#d2d2d2;letter-spacing:0.367px;">Console</span>
<svg style="left:224px;top:672px;" width="19" height="19" viewBox="0 0 19 19"><path d="M9.500 1.200L17 5.400V13.600L9.500 17.800L2 13.600V5.400Z" fill="none" stroke="#c4c4c4" stroke-width="1.700"/><path d="M7.200 6H9.600Q12.400 6 12.400 9.500Q12.400 13 9.600 13H7.200Z" fill="none" stroke="#c4c4c4" stroke-width="1.500"/></svg>
<span class="t" style="left:248px;top:671.00px;font-size:15px;line-height:20px;color:#d2d2d2;letter-spacing:0.481px;">Unity Version Control</span>
<svg style="left:428px;top:673.5px;" width="16" height="16" viewBox="0 0 16 16"><circle cx="8" cy="8" r="7.400" fill="#c4c4c4"/><path d="M8 2.600V8.400H13" stroke="#282828" stroke-width="1.500" fill="none"/></svg>
<span class="t" style="left:448.3px;top:671.00px;font-size:15px;line-height:20px;color:#d2d2d2;letter-spacing:0.444px;">Animation</span>
<svg style="left:553.5px;top:675.5px;" width="14" height="11" viewBox="0 0 14 11"><path d="M0.600 0.800L5 5.500L0.600 10.200M5 5.500H13M10.400 2.800L13.200 5.500L10.400 8.200" stroke="#c4c4c4" stroke-width="1.500" fill="none"/></svg>
<span class="t" style="left:572.5px;top:671.00px;font-size:15px;line-height:20px;color:#d2d2d2;letter-spacing:0.372px;">Animator</span>
<svg style="left:1476.5px;top:672px;" width="11" height="12" viewBox="0 0 12 13"><rect x="1" y="6.400" width="9.600" height="5.600" rx="0.800" fill="none" stroke="#c4c4c4" stroke-width="1.300"/><path d="M3.400 6.400V3.600Q3.400 1 6 1Q8.600 1 8.600 3.200" fill="none" stroke="#c4c4c4" stroke-width="1.300"/></svg>
<svg style="left:1500.5px;top:672.2px;" width="5" height="13" viewBox="0 0 5 13"><circle cx="2.500" cy="2" r="1.500" fill="#c4c4c4"/><circle cx="2.500" cy="6.500" r="1.500" fill="#c4c4c4"/><circle cx="2.500" cy="11" r="1.500" fill="#c4c4c4"/></svg>
<div style="left:0px;top:692px;width:1520px;height:25.4px;background:#3c3c3c;"></div>
<div style="left:0px;top:717px;width:1520px;height:1px;background:#232323;"></div>
<svg style="left:8.5px;top:697.5px;" width="15" height="15" viewBox="0 0 15 15"><path d="M7.500 0.800V14.200M0.800 7.500H14.200" stroke="#d2d2d2" stroke-width="1.600"/></svg>
<svg style="left:29px;top:702px;" width="9" height="6" viewBox="0 0 9 6"><path d="M0.400 0.500H8.600L4.500 5.600Z" fill="#c4c4c4"/></svg>
<div style="left:936.6px;top:696.6px;width:395.4px;height:18px;background:#2a2a2a;border-radius:4px;border:1px solid #212121;box-sizing:border-box;"></div>
<svg style="left:942px;top:700.5px;" width="11" height="11" viewBox="0 0 11 11"><circle cx="4" cy="4" r="2.900" fill="none" stroke="#b4b4b4" stroke-width="1.400"/><path d="M6 6L9.600 9.800" stroke="#b4b4b4" stroke-width="1.700"/></svg>
<div style="left:1312.6px;top:697.6px;width:18.4px;height:16px;background:#383838;border-radius:0 3px 3px 0;"></div>
<svg style="left:1315px;top:699.5px;" width="14" height="13" viewBox="0 0 14 13"><rect x="0.800" y="5" width="7" height="7" fill="none" stroke="#b4b4b4" stroke-width="1.200"/><path d="M4 5V1H13V10H8" fill="none" stroke="#b4b4b4" stroke-width="1.200"/><path d="M6.400 7.600L10.600 3.400M7.600 3.200H10.800V6.400" fill="none" stroke="#b4b4b4" stroke-width="1.200"/></svg>
<div style="left:1336.4px;top:693px;width:1px;height:24px;background:#303030;"></div>
<div style="left:1369.3px;top:693px;width:1px;height:24px;background:#303030;"></div>
<div style="left:1401.9px;top:693px;width:1px;height:24px;background:#303030;"></div>
<div style="left:1434.2px;top:693px;width:1px;height:24px;background:#303030;"></div>
<div style="left:1466.1px;top:693px;width:1px;height:24px;background:#303030;"></div>
<svg style="left:1344.5px;top:697px;" width="16" height="16" viewBox="0 0 16 16"><circle cx="4.600" cy="3.800" r="3" fill="#c4c4c4"/><path d="M10.600 1L14.400 7.400H6.800Z" fill="#c4c4c4"/><circle cx="5.400" cy="11.400" r="3.800" fill="#c4c4c4"/></svg>
<svg style="left:1376.5px;top:697.5px;" width="15" height="15" viewBox="0 0 15 15"><path d="M1.400 8L8 1.400H13.400V6.800L6.800 13.400Z" fill="#c4c4c4"/><circle cx="10.600" cy="4.200" r="1.300" fill="#3c3c3c"/></svg>
<svg style="left:1408.3px;top:696.8px;" width="16" height="16" viewBox="0 0 16 16"><circle cx="8" cy="8" r="7.600" fill="#c4c4c4"/><rect x="7" y="3.400" width="2" height="6" fill="#3c3c3c"/><rect x="7" y="10.800" width="2" height="2" fill="#3c3c3c"/></svg>
<svg style="left:1442px;top:697.5px;" width="15" height="14" viewBox="0 0 15 14"><path d="M7.500 0.600L9.600 5H14.400L10.600 8.200L12 13.200L7.500 10.400L3 13.200L4.400 8.200L0.600 5H5.400Z" fill="#9a9a9a"/></svg>
<svg style="left:1473.5px;top:698.5px;" width="18" height="12" viewBox="0 0 18 12"><path d="M0.800 6Q9 -3 17.200 6Q9 15 0.800 6Z" fill="#6a6a6a"/><circle cx="9" cy="6" r="2.800" fill="#555"/></svg>
<span class="t" style="left:1494px;top:694.70px;font-size:15px;line-height:20px;color:#c4c4c4;letter-spacing:0.158px;">23</span>
<div style="left:0px;top:948px;width:409px;height:20px;background:#4d4d4d;"></div>
<svg style="left:57.3px;top:710.8px;" width="17" height="14" viewBox="0 0 17 14"><path d="M0.800 2Q0.800 1 1.800 1H6L7.600 3H14.200Q15.200 3 15.200 4V12Q15.200 13 14.200 13H1.800Q0.800 13 0.800 12Z" fill="#c4c4c4"/></svg>
<span class="t" style="left:77px;top:707.80px;font-size:15px;line-height:20px;color:#d2d2d2;letter-spacing:0.504px;">EnvironmentAnimations</span>
<svg style="left:41.9px;top:732.3px;" width="9" height="11" viewBox="0 0 9 11"><path d="M0.600 0.600L8.400 5.500L0.600 10.400Z" fill="#7a7a7a"/></svg>
<svg style="left:57.3px;top:730.8px;" width="17" height="14" viewBox="0 0 17 14"><path d="M0.800 2Q0.800 1 1.800 1H6L7.600 3H14.200Q15.200 3 15.200 4V12Q15.200 13 14.200 13H1.800Q0.800 13 0.800 12Z" fill="#c4c4c4"/></svg>
<span class="t" style="left:77px;top:727.80px;font-size:15px;line-height:20px;color:#d2d2d2;letter-spacing:0.318px;">Examples</span>
<svg style="left:57.3px;top:750.8px;" width="17" height="14" viewBox="0 0 17 14"><path d="M0.800 2Q0.800 1 1.800 1H6L7.600 3H14.200Q15.200 3 15.200 4V12Q15.200 13 14.200 13H1.800Q0.800 13 0.800 12Z" fill="#c4c4c4"/></svg>
<span class="t" style="left:77px;top:747.80px;font-size:15px;line-height:20px;color:#d2d2d2;letter-spacing:0.580px;">PlayerAnimations</span>
<svg style="left:57.3px;top:770.8px;" width="17" height="14" viewBox="0 0 17 14"><path d="M0.800 2Q0.800 1 1.800 1H6L7.600 3H14.200Q15.200 3 15.200 4V12Q15.200 13 14.200 13H1.800Q0.800 13 0.800 12Z" fill="#c4c4c4"/></svg>
<span class="t" style="left:77px;top:767.80px;font-size:15px;line-height:20px;color:#d2d2d2;letter-spacing:0.518px;">RobotAnimations</span>
<svg style="left:57.3px;top:790.8px;" width="17" height="14" viewBox="0 0 17 14"><path d="M0.800 2Q0.800 1 1.800 1H6L7.600 3H14.200Q15.200 3 15.200 4V12Q15.200 13 14.200 13H1.800Q0.800 13 0.800 12Z" fill="#c4c4c4"/></svg>
<span class="t" style="left:77px;top:787.80px;font-size:15px;line-height:20px;color:#d2d2d2;letter-spacing:0.553px;">UiAnimations</span>
<svg style="left:23.0px;top:813.3px;" width="11" height="9" viewBox="0 0 11 9"><path d="M0.600 0.600H10.400L5.500 8.400Z" fill="#7a7a7a"/></svg>
<svg style="left:39.4px;top:810.8px;" width="17" height="14" viewBox="0 0 17 14"><path d="M0.800 2Q0.800 1 1.800 1H5.600L7.200 3H12.600Q13.600 3 13.600 4V5H3.600L0.800 12Z" fill="#c4c4c4"/><path d="M4.200 6H16.400L13.400 13H1Z" fill="#c4c4c4"/></svg>
<span class="t" style="left:60px;top:807.80px;font-size:15px;line-height:20px;color:#d2d2d2;letter-spacing:0.527px;">Audio</span>
<svg style="left:57.3px;top:830.8px;" width="17" height="14" viewBox="0 0 17 14"><path d="M0.800 2Q0.800 1 1.800 1H6L7.600 3H14.200Q15.200 3 15.200 4V12Q15.200 13 14.200 13H1.800Q0.800 13 0.800 12Z" fill="#c4c4c4"/></svg>
<span class="t" style="left:77px;top:827.80px;font-size:15px;line-height:20px;color:#d2d2d2;letter-spacing:0.318px;">Examples</span>
<svg style="left:57.3px;top:850.8px;" width="17" height="14" viewBox="0 0 17 14"><path d="M0.800 2Q0.800 1 1.800 1H6L7.600 3H14.200Q15.200 3 15.200 4V12Q15.200 13 14.200 13H1.800Q0.800 13 0.800 12Z" fill="#c4c4c4"/></svg>
<span class="t" style="left:77px;top:847.80px;font-size:15px;line-height:20px;color:#d2d2d2;letter-spacing:0.626px;">Interface</span>
<svg style="left:57.3px;top:870.8px;" width="17" height="14" viewBox="0 0 17 14"><path d="M0.800 2Q0.800 1 1.800 1H6L7.600 3H14.200Q15.200 3 15.200 4V12Q15.200 13 14.200 13H1.800Q0.800 13 0.800 12Z" fill="#c4c4c4"/></svg>
<span class="t" style="left:77px;top:867.80px;font-size:15px;line-height:20px;color:#d2d2d2;letter-spacing:0.846px;">Music</span>
<svg style="left:57.3px;top:890.8px;" width="17" height="14" viewBox="0 0 17 14"><path d="M0.800 2Q0.800 1 1.800 1H6L7.600 3H14.200Q15.200 3 15.200 4V12Q15.200 13 14.200 13H1.800Q0.800 13 0.800 12Z" fill="#c4c4c4"/></svg>
<span class="t" style="left:77px;top:887.80px;font-size:15px;line-height:20px;color:#d2d2d2;letter-spacing:-0.057px;">SFX</span>
<svg style="left:39.4px;top:910.8px;" width="17" height="14" viewBox="0 0 17 14"><path d="M0.800 2Q0.800 1 1.800 1H6L7.600 3H14.200Q15.200 3 15.200 4V12Q15.200 13 14.200 13H1.800Q0.800 13 0.800 12Z" fill="#c4c4c4"/></svg>
<span class="t" style="left:60px;top:907.80px;font-size:15px;line-height:20px;color:#d2d2d2;letter-spacing:0.497px;">Fonts</span>
<svg style="left:39.4px;top:930.8px;" width="17" height="14" viewBox="0 0 17 14"><path d="M0.800 2Q0.800 1 1.800 1H6L7.600 3H14.200Q15.200 3 15.200 4V12Q15.200 13 14.200 13H1.800Q0.800 13 0.800 12Z" fill="#c4c4c4"/></svg>
<span class="t" style="left:60px;top:927.80px;font-size:15px;line-height:20px;color:#d2d2d2;letter-spacing:0.683px;">Materials</span>
<svg style="left:24.0px;top:952.3px;" width="9" height="11" viewBox="0 0 9 11"><path d="M0.600 0.600L8.400 5.500L0.600 10.400Z" fill="#7a7a7a"/></svg>
<svg style="left:39.4px;top:950.8px;" width="17" height="14" viewBox="0 0 17 14"><path d="M0.800 2Q0.800 1 1.800 1H6L7.600 3H14.200Q15.200 3 15.200 4V12Q15.200 13 14.200 13H1.800Q0.800 13 0.800 12Z" fill="#c4c4c4"/></svg>
<span class="t" style="left:60px;top:947.80px;font-size:15px;line-height:20px;color:#d2d2d2;letter-spacing:0.472px;">Prefabs</span>
<svg style="left:23.0px;top:973.3px;" width="11" height="9" viewBox="0 0 11 9"><path d="M0.600 0.600H10.400L5.500 8.400Z" fill="#7a7a7a"/></svg>
<svg style="left:39.4px;top:970.8px;" width="17" height="14" viewBox="0 0 17 14"><path d="M0.800 2Q0.800 1 1.800 1H5.600L7.200 3H12.600Q13.600 3 13.600 4V5H3.600L0.800 12Z" fill="#c4c4c4"/><path d="M4.200 6H16.400L13.400 13H1Z" fill="#c4c4c4"/></svg>
<span class="t" style="left:60px;top:967.80px;font-size:15px;line-height:20px;color:#d2d2d2;letter-spacing:0.661px;">Scenes</span>
<svg style="left:57.3px;top:990.8px;" width="17" height="14" viewBox="0 0 17 14"><path d="M0.800 2Q0.800 1 1.800 1H6L7.600 3H14.200Q15.200 3 15.200 4V12Q15.200 13 14.200 13H1.800Q0.800 13 0.800 12Z" fill="#c4c4c4"/></svg>
<span class="t" style="left:77px;top:987.80px;font-size:15px;line-height:20px;color:#d2d2d2;letter-spacing:0.318px;">Examples</span>
<div style="left:0px;top:692px;width:426px;height:25.4px;background:#3c3c3c;"></div>
<div style="left:0px;top:717px;width:426px;height:1px;background:#232323;"></div>
<svg style="left:8.5px;top:697.5px;" width="15" height="15" viewBox="0 0 15 15"><path d="M7.500 0.800V14.200M0.800 7.500H14.200" stroke="#d2d2d2" stroke-width="1.600"/></svg>
<svg style="left:29px;top:702px;" width="9" height="6" viewBox="0 0 9 6"><path d="M0.400 0.500H8.600L4.500 5.600Z" fill="#c4c4c4"/></svg>
<div style="left:409.5px;top:718px;width:16px;height:275px;background:#353535;"></div>
<div style="left:411.4px;top:809px;width:12px;height:115.6px;background:#5f5f5f;border-radius:6px;"></div>
<svg style="left:412.5px;top:725.5px;" width="10" height="7" viewBox="0 0 10 7"><path d="M0.400 6.400H9.600L5 0.800Z" fill="#c4c4c4"/></svg>
<svg style="left:412.5px;top:979.5px;" width="10" height="7" viewBox="0 0 10 7"><path d="M0.4 0.6H9.6L5 6.2Z" fill="#c4c4c4"/></svg>
<div style="left:425.5px;top:718px;width:1px;height:275px;background:#232323;"></div>
<div style="left:426.5px;top:718px;width:1093.5px;height:26px;background:#3c3c3c;"></div>
<div style="left:426.5px;top:744px;width:1093.5px;height:223px;background:#333333;"></div>
<div style="left:426.5px;top:967px;width:1093.5px;height:26px;background:#3c3c3c;"></div>
<span class="t" style="left:431.3px;top:720.60px;font-size:15px;line-height:20px;color:#b4b4b4;letter-spacing:0.331px;">Assets</span>
<svg style="left:487.5px;top:725.5px;" width="7" height="10" viewBox="0 0 7 10"><path d="M1 0.800L5.600 5L1 9.200" fill="none" stroke="#8a8a8a" stroke-width="1.500"/></svg>
<span class="t" style="left:502.3px;top:720.60px;font-size:15px;line-height:20px;color:#d2d2d2;letter-spacing:0.310px;font-weight:bold;">Prefabs</span>
<div style="left:1504px;top:744px;width:16px;height:223px;background:#353535;"></div>
<div style="left:1506.4px;top:765.4px;width:12.2px;height:170.6px;background:#5f5f5f;border-radius:6px;"></div>
<svg style="left:1507px;top:751px;" width="10" height="7" viewBox="0 0 10 7"><path d="M0.400 6.400H9.600L5 0.800Z" fill="#c4c4c4"/></svg>
<svg style="left:1507px;top:954px;" width="10" height="7" viewBox="0 0 10 7"><path d="M0.4 0.6H9.6L5 6.2Z" fill="#c4c4c4"/></svg>
<div style="left:1431px;top:979.6px;width:69px;height:1.6px;background:#5e5e5e;"></div>
<div style="left:1464.6px;top:974.4px;width:12.4px;height:12.4px;background:#999999;border-radius:50%;"></div>
<svg style="left:455px;top:772px;" width="60" height="50" viewBox="0 0 60 50"><path d="M0 4Q0 0 4 0H22Q25 0 26.400 2.400L30.400 9.600H56Q60 9.600 60 13.600V46Q60 50 56 50H4Q0 50 0 46Z" fill="#c2c2c2"/></svg>
<svg style="left:545px;top:762px;" width="67" height="71" viewBox="0 0 67 71"><path d="M33.500 0.800L66 16.600V52.400L33.500 70L1 52.400V16.600Z" fill="#7dcdf8" stroke="#7dcdf8" stroke-width="1.500" stroke-linejoin="round"/><path d="M2 17.400L33.500 33L65 17.400M33.500 33V69" fill="none" stroke="#333333" stroke-width="4.600"/></svg>
<div style="left:639.4px;top:760px;width:75px;height:75px;background:#515151;box-shadow:0 1px 3px rgba(0,0,0,.55);"></div>
<svg style="left:639.4px;top:760px;" width="75" height="75" viewBox="0 0 75 75"><path d="M9.4 28.800H20.4L14.0 46.200H3.0Z" fill="#d83c3c"/><path d="M26.8 28.800H37.8L31.4 46.200H20.4Z" fill="#d83c3c"/><path d="M44.2 28.800H55.2L48.8 46.200H37.8Z" fill="#d83c3c"/><path d="M61.6 28.800H72.6L66.2 46.200H55.2Z" fill="#d83c3c"/></svg>
<div style="left:735.1px;top:760px;width:75px;height:75px;background:#515151;box-shadow:0 1px 3px rgba(0,0,0,.55);"></div>
<svg style="left:735.1px;top:760px;" width="75" height="75" viewBox="0 0 75 75"><rect x="26.2" y="7.5" width="21.3" height="21.3" rx="3.8" fill="#fff"/><path d="M33.9 13.3V23.0M33.9 13.9H40.7M33.9 18.1H39.4M33.9 22.4H40.7" stroke="#444" stroke-width="2.1" fill="none"/><ellipse cx="36.600" cy="60.600" rx="8" ry="2.400" fill="#3c3c3c"/><path d="M34.600 34.500h4.200v7.600l4.800 6.400q2.400 10.800-6.900 11.400q-9.400-.6-6.900-11.400l4.800-6.400z" fill="#6436c4"/><path d="M31.600 52q1.600 5 6 5.600q-5.600 1-6-5.600z" fill="#9a78e8"/><rect x="34.400" y="38.400" width="4.600" height="3.200" fill="#a8c8f8"/><rect x="35" y="34" width="3.400" height="3.600" fill="#b87844"/></svg>
<div style="left:830.8px;top:760px;width:75px;height:75px;background:#515151;box-shadow:0 1px 3px rgba(0,0,0,.55);"></div>
<svg style="left:830.8px;top:760px;" width="75" height="75" viewBox="0 0 75 75"><rect x="29.7" y="7" width="15.5" height="15.5" rx="2.8" fill="#fff"/><path d="M35.3 11.2V18.3M35.3 11.6H40.2M35.3 14.8H39.3M35.3 17.9H40.2" stroke="#444" stroke-width="1.6" fill="none"/><ellipse cx="37.500" cy="59" rx="11" ry="3.400" fill="#3a3a3a"/><rect x="24" y="30" width="27" height="27" rx="4" fill="#111"/><rect x="27" y="31.600" width="22.400" height="21" rx="2" fill="#4f7c46"/><rect x="27" y="51.400" width="22.400" height="3.200" fill="#c8d8b8"/><path d="M25.600 36v3M25.600 42v3M25.600 48v3" stroke="#4f7c46" stroke-width="1.600"/></svg>
<div style="left:926.5px;top:760px;width:75px;height:75px;background:#515151;box-shadow:0 1px 3px rgba(0,0,0,.55);"></div>
<svg style="left:939.5px;top:776.6px;" width="50" height="43" viewBox="0 0 50 43"><path d="M1 27L2 20L8 14L12 7L20 2L30 1L38 5L42 12L47 17L49 25L47 33L40 38L30 41L18 41L8 37L2 32Z" fill="#6a8a2a"/><path d="M2 26L3 20L9 14.500L13 8L20 3.400L30 2.400L37 6L41 12.600L46 18L47.600 25L46 31L39 35.600L30 38L18 38L9 35L3 30Z" fill="#1f4a38"/><path d="M4 23L6 19L11 15.600L14.600 9.400L21 5.400H29L35 8L39 14L44 19L45 24L42 28L37 26L33 30L27 27L21 31L16 27L11 29L6 27Z" fill="#2c7a3e"/><path d="M16 13L20 15L26 17.600L31 16L28 19.600L22 19L17 16ZM8 21L12 23L15 22L12 25L8.600 24ZM33 13L37 16L39 21L35.600 18ZM19 23L23 25L27 23.600L24 26.600Z" fill="#1f5a38"/></svg>
<div style="left:1022.2px;top:760px;width:75px;height:75px;background:#515151;box-shadow:0 1px 3px rgba(0,0,0,.55);"></div>
<div style="left:1034.1000000000001px;top:771.75px;width:52.6px;height:51.65px;background:#ff0000;"></div>
<svg style="left:1120.2px;top:762px;" width="67" height="71" viewBox="0 0 67 71"><path d="M33.500 0.800L66 16.600V52.400L33.500 70L1 52.400V16.600Z" fill="#7dcdf8" stroke="#7dcdf8" stroke-width="1.500" stroke-linejoin="round"/><path d="M2 17.400L33.500 33L65 17.400M33.500 33V69" fill="none" stroke="#333333" stroke-width="4.600"/></svg>
<div style="left:1213.6px;top:760px;width:75px;height:75px;background:#515151;box-shadow:0 1px 3px rgba(0,0,0,.55);"></div>
<svg style="left:1226.5px;top:773.6px;" width="52" height="46" viewBox="0 0 52 46"><path d="M2 8L10 3L15 8L20 1L30 5L34 12L44 1L50 3L44 16L42 34L30 40L12 36L8 24L2 14Z" fill="#9c5c2a"/><path d="M8 24L12 36L30 40L42 34L44 16L36 22L28 34L16 28Z" fill="#74401c"/><path d="M4 9L10 5L14 10L8 14ZM20 3L29 7L25 12Z" fill="#c88a4a"/><path d="M6 44L9 34L12 42L15 32L18 42L22 36L24 43M34 42L38 34L40 42L44 33L46 40L50 34L49 43" stroke="#8cc63c" stroke-width="2" fill="none"/><path d="M8 44H48" stroke="#6a9a2c" stroke-width="2"/></svg>
<div style="left:1309.3000000000002px;top:760px;width:75px;height:75px;background:#515151;box-shadow:0 1px 3px rgba(0,0,0,.55);"></div>
<svg style="left:1333.8000000000002px;top:784px;" width="27" height="27" viewBox="0 0 27 27"><path d="M8 0.500H19V3.500H23.500V8H26.500V19H23.500V23.500H19V26.500H8V23.500H3.500V19H0.500V8H3.500V3.500H8Z" fill="#ff6cc8"/><path d="M9.500 4H17.500V6.500H20.500V9.500H23V17.500H20.500V20.500H17.500V23H9.500V20.500H6.500V17.500H4V9.500H6.500V6.500H9.500Z" fill="#ff00b4"/></svg>
<div style="left:1405.0px;top:760px;width:75px;height:75px;background:#515151;box-shadow:0 1px 3px rgba(0,0,0,.55);"></div>
<svg style="left:1405.0px;top:760px;" width="75" height="75" viewBox="0 0 75 75"><rect x="30.9" y="7.5" width="15.4" height="15.4" rx="2.8" fill="#fff"/><path d="M36.4 11.7V18.7M36.4 12.1H41.4M36.4 15.2H40.4M36.4 18.3H41.4" stroke="#444" stroke-width="1.5" fill="none"/><ellipse cx="38.700" cy="62.400" rx="9" ry="2.600" fill="#3c3c3c"/><path d="M36.700 35.500h4v8l5 6.600q2.400 11-7 11.600q-9.400-.6-7-11.600l5-6.600z" fill="#a8402c"/><path d="M33.400 53q1.600 5.400 6 6q-5.600 1-6-6z" fill="#d87860"/><rect x="36" y="36.600" width="5.400" height="3.400" fill="#78b8e8"/><rect x="37" y="32" width="3.400" height="3.600" fill="#b87844"/></svg>
<span class="t" style="left:456.35px;top:839.40px;font-size:12.5px;line-height:16px;color:#d2d2d2;letter-spacing:0.427px;">Examples</span>
<span class="t" style="left:544.95px;top:839.40px;font-size:12.5px;line-height:16px;color:#d2d2d2;letter-spacing:0.527px;">AudioMan...</span>
<svg style="left:646.9499999999999px;top:839.4px;" width="15" height="16" viewBox="0 0 15 16"><path d="M7.500 0.600L14.400 4V11.600L7.500 15.400L0.600 11.600V4Z" fill="#7ecbf5"/><path d="M0.600 4L7.500 7.600L14.400 4M7.500 7.600V15.400" fill="none" stroke="#333" stroke-width="1.300"/><path d="M3.600 2.500L7.500 4.500L11.400 2.500" fill="none" stroke="#e8f6ff" stroke-width="1"/></svg><span class="t" style="left:664.55px;top:839.40px;font-size:12.5px;line-height:16px;color:#d2d2d2;letter-spacing:0.685px;">Barrier</span>
<svg style="left:730.45px;top:839.4px;" width="15" height="16" viewBox="0 0 15 16"><path d="M7.500 0.600L14.400 4V11.600L7.500 15.400L0.600 11.600V4Z" fill="#7ecbf5"/><path d="M0.600 4L7.500 7.600L14.400 4M7.500 7.600V15.400" fill="none" stroke="#333" stroke-width="1.300"/><path d="M3.600 2.500L7.500 4.500L11.400 2.500" fill="none" stroke="#e8f6ff" stroke-width="1"/></svg><span class="t" style="left:748.0500000000001px;top:839.40px;font-size:12.5px;line-height:16px;color:#d2d2d2;letter-spacing:0.624px;">BluePotion</span>
<svg style="left:843.8px;top:839.4px;" width="15" height="16" viewBox="0 0 15 16"><path d="M7.500 0.600L14.400 4V11.600L7.500 15.400L0.600 11.600V4Z" fill="#7ecbf5"/><path d="M0.600 4L7.500 7.600L14.400 4M7.500 7.600V15.400" fill="none" stroke="#333" stroke-width="1.300"/><path d="M3.600 2.500L7.500 4.500L11.400 2.500" fill="none" stroke="#e8f6ff" stroke-width="1"/></svg><span class="t" style="left:861.4px;top:839.40px;font-size:12.5px;line-height:16px;color:#d2d2d2;letter-spacing:0.727px;">Book</span>
<svg style="left:940.3px;top:839.4px;" width="15" height="16" viewBox="0 0 15 16"><path d="M7.500 0.600L14.400 4V11.600L7.500 15.400L0.600 11.600V4Z" fill="#7ecbf5"/><path d="M0.600 4L7.500 7.600L14.400 4M7.500 7.600V15.400" fill="none" stroke="#333" stroke-width="1.300"/><path d="M3.600 2.500L7.500 4.500L11.400 2.500" fill="none" stroke="#e8f6ff" stroke-width="1"/></svg><span class="t" style="left:957.9px;top:839.40px;font-size:12.5px;line-height:16px;color:#d2d2d2;letter-spacing:0.327px;">Bush</span>
<svg style="left:1016.0px;top:839.4px;" width="15" height="16" viewBox="0 0 15 16"><path d="M7.500 0.600L14.400 4V11.600L7.500 15.400L0.600 11.600V4Z" fill="#7ecbf5"/><path d="M0.600 4L7.500 7.600L14.400 4M7.500 7.600V15.400" fill="none" stroke="#333" stroke-width="1.300"/><path d="M3.600 2.500L7.500 4.500L11.400 2.500" fill="none" stroke="#e8f6ff" stroke-width="1"/></svg><span class="t" style="left:1033.6px;top:839.40px;font-size:12.5px;line-height:16px;color:#d2d2d2;letter-spacing:0.859px;">DebugTrap</span>
<span class="t" style="left:1124.0500000000002px;top:839.40px;font-size:12.5px;line-height:16px;color:#d2d2d2;letter-spacing:0.791px;">HealthBar</span>
<svg style="left:1230.5px;top:839.4px;" width="15" height="16" viewBox="0 0 15 16"><path d="M7.500 0.600L14.400 4V11.600L7.500 15.400L0.600 11.600V4Z" fill="#7ecbf5"/><path d="M0.600 4L7.500 7.600L14.400 4M7.500 7.600V15.400" fill="none" stroke="#333" stroke-width="1.300"/><path d="M3.600 2.500L7.500 4.500L11.400 2.500" fill="none" stroke="#e8f6ff" stroke-width="1"/></svg><span class="t" style="left:1248.1px;top:839.40px;font-size:12.5px;line-height:16px;color:#d2d2d2;letter-spacing:0.915px;">Log</span>
<svg style="left:1307.9px;top:839.4px;" width="15" height="16" viewBox="0 0 15 16"><path d="M7.500 0.600L14.400 4V11.600L7.500 15.400L0.600 11.600V4Z" fill="#7ecbf5"/><path d="M0.600 4L7.500 7.600L14.400 4M7.500 7.600V15.400" fill="none" stroke="#333" stroke-width="1.300"/><path d="M3.600 2.500L7.500 4.500L11.400 2.500" fill="none" stroke="#e8f6ff" stroke-width="1"/></svg><span class="t" style="left:1325.5px;top:839.40px;font-size:12.5px;line-height:16px;color:#d2d2d2;letter-spacing:0.462px;">PinkBullet</span>
<svg style="left:1402.05px;top:839.4px;" width="15" height="16" viewBox="0 0 15 16"><path d="M7.500 0.600L14.400 4V11.600L7.500 15.400L0.600 11.600V4Z" fill="#7ecbf5"/><path d="M0.600 4L7.500 7.600L14.400 4M7.500 7.600V15.400" fill="none" stroke="#333" stroke-width="1.300"/><path d="M3.600 2.500L7.500 4.500L11.400 2.500" fill="none" stroke="#e8f6ff" stroke-width="1"/></svg><span class="t" style="left:1419.6499999999999px;top:839.40px;font-size:12.5px;line-height:16px;color:#d2d2d2;letter-spacing:0.548px;">RedPotion</span>
<div style="left:448.0px;top:875.8px;width:75px;height:75px;background:#515151;box-shadow:0 1px 3px rgba(0,0,0,.55);"></div>
<div style="left:543.7px;top:875.8px;width:75px;height:75px;background:#515151;box-shadow:0 1px 3px rgba(0,0,0,.55);"></div>
<div style="left:639.4px;top:875.8px;width:75px;height:75px;background:#515151;box-shadow:0 1px 3px rgba(0,0,0,.55);"></div>
<div style="left:735.1px;top:875.8px;width:75px;height:75px;background:#515151;box-shadow:0 1px 3px rgba(0,0,0,.55);"></div>
<div style="left:830.8px;top:875.8px;width:75px;height:75px;background:#515151;box-shadow:0 1px 3px rgba(0,0,0,.55);"></div>
<div style="left:926.5px;top:875.8px;width:75px;height:75px;background:#515151;box-shadow:0 1px 3px rgba(0,0,0,.55);"></div>
<div style="left:1022.2px;top:875.8px;width:75px;height:75px;background:#515151;box-shadow:0 1px 3px rgba(0,0,0,.55);"></div>
<svg style="left:468.0px;top:885.8px;" width="34" height="48" viewBox="0 0 34 48"><ellipse cx="17" cy="45" rx="10" ry="2.600" fill="#3a3a3a"/><path d="M10 1v4" stroke="#3c5a3c" stroke-width="1.400"/><rect x="9.300" y="0" width="1.600" height="1.600" fill="#7ee05a"/><rect x="2" y="7" width="26" height="19" fill="#24466a"/><rect x="26" y="9" width="4" height="15" fill="#3c5c80"/><rect x="4" y="10" width="19" height="13" fill="#23d0f2"/><rect x="9" y="14" width="2" height="4" fill="#1890b0"/><rect x="15" y="14" width="2" height="4" fill="#1890b0"/><rect x="6" y="26" width="18" height="14" fill="#55647c"/><rect x="0" y="28" width="6" height="6" fill="#6a7a92"/><rect x="6" y="40" width="6" height="5" fill="#4a6a9a"/><rect x="17" y="40" width="6" height="5" fill="#4a6a9a"/><rect x="12" y="29" width="2.400" height="2.400" fill="#7ee05a"/></svg>
<svg style="left:558.2px;top:890.3px;" width="46" height="44" viewBox="0 0 46 44"><path d="M1 26L4 34L14 41L24 43L36 38L43 30" fill="none" stroke="#6a8a2a" stroke-width="2.200"/><path d="M3 24L9 12L17 3L27 2L33 8L34 16L40 22L42 29L34 36L22 40L12 38L5 31Z" fill="#665e4e"/><path d="M9 13L17 3L27 2L33 8L31 13L20 15L12 20L8 26L4 24Z" fill="#a8a082"/><path d="M12 24Q13 17 20 17Q27 18 27 25Q24 31 18 31Q12 30 12 24Z" fill="#9a9276"/><path d="M15 21Q17 18 21 18.600Q24 20 23 24Q19 25 15 21Z" fill="#b8b08e"/><path d="M33 22L38 21L41 27L36 30L32 27Z" fill="#8a8268"/><path d="M6 28L12 34L22 36L30 33L22 40L12 38Z" fill="#7a7260"/></svg>
<svg style="left:653.9px;top:890.3px;" width="46" height="44" viewBox="0 0 46 44"><path d="M2 28L6 36L18 43L28 43L40 36L45 28" fill="none" stroke="#6a8a2a" stroke-width="2.200"/><path d="M4 26L6 20L14 16L16 8L22 2L30 4L34 10L38 14L38 22L44 28L36 36L26 41L16 40L7 33Z" fill="#6a6052"/><path d="M16 8L22 2L30 4L34 10L31 17L24 19L17 16Z" fill="#aaa284"/><path d="M6 20L13 17L17 22L14 27L8 27Z" fill="#a09878"/><path d="M18 24L24 20L30 25L28 32L20 33L16 29Z" fill="#9a9276"/><path d="M33 15L38 14L39 21L34 23L31 19Z" fill="#a09878"/><path d="M10 30L16 31L20 35L16 40L7 33Z" fill="#857d66"/></svg>
<svg style="left:749.6px;top:894.8px;" width="46" height="44" viewBox="0 0 46 44"><path d="M1 26L5 33L14 39L28 39L38 34L44 25" fill="none" stroke="#6a8a2a" stroke-width="2.200"/><path d="M2 24L6 15L16 8L28 7L37 12L42 20L43 26L36 32L26 36L14 36L6 31Z" fill="#665e4e"/><path d="M6 16L16 8L22 9L24 14L18 20L14 26L8 24Z" fill="#aaa284"/><path d="M22 9L28 7L37 12L34 17L26 15Z" fill="#a8a080"/><path d="M20 20L26 17L31 20L30 26L23 27Z" fill="#8e866c"/><path d="M33 18L39 17L41 23L36 25Z" fill="#a09878"/><path d="M8 27L16 30L24 30L30 28L26 36L14 36Z" fill="#7a7260"/></svg>
<svg style="left:845.3px;top:890.3px;" width="46" height="44" viewBox="0 0 46 44"><path d="M3 27L6 36L16 43L28 43L38 37L43 27" fill="none" stroke="#6a8a2a" stroke-width="2.200"/><path d="M5 26L6 18L11 12L14 5L22 1L30 4L34 11L39 16L41 26L36 35L26 40L16 40L8 34Z" fill="#6a6052"/><path d="M14 5L22 1L30 4L34 11L30 17L22 15L16 18L12 13Z" fill="#aaa284"/><path d="M7 18L12 14L17 20L15 28L9 27Z" fill="#9a9276"/><path d="M19 19L25 17L28 22L26 30L20 30Z" fill="#a09878"/><path d="M30 18L36 15L39 22L36 29L30 27Z" fill="#928a70"/></svg>
<svg style="left:926.5px;top:875.8px;" width="75" height="75" viewBox="0 0 75 75"><rect x="30.600" y="9.900" width="14.400" height="14" rx="2.600" fill="#fff"/><path d="M36.300 13.400V20.600M36.300 13.800H40M36.300 17H39.400M36.300 20.200H40" stroke="#444" stroke-width="1.300" fill="none"/><ellipse cx="37.500" cy="58" rx="9" ry="2.600" fill="#3a3a3a"/><rect x="35.600" y="27" width="3.800" height="31" fill="#a8682c"/><rect x="23.400" y="30.400" width="30" height="18.600" fill="#c8843c"/><rect x="25.600" y="32.600" width="25.600" height="14.200" fill="#e0a05a"/><path d="M28 36.400H49M28 39.800H49M28 43.200H49" stroke="#a8682c" stroke-width="1.600"/></svg>
<svg style="left:1046.5px;top:900.5999999999999px;" width="27" height="27" viewBox="0 0 27 27"><path d="M8 0.500H19V3.500H23.500V8H26.500V19H23.500V23.500H19V26.500H8V23.500H3.500V19H0.500V8H3.500V3.500H8Z" fill="#ffc41c"/><path d="M9.500 4H17.500V6.500H20.500V9.500H23V17.500H20.500V20.500H17.500V23H9.500V20.500H6.500V17.500H4V9.500H6.500V6.500H9.500Z" fill="#ff9a00"/></svg>
<svg style="left:458.8px;top:956.4px;" width="15" height="16" viewBox="0 0 15 16"><path d="M7.500 0.600L14.400 4V11.600L7.500 15.400L0.600 11.600V4Z" fill="#7ecbf5"/><path d="M0.600 4L7.500 7.600L14.400 4M7.500 7.600V15.400" fill="none" stroke="#333" stroke-width="1.300"/><path d="M3.600 2.500L7.500 4.500L11.400 2.500" fill="none" stroke="#e8f6ff" stroke-width="1"/></svg><span class="t" style="left:476.40000000000003px;top:956.40px;font-size:12.5px;line-height:16px;color:#d2d2d2;letter-spacing:0.489px;">Robot</span>
<svg style="left:552.6500000000001px;top:956.4px;" width="15" height="16" viewBox="0 0 15 16"><path d="M7.500 0.600L14.400 4V11.600L7.500 15.400L0.600 11.600V4Z" fill="#7ecbf5"/><path d="M0.600 4L7.500 7.600L14.400 4M7.500 7.600V15.400" fill="none" stroke="#333" stroke-width="1.300"/><path d="M3.600 2.500L7.500 4.500L11.400 2.500" fill="none" stroke="#e8f6ff" stroke-width="1"/></svg><span class="t" style="left:570.2500000000001px;top:956.40px;font-size:12.5px;line-height:16px;color:#d2d2d2;letter-spacing:0.099px;">Rock 1</span>
<svg style="left:647.6px;top:956.4px;" width="15" height="16" viewBox="0 0 15 16"><path d="M7.500 0.600L14.400 4V11.600L7.500 15.400L0.600 11.600V4Z" fill="#7ecbf5"/><path d="M0.600 4L7.500 7.600L14.400 4M7.500 7.600V15.400" fill="none" stroke="#333" stroke-width="1.300"/><path d="M3.600 2.500L7.500 4.500L11.400 2.500" fill="none" stroke="#e8f6ff" stroke-width="1"/></svg><span class="t" style="left:665.2px;top:956.40px;font-size:12.5px;line-height:16px;color:#d2d2d2;letter-spacing:0.349px;">Rock 2</span>
<svg style="left:743.3000000000001px;top:956.4px;" width="15" height="16" viewBox="0 0 15 16"><path d="M7.500 0.600L14.400 4V11.600L7.500 15.400L0.600 11.600V4Z" fill="#7ecbf5"/><path d="M0.600 4L7.500 7.600L14.400 4M7.500 7.600V15.400" fill="none" stroke="#333" stroke-width="1.300"/><path d="M3.600 2.500L7.500 4.500L11.400 2.500" fill="none" stroke="#e8f6ff" stroke-width="1"/></svg><span class="t" style="left:760.9000000000001px;top:956.40px;font-size:12.5px;line-height:16px;color:#d2d2d2;letter-spacing:0.349px;">Rock 3</span>
<svg style="left:838.8px;top:956.4px;" width="15" height="16" viewBox="0 0 15 16"><path d="M7.500 0.600L14.400 4V11.600L7.500 15.400L0.600 11.600V4Z" fill="#7ecbf5"/><path d="M0.600 4L7.500 7.600L14.400 4M7.500 7.600V15.400" fill="none" stroke="#333" stroke-width="1.300"/><path d="M3.600 2.500L7.500 4.500L11.400 2.500" fill="none" stroke="#e8f6ff" stroke-width="1"/></svg><span class="t" style="left:856.4px;top:956.40px;font-size:12.5px;line-height:16px;color:#d2d2d2;letter-spacing:0.416px;">Rock 4</span>
<svg style="left:942.6px;top:956.4px;" width="15" height="16" viewBox="0 0 15 16"><path d="M7.500 0.600L14.400 4V11.600L7.500 15.400L0.600 11.600V4Z" fill="#7ecbf5"/><path d="M0.600 4L7.500 7.600L14.400 4M7.500 7.600V15.400" fill="none" stroke="#333" stroke-width="1.300"/><path d="M3.600 2.500L7.500 4.500L11.400 2.500" fill="none" stroke="#e8f6ff" stroke-width="1"/></svg><span class="t" style="left:960.2px;top:956.40px;font-size:12.5px;line-height:16px;color:#d2d2d2;letter-spacing:0.046px;">Sign</span>
<svg style="left:1018.6500000000001px;top:956.4px;" width="15" height="16" viewBox="0 0 15 16"><path d="M7.500 0.600L14.400 4V11.600L7.500 15.400L0.600 11.600V4Z" fill="#7ecbf5"/><path d="M0.600 4L7.500 7.600L14.400 4M7.500 7.600V15.400" fill="none" stroke="#333" stroke-width="1.300"/><path d="M3.600 2.500L7.500 4.500L11.400 2.500" fill="none" stroke="#e8f6ff" stroke-width="1"/></svg><span class="t" style="left:1036.25px;top:956.40px;font-size:12.5px;line-height:16px;color:#d2d2d2;letter-spacing:0.477px;">SmFireball</span>
<div style="left:426.5px;top:967px;width:1077.5px;height:26px;background:#3c3c3c;"></div>
<div style="left:1431px;top:979.6px;width:69px;height:1.6px;background:#5e5e5e;"></div>
<div style="left:1464.6px;top:974.4px;width:12.4px;height:12.4px;background:#999999;border-radius:50%;"></div>
<div style="left:0px;top:993px;width:1920px;height:27px;background:#191919;"></div>
<div style="left:1787.6px;top:994px;width:1px;height:26px;background:#262626;"></div>
<div style="left:1820.6px;top:994px;width:1px;height:26px;background:#262626;"></div>
<div style="left:1853.8px;top:994px;width:1px;height:26px;background:#262626;"></div>
<div style="left:1887px;top:994px;width:1px;height:26px;background:#262626;"></div>
<svg style="left:1795px;top:998.5px;" width="18" height="18" viewBox="0 0 18 18"><ellipse cx="9" cy="10.400" rx="4" ry="5.400" fill="#c8c8c8"/><circle cx="9" cy="4.600" r="2.400" fill="#c8c8c8"/><path d="M4.600 7.400L1.600 5.600M4.400 10.400H1M4.800 13.400L2 15.600M13.400 7.400L16.400 5.600M13.600 10.400H17M13.200 13.400L16 15.600" stroke="#c8c8c8" stroke-width="1.200"/><path d="M2 2L16 17" stroke="#191919" stroke-width="3"/><path d="M2.600 1.600L16.400 16.600" stroke="#c8c8c8" stroke-width="1.300"/></svg>
<svg style="left:1828px;top:998.5px;" width="18" height="18" viewBox="0 0 18 18"><ellipse cx="8.600" cy="4.400" rx="6.600" ry="2.800" fill="#c8c8c8"/><path d="M2 7.400Q8.600 11.400 15.200 7.400V10Q8.600 14 2 10ZM2 11.600Q8.600 15.600 15.200 11.600V14Q8.600 18 2 14Z" fill="#c8c8c8"/><path d="M3 1.400L16.400 17" stroke="#191919" stroke-width="3"/><path d="M3.600 1L17 16.600" stroke="#c8c8c8" stroke-width="1.300"/></svg>
<svg style="left:1861px;top:998.5px;" width="18" height="18" viewBox="0 0 18 18"><path d="M14.600 5A7 7 0 0 0 2.400 7.400M3.400 13A7 7 0 0 0 15.600 10.600" stroke="#c8c8c8" stroke-width="1.400" fill="none"/><path d="M15.400 1.600V5.600H11.400M2.600 16.400V12.400H6.600" stroke="#c8c8c8" stroke-width="1.400" fill="none"/><circle cx="9" cy="9" r="2.600" fill="none" stroke="#c8c8c8" stroke-width="1.300"/><path d="M2 2L16 17" stroke="#191919" stroke-width="3"/><path d="M2.600 1.600L16.400 16.600" stroke="#c8c8c8" stroke-width="1.300"/></svg>
<svg style="left:1893px;top:998.5px;" width="18" height="18" viewBox="0 0 18 18"><circle cx="9" cy="9" r="7.400" fill="none" stroke="#c8c8c8" stroke-width="1.400"/><path d="M5.400 9.200L8 11.800L12.800 6.400" stroke="#c8c8c8" stroke-width="1.500" fill="none"/></svg>
</body></html>
